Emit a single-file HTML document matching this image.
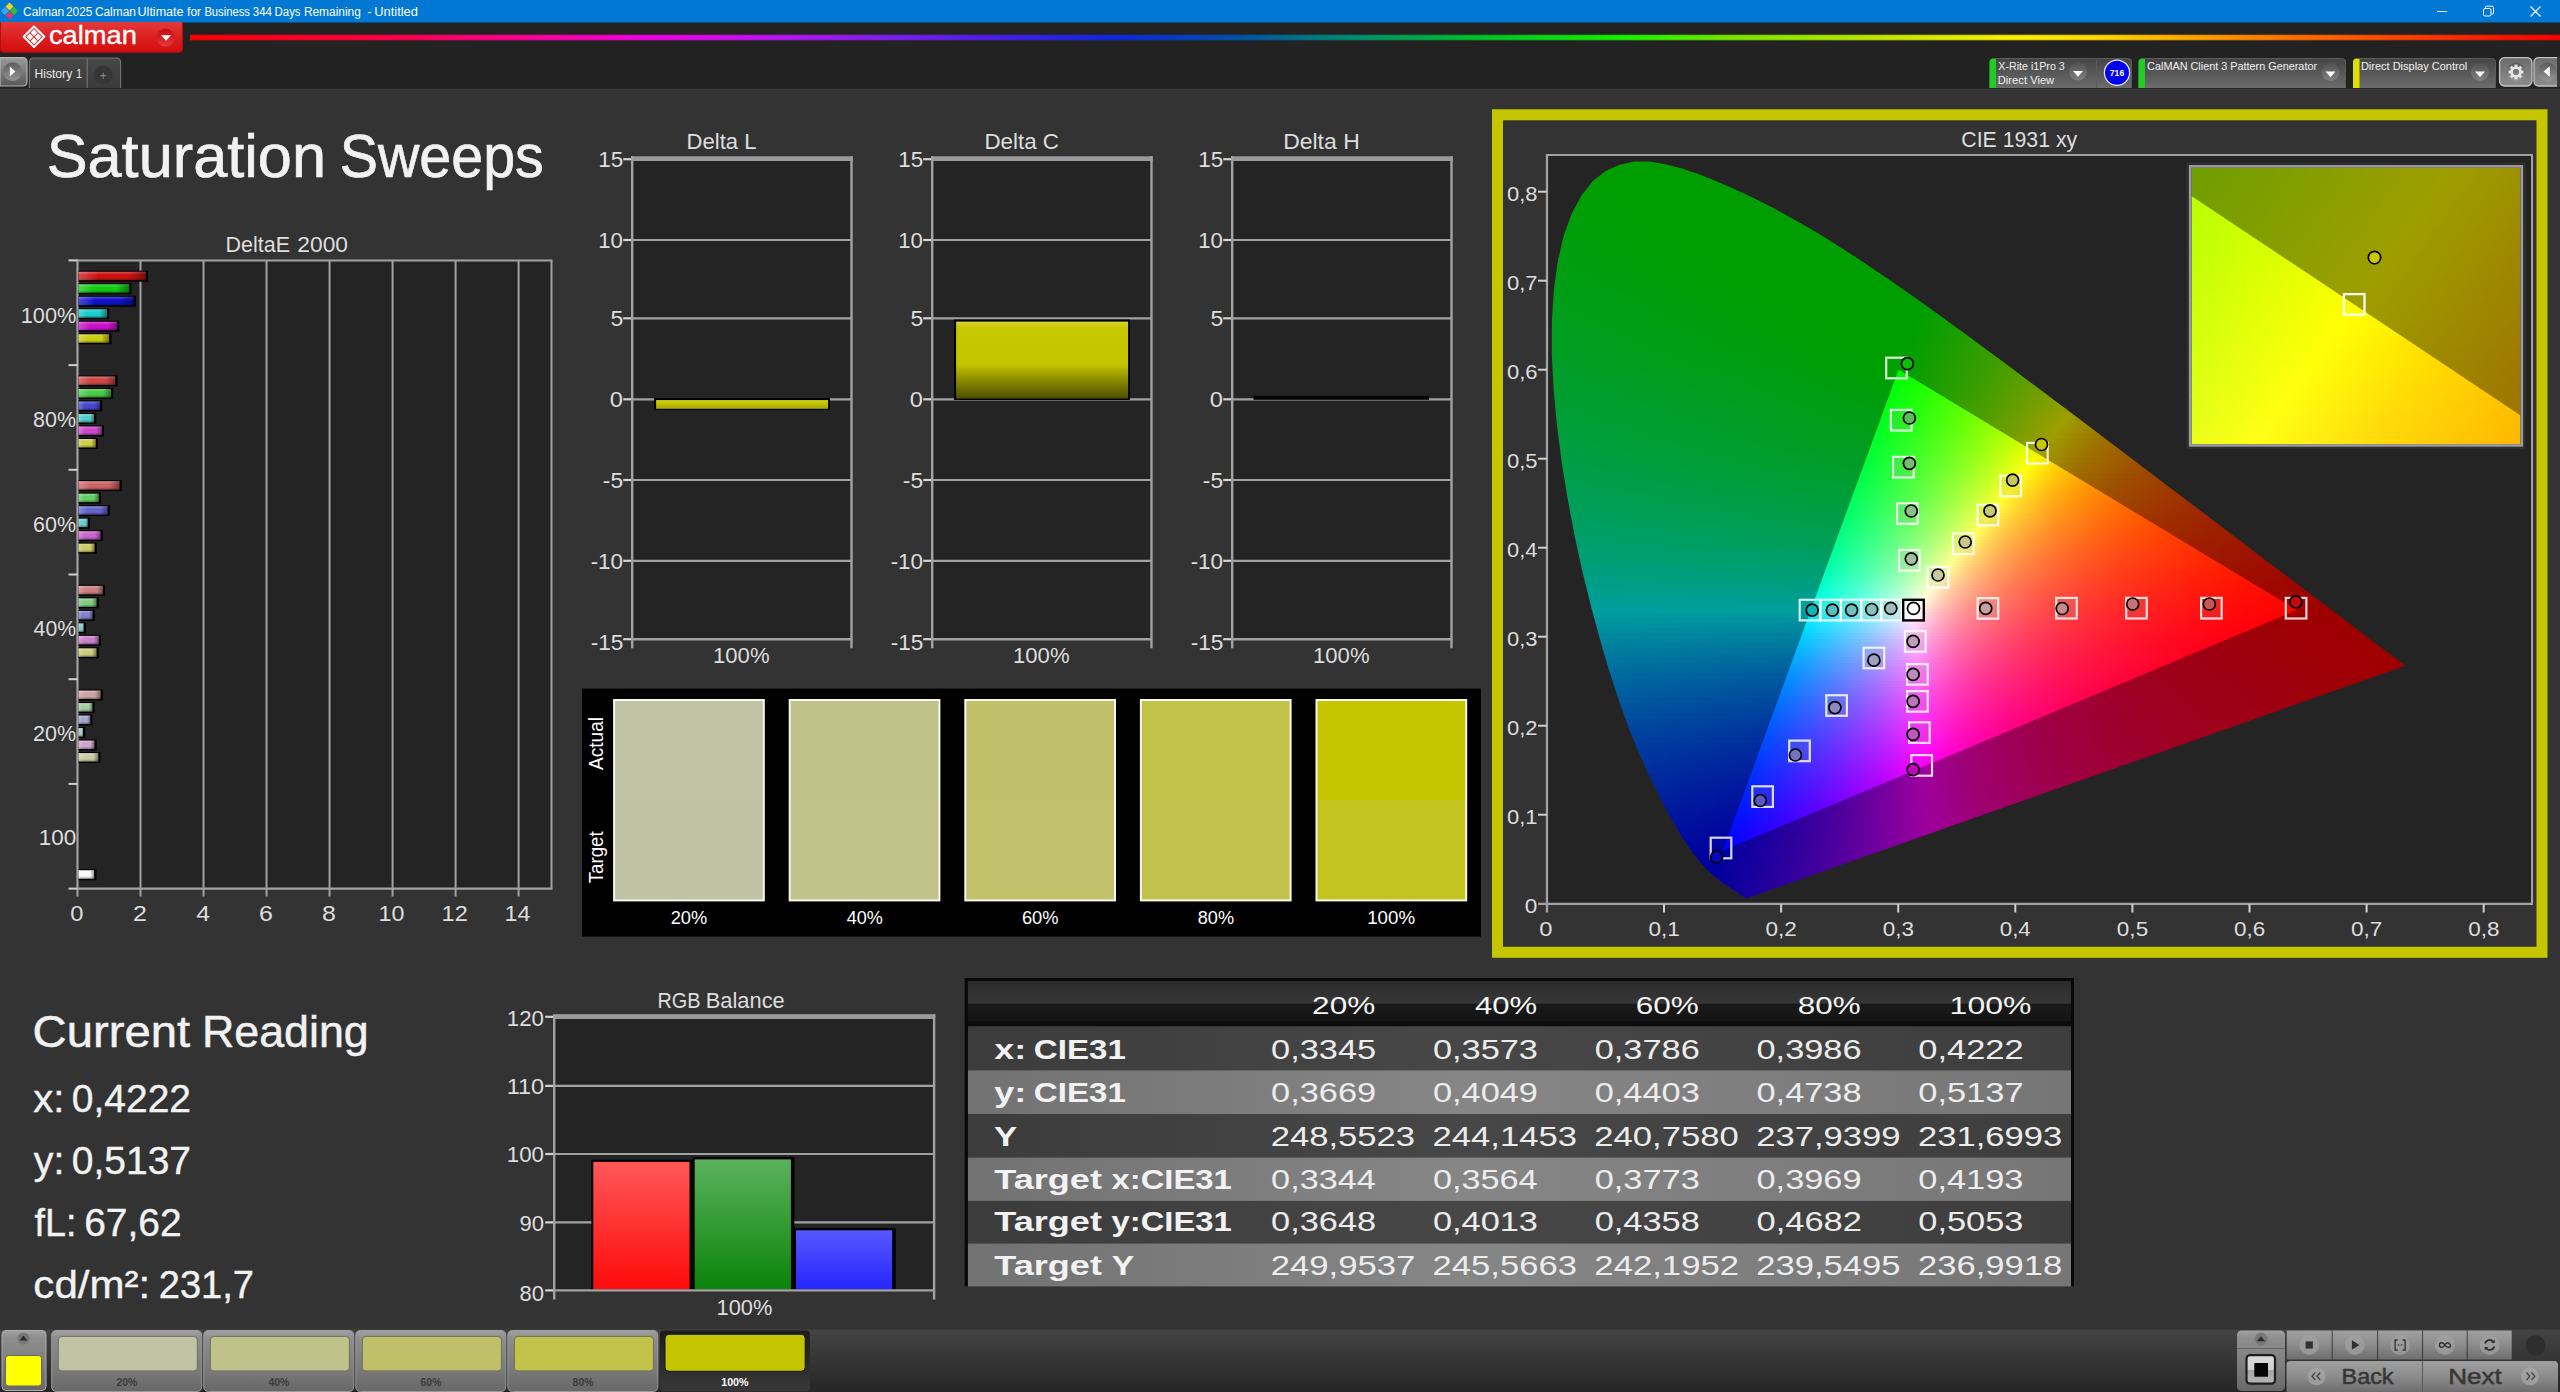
<!DOCTYPE html>
<html><head><meta charset="utf-8"><title>Calman</title>
<style>html,body{margin:0;padding:0;background:#333;overflow:hidden}svg{display:block}text{font-family:"Liberation Sans",sans-serif}</style>
</head><body>
<svg width="2560" height="1392" viewBox="0 0 2560 1392">
<rect x="0" y="0" width="2560" height="1392" fill="#333333" />
<rect x="0" y="22" width="2560" height="66.8" fill="#222222" />
<rect x="0" y="88.8" width="2560" height="1.6" fill="#3a3a3a" />
<rect x="0" y="0" width="2560" height="22.5" fill="#0078d4" />
<defs>
<linearGradient id="rb" x1="0" x2="1" y1="0" y2="0"><stop offset="0" stop-color="#ff0000"/><stop offset="0.075" stop-color="#ff003c"/><stop offset="0.134" stop-color="#ff008c"/><stop offset="0.194" stop-color="#f000e6"/><stop offset="0.243" stop-color="#be14f0"/><stop offset="0.292" stop-color="#821ef0"/><stop offset="0.342" stop-color="#461ee6"/><stop offset="0.391" stop-color="#0a28dc"/><stop offset="0.441" stop-color="#0050aa"/><stop offset="0.49" stop-color="#008c6e"/><stop offset="0.543" stop-color="#00be28"/><stop offset="0.603" stop-color="#14f000"/><stop offset="0.652" stop-color="#78e600"/><stop offset="0.711" stop-color="#bee600"/><stop offset="0.77" stop-color="#faf000"/><stop offset="0.81" stop-color="#ffd200"/><stop offset="0.87" stop-color="#ff8200"/><stop offset="0.929" stop-color="#fa4600"/><stop offset="0.978" stop-color="#fa1400"/><stop offset="1" stop-color="#ff0000"/></linearGradient>
<linearGradient id="redb" x1="0" x2="0" y1="0" y2="1"><stop offset="0" stop-color="#e23a3a"/><stop offset=".5" stop-color="#dc2020"/><stop offset="1" stop-color="#d40d0d"/></linearGradient>
<linearGradient id="tbb" x1="0" x2="0" y1="0" y2="1"><stop offset="0" stop-color="#444"/><stop offset="1" stop-color="#6c6c6c"/></linearGradient><linearGradient id="tbh" x1="0" x2="0" y1="0" y2="1"><stop offset="0" stop-color="#484848"/><stop offset="1" stop-color="#3a3a3a"/></linearGradient><linearGradient id="gbt" x1="0" x2="0" y1="0" y2="1"><stop offset="0" stop-color="#6c6c6c"/><stop offset="1" stop-color="#8c8c8c"/></linearGradient><linearGradient id="gci" x1="0" x2="0" y1="0" y2="1"><stop offset="0" stop-color="#555"/><stop offset="1" stop-color="#9a9a9a"/></linearGradient>
<linearGradient id="lgb" x1="0" x2="0" y1="0" y2="1"><stop offset="0" stop-color="#9a9a9a"/><stop offset=".5" stop-color="#7a7a7a"/><stop offset="1" stop-color="#585858"/></linearGradient>
<radialGradient id="dk" cx=".5" cy=".35" r=".7"><stop offset="0" stop-color="#2e2e2e"/><stop offset="1" stop-color="#444"/></radialGradient>
</defs>
<g transform="translate(9.5,11)"><path d="M0 -8.5L4 -4.5L0 -0.5L-4 -4.5Z" fill="#f2d21a"/><path d="M-4.5 -4L-0.5 0L-4.5 4L-8.5 0Z" fill="#35a8ee"/><path d="M4.5 -4L8.5 0L4.5 4L0.5 0Z" fill="#2fc22f"/><path d="M0 0.5L4 4.5L0 8.5L-4 4.5Z" fill="#e8336e"/></g>
<text x="23.01" y="16" font-size="12.3" fill="#ffffff" textLength="41.18" lengthAdjust="spacingAndGlyphs" >Calman</text>
<text x="65.91" y="16" font-size="12.3" fill="#ffffff" textLength="26.58" lengthAdjust="spacingAndGlyphs" >2025</text>
<text x="94.91" y="16" font-size="12.3" fill="#ffffff" textLength="40.98" lengthAdjust="spacingAndGlyphs" >Calman</text>
<text x="137.58" y="16" font-size="12.3" fill="#ffffff" textLength="45.91" lengthAdjust="spacingAndGlyphs" >Ultimate</text>
<text x="187.06" y="16" font-size="12.3" fill="#ffffff" textLength="13.99" lengthAdjust="spacingAndGlyphs" >for</text>
<text x="204.38" y="16" font-size="12.3" fill="#ffffff" textLength="45.53" lengthAdjust="spacingAndGlyphs" >Business</text>
<text x="252.83" y="16" font-size="12.3" fill="#ffffff" textLength="19.14" lengthAdjust="spacingAndGlyphs" >344</text>
<text x="274.57" y="16" font-size="12.3" fill="#ffffff" textLength="26.01" lengthAdjust="spacingAndGlyphs" >Days</text>
<text x="303.93" y="16" font-size="12.3" fill="#ffffff" textLength="56.86" lengthAdjust="spacingAndGlyphs" >Remaining</text>
<text x="367.40" y="16" font-size="12.3" fill="#ffffff" textLength="4.08" lengthAdjust="spacingAndGlyphs" >-</text>
<text x="374.35" y="16" font-size="12.3" fill="#ffffff" textLength="43.57" lengthAdjust="spacingAndGlyphs" >Untitled</text>
<line x1="2437" y1="11.5" x2="2447" y2="11.5" stroke="#ffffff" stroke-width="1" />
<rect x="2483.5" y="8.5" width="7.5" height="7.5" rx="1.5" fill="none" stroke="#fff" stroke-width="1"/><path d="M2485.5 8V7.2Q2485.5 6.2 2486.5 6.2H2492Q2493.5 6.2 2493.5 7.7V13Q2493.5 14 2492.5 14H2491.5" fill="none" stroke="#fff" stroke-width="1"/>
<path d="M2530.5 6.5L2540.5 16.5M2540.5 6.5L2530.5 16.5" stroke="#fff" stroke-width="1.1" fill="none"/>
<rect x="190" y="34.4" width="2370" height="6.2" fill="url(#rb)" opacity=".45"/>
<rect x="190" y="35.2" width="2370" height="4.6" fill="url(#rb)" />
<path d="M0 22H183V48Q183 52.5 178.5 52.5H4.5Q0 52.5 0 48Z" fill="url(#redb)"/>
<path d="M0.5 22V48Q0.5 52 4.5 52H178.5Q182.5 52 182.5 48V22" fill="none" stroke="#b01010" stroke-width="1"/>
<g transform="translate(34,36.8)" fill="#fff"><path d="M0 -10.3L10.3 0L0 10.3L-10.3 0Z" fill="none" stroke="#fff" stroke-width="2.1" stroke-linejoin="round"/><path d="M0.00 -7.20L3.10 -4.10L0.00 -1.00L-3.10 -4.10Z" stroke="#fff" stroke-width=".6" stroke-linejoin="round"/><path d="M4.10 -3.10L7.20 0.00L4.10 3.10L1.00 0.00Z" stroke="#fff" stroke-width=".6" stroke-linejoin="round"/><path d="M0.00 1.00L3.10 4.10L0.00 7.20L-3.10 4.10Z" stroke="#fff" stroke-width=".6" stroke-linejoin="round"/><path d="M-4.10 -3.10L-1.00 0.00L-4.10 3.10L-7.20 0.00Z" stroke="#fff" stroke-width=".6" stroke-linejoin="round"/></g>
<text x="48.93" y="43.5" font-size="25.4" fill="#ffffff" textLength="88.10" lengthAdjust="spacingAndGlyphs" stroke="#ffffff" stroke-width="0.35" >calman</text>
<defs><linearGradient id="rdc" x1="0" x2="0" y1="0" y2="1"><stop offset="0" stop-color="#c20a12"/><stop offset="1" stop-color="#e23a3a"/></linearGradient></defs>
<circle cx="165.6" cy="37.6" r="9" fill="url(#rdc)"/><path d="M161.2 35.2H171L166.1 40.8Z" fill="#fff"/>
<path d="M0 57.6H22.5Q27 57.6 27 62V81.5Q27 86 22.5 86H0Z" fill="url(#lgb)" stroke="#b4b4b4" stroke-width="1.2"/>
<circle cx="12.5" cy="71.6" r="9.4" fill="url(#gci)" opacity=".85"/><path d="M9.8 66.4L15.3 71.4L9.8 76.4Z" fill="#fff"/>
<path d="M29.4 88V62.5Q29.4 58 34 58H116Q120.6 58 120.6 62.5V88Z" fill="url(#tbh)"/><path d="M29.4 88V62.5Q29.4 58 34 58H116Q120.6 58 120.6 62.5V88" fill="none" stroke="#767676" stroke-width="1.1"/>
<line x1="87.2" y1="58.5" x2="87.2" y2="88" stroke="#767676" stroke-width="1.1" />
<text x="34.53" y="77.8" font-size="12.6" fill="#ececec" textLength="37.67" lengthAdjust="spacingAndGlyphs" >History</text>
<text x="76.12" y="77.8" font-size="12.6" fill="#ececec" textLength="6.09" lengthAdjust="spacingAndGlyphs" >1</text>
<circle cx="103.1" cy="75" r="9.4" fill="#363636"/><path d="M100.2 75.8H106.2M103.2 72.8V78.8" stroke="#8a8a8a" stroke-width="1" fill="none"/>
<path d="M1989.5 88V62.5Q1989.5 58 1994 58H2127.5Q2132 58 2132 62.5V88Z" fill="url(#tbb)"/>
<path d="M1989.5 88V62Q1989.5 58.5 1993.5 58.5H1996V88Z" fill="#22cc22"/>
<path d="M1993.5 58.5H2127.5Q2131.5 58.5 2131.5 62.5V88" fill="none" stroke="#5c5c5c" stroke-width="1"/>
<line x1="2096.5" y1="60" x2="2096.5" y2="88" stroke="#5c5c5c" stroke-width="1" />
<text x="1998.36" y="70" font-size="10.9" fill="#f0f0f0" textLength="66.40" lengthAdjust="spacingAndGlyphs" >X-Rite i1Pro 3</text>
<text x="1997.78" y="84.2" font-size="10.9" fill="#f0f0f0" textLength="56.44" lengthAdjust="spacingAndGlyphs" >Direct View</text>
<circle cx="2078" cy="71.5" r="9" fill="url(#gci)" opacity=".55"/><path d="M2073 71.1H2083L2078 76.7Z" fill="#fff"/>
<circle cx="2117" cy="72.7" r="12.6" fill="#0000f0" stroke="#e8e8ff" stroke-width="1.2"/>
<text x="2117.00" y="76" font-size="8.6" fill="#ffffff" text-anchor="middle" font-weight="bold" >716</text>
<path d="M2138.5 88V62.5Q2138.5 58 2143 58H2341.5Q2346 58 2346 62.5V88Z" fill="url(#tbb)"/>
<path d="M2138.5 88V62Q2138.5 58.5 2142.5 58.5H2145V88Z" fill="#22cc22"/>
<path d="M2142.5 58.5H2341.5Q2345.5 58.5 2345.5 62.5V88" fill="none" stroke="#5c5c5c" stroke-width="1"/>
<text x="2147.11" y="70" font-size="10.9" fill="#f0f0f0" textLength="169.94" lengthAdjust="spacingAndGlyphs" >CalMAN Client 3 Pattern Generator</text>
<circle cx="2330.5" cy="72" r="9" fill="url(#gci)" opacity=".55"/><path d="M2325.5 71.6H2335.5L2330.5 77.2Z" fill="#fff"/>
<path d="M2353 88V62.5Q2353 58 2357.5 58H2491.5Q2496 58 2496 62.5V88Z" fill="url(#tbb)"/>
<path d="M2353 88V62Q2353 58.5 2357 58.5H2359.5V88Z" fill="#e0e000"/>
<path d="M2357 58.5H2491.5Q2495.5 58.5 2495.5 62.5V88" fill="none" stroke="#5c5c5c" stroke-width="1"/>
<text x="2360.90" y="70" font-size="10.9" fill="#f0f0f0" textLength="106.32" lengthAdjust="spacingAndGlyphs" >Direct Display Control</text>
<circle cx="2480" cy="72" r="9" fill="url(#gci)" opacity=".55"/><path d="M2475 71.6H2485L2480 77.2Z" fill="#fff"/>
<rect x="2499.6" y="57.6" width="32.4" height="28.4" rx="5" fill="url(#gbt)" stroke="#c4c4c4" stroke-width="1.3"/>
<circle cx="2516" cy="72" r="9.6" fill="url(#gci)" opacity=".8"/>
<g transform="translate(2516,72)" fill="#e4e4e4"><circle r="4.4" fill="none" stroke="#e4e4e4" stroke-width="2.6"/><rect x="-1.5" y="-7.4" width="3" height="3.4" transform="rotate(0)"/><rect x="-1.5" y="-7.4" width="3" height="3.4" transform="rotate(45)"/><rect x="-1.5" y="-7.4" width="3" height="3.4" transform="rotate(90)"/><rect x="-1.5" y="-7.4" width="3" height="3.4" transform="rotate(135)"/><rect x="-1.5" y="-7.4" width="3" height="3.4" transform="rotate(180)"/><rect x="-1.5" y="-7.4" width="3" height="3.4" transform="rotate(225)"/><rect x="-1.5" y="-7.4" width="3" height="3.4" transform="rotate(270)"/><rect x="-1.5" y="-7.4" width="3" height="3.4" transform="rotate(315)"/></g>
<path d="M2560 57.6H2539Q2534 57.6 2534 62.6V81Q2534 86 2539 86H2560Z" fill="url(#gbt)" stroke="#c4c4c4" stroke-width="1.3"/>
<circle cx="2547.5" cy="72" r="9.6" fill="url(#gci)" opacity=".8"/><path d="M2549.8 66.2L2543.6 71.6L2549.8 77Z" fill="#fff"/>
<rect x="2557" y="57" width="3" height="30" fill="#3a3a3a"/>
<rect x="1497.5" y="114.8" width="1044.5" height="837.5" fill="none" stroke="#c6c600" stroke-width="11"/>
<rect x="1547" y="155" width="986" height="749" fill="#242424" />
<defs><clipPath id="cl"><polygon points="1746.2,898.4 1745.7,898.1 1745.1,897.8 1744.4,897.3 1743.6,896.8 1742.8,896.2 1741.9,895.6 1740.9,894.9 1739.8,894.2 1738.7,893.4 1737.4,892.6 1736.0,891.6 1734.4,890.6 1732.6,889.4 1730.7,888.1 1728.7,886.8 1726.5,885.3 1724.1,883.7 1721.6,881.9 1718.9,879.8 1715.9,877.5 1712.9,874.9 1709.6,872.0 1706.0,868.4 1701.9,863.9 1697.5,858.7 1692.6,852.4 1687.4,845.1 1681.8,836.7 1675.7,826.6 1669.0,814.8 1661.9,801.4 1654.2,785.8 1645.8,767.9 1636.8,747.9 1627.8,725.2 1618.7,699.7 1609.5,671.7 1600.5,641.3 1591.5,608.1 1582.7,572.7 1574.8,536.5 1567.8,499.4 1561.6,461.5 1556.9,424.6 1553.6,388.7 1551.8,353.8 1551.9,320.9 1553.9,290.1 1557.8,261.4 1563.6,236.0 1571.6,214.1 1581.5,195.6 1592.9,181.0 1605.6,170.9 1619.7,164.8 1634.3,161.6 1649.5,161.5 1665.2,164.3 1681.0,168.3 1696.9,173.4 1712.8,179.7 1728.5,186.4 1743.6,193.3 1758.5,200.5 1773.2,208.0 1787.7,215.9 1802.0,224.0 1816.2,232.3 1830.4,241.0 1844.5,249.9 1858.6,259.1 1872.6,268.4 1886.6,277.9 1900.5,287.5 1914.4,297.3 1928.4,307.3 1942.3,317.3 1956.3,327.4 1970.3,337.6 1984.2,347.9 1998.2,358.2 2012.1,368.6 2025.9,379.0 2039.8,389.3 2053.6,399.7 2067.4,410.1 2081.0,420.3 2094.6,430.6 2108.0,440.8 2121.3,450.8 2134.5,460.8 2147.5,470.7 2160.3,480.4 2172.9,490.0 2185.3,499.3 2197.5,508.5 2209.4,517.5 2220.9,526.2 2232.1,534.7 2243.0,543.0 2253.4,550.9 2263.2,558.4 2272.6,565.5 2281.6,572.3 2290.3,578.8 2298.6,585.1 2306.4,591.0 2313.7,596.6 2320.6,601.7 2327.0,606.5 2333.0,611.1 2338.6,615.3 2343.8,619.3 2348.6,622.9 2353.0,626.3 2357.1,629.4 2360.9,632.3 2364.5,635.0 2367.8,637.4 2370.8,639.8 2373.7,641.9 2376.3,643.9 2378.9,645.9 2381.2,647.7 2383.5,649.4 2385.6,651.0 2387.5,652.4 2389.3,653.8 2391.0,655.1 2392.6,656.2 2394.0,657.3 2395.3,658.3 2396.5,659.1 2397.5,660.0 2398.5,660.7 2399.4,661.4 2400.2,662.0 2400.9,662.5 2401.5,663.0 2402.2,663.5 2402.9,664.1 2403.7,664.7 2404.5,665.3 2405.2,665.8"/></clipPath><clipPath id="ct"><polygon points="2296.8,610.1 1898.6,369.7 1723.0,850.5"/></clipPath>
<linearGradient id="a0" gradientUnits="userSpaceOnUse" x1="1624.8" x2="1661.1" y1="0" y2="0"><stop offset="0" stop-color="#009e00"/><stop offset="1" stop-color="#009e00"/></linearGradient><linearGradient id="a1" gradientUnits="userSpaceOnUse" x1="1609.2" x2="1682.7" y1="0" y2="0"><stop offset="0" stop-color="#009e00"/><stop offset="1" stop-color="#009e00"/></linearGradient><linearGradient id="a2" gradientUnits="userSpaceOnUse" x1="1599.9" x2="1698.7" y1="0" y2="0"><stop offset="0" stop-color="#009e00"/><stop offset="1" stop-color="#009e00"/></linearGradient><linearGradient id="a3" gradientUnits="userSpaceOnUse" x1="1593.6" x2="1711.5" y1="0" y2="0"><stop offset="0" stop-color="#009e00"/><stop offset="1" stop-color="#009e00"/></linearGradient><linearGradient id="a4" gradientUnits="userSpaceOnUse" x1="1588.3" x2="1723.5" y1="0" y2="0"><stop offset="0" stop-color="#009e00"/><stop offset="1" stop-color="#009e00"/></linearGradient><linearGradient id="a5" gradientUnits="userSpaceOnUse" x1="1584.4" x2="1735.0" y1="0" y2="0"><stop offset="0" stop-color="#009e01"/><stop offset="1" stop-color="#009e00"/></linearGradient><linearGradient id="a6" gradientUnits="userSpaceOnUse" x1="1580.5" x2="1746.1" y1="0" y2="0"><stop offset="0" stop-color="#009e02"/><stop offset="1" stop-color="#009e00"/></linearGradient><linearGradient id="a7" gradientUnits="userSpaceOnUse" x1="1577.2" x2="1756.4" y1="0" y2="0"><stop offset="0" stop-color="#009e03"/><stop offset="1" stop-color="#009e00"/></linearGradient><linearGradient id="a8" gradientUnits="userSpaceOnUse" x1="1574.6" x2="1766.4" y1="0" y2="0"><stop offset="0" stop-color="#009e04"/><stop offset="0.234" stop-color="#009e00"/><stop offset="1" stop-color="#009e00"/></linearGradient><linearGradient id="a9" gradientUnits="userSpaceOnUse" x1="1571.9" x2="1776.1" y1="0" y2="0"><stop offset="0" stop-color="#009e05"/><stop offset="0.275" stop-color="#009e00"/><stop offset="1" stop-color="#009e00"/></linearGradient><linearGradient id="a10" gradientUnits="userSpaceOnUse" x1="1569.2" x2="1785.4" y1="0" y2="0"><stop offset="0" stop-color="#009e06"/><stop offset="0.301" stop-color="#009e00"/><stop offset="1" stop-color="#009e00"/></linearGradient><linearGradient id="a11" gradientUnits="userSpaceOnUse" x1="1567.2" x2="1794.5" y1="0" y2="0"><stop offset="0" stop-color="#009e07"/><stop offset="0.342" stop-color="#009e00"/><stop offset="1" stop-color="#009e00"/></linearGradient><linearGradient id="a12" gradientUnits="userSpaceOnUse" x1="1565.3" x2="1803.3" y1="0" y2="0"><stop offset="0" stop-color="#009e08"/><stop offset="0.362" stop-color="#009e00"/><stop offset="1" stop-color="#009e00"/></linearGradient><linearGradient id="a13" gradientUnits="userSpaceOnUse" x1="1563.5" x2="1811.8" y1="0" y2="0"><stop offset="0" stop-color="#009e09"/><stop offset="0.386" stop-color="#009e00"/><stop offset="1" stop-color="#009e00"/></linearGradient><linearGradient id="a14" gradientUnits="userSpaceOnUse" x1="1561.7" x2="1820.3" y1="0" y2="0"><stop offset="0" stop-color="#009e0a"/><stop offset="0.414" stop-color="#009e00"/><stop offset="1" stop-color="#009e00"/></linearGradient><linearGradient id="a15" gradientUnits="userSpaceOnUse" x1="1560.1" x2="1828.5" y1="0" y2="0"><stop offset="0" stop-color="#009e0b"/><stop offset="0.433" stop-color="#009e00"/><stop offset="1" stop-color="#009e00"/></linearGradient><linearGradient id="a16" gradientUnits="userSpaceOnUse" x1="1559.0" x2="1836.5" y1="0" y2="0"><stop offset="0" stop-color="#009e0c"/><stop offset="0.452" stop-color="#009e00"/><stop offset="1" stop-color="#009e00"/></linearGradient><linearGradient id="a17" gradientUnits="userSpaceOnUse" x1="1557.8" x2="1844.4" y1="0" y2="0"><stop offset="0" stop-color="#009e0d"/><stop offset="0.469" stop-color="#009e00"/><stop offset="1" stop-color="#009e00"/></linearGradient><linearGradient id="a18" gradientUnits="userSpaceOnUse" x1="1556.7" x2="1852.2" y1="0" y2="0"><stop offset="0" stop-color="#009e0e"/><stop offset="0.485" stop-color="#009e00"/><stop offset="1" stop-color="#009e00"/></linearGradient><linearGradient id="a19" gradientUnits="userSpaceOnUse" x1="1555.5" x2="1859.9" y1="0" y2="0"><stop offset="0" stop-color="#009e0f"/><stop offset="0.51" stop-color="#009e00"/><stop offset="1" stop-color="#009e00"/></linearGradient><linearGradient id="a20" gradientUnits="userSpaceOnUse" x1="1554.5" x2="1867.5" y1="0" y2="0"><stop offset="0" stop-color="#009e10"/><stop offset="0.524" stop-color="#009e00"/><stop offset="1" stop-color="#009e00"/></linearGradient><linearGradient id="a21" gradientUnits="userSpaceOnUse" x1="1553.9" x2="1875.0" y1="0" y2="0"><stop offset="0" stop-color="#009e11"/><stop offset="0.537" stop-color="#009e00"/><stop offset="1" stop-color="#009e00"/></linearGradient><linearGradient id="a22" gradientUnits="userSpaceOnUse" x1="1553.2" x2="1882.4" y1="0" y2="0"><stop offset="0" stop-color="#009e12"/><stop offset="0.555" stop-color="#009e00"/><stop offset="1" stop-color="#009e00"/></linearGradient><linearGradient id="a23" gradientUnits="userSpaceOnUse" x1="1552.5" x2="1889.7" y1="0" y2="0"><stop offset="0" stop-color="#009e13"/><stop offset="0.566" stop-color="#009e00"/><stop offset="1" stop-color="#009e00"/></linearGradient><linearGradient id="a24" gradientUnits="userSpaceOnUse" x1="1551.8" x2="1896.9" y1="0" y2="0"><stop offset="0" stop-color="#009e14"/><stop offset="0.578" stop-color="#009e00"/><stop offset="1" stop-color="#009e00"/></linearGradient><linearGradient id="a25" gradientUnits="userSpaceOnUse" x1="1551.2" x2="1904.2" y1="0" y2="0"><stop offset="0" stop-color="#009e15"/><stop offset="0.593" stop-color="#009e00"/><stop offset="1" stop-color="#009e00"/></linearGradient><linearGradient id="a26" gradientUnits="userSpaceOnUse" x1="1550.7" x2="1911.3" y1="0" y2="0"><stop offset="0" stop-color="#009e16"/><stop offset="0.603" stop-color="#009e00"/><stop offset="1" stop-color="#009e00"/></linearGradient><linearGradient id="a27" gradientUnits="userSpaceOnUse" x1="1550.4" x2="1918.4" y1="0" y2="0"><stop offset="0" stop-color="#009e18"/><stop offset="0.61" stop-color="#009e00"/><stop offset="1" stop-color="#009e00"/></linearGradient><linearGradient id="a28" gradientUnits="userSpaceOnUse" x1="1550.0" x2="1925.4" y1="0" y2="0"><stop offset="0" stop-color="#009e19"/><stop offset="0.627" stop-color="#009e00"/><stop offset="1" stop-color="#019e00"/></linearGradient><linearGradient id="a29" gradientUnits="userSpaceOnUse" x1="1549.7" x2="1932.4" y1="0" y2="0"><stop offset="0" stop-color="#009e1a"/><stop offset="0.633" stop-color="#009e00"/><stop offset="0.969" stop-color="#009e00"/><stop offset="1" stop-color="#069e00"/></linearGradient><linearGradient id="a30" gradientUnits="userSpaceOnUse" x1="1549.4" x2="1939.4" y1="0" y2="0"><stop offset="0" stop-color="#009e1b"/><stop offset="0.646" stop-color="#009e00"/><stop offset="0.946" stop-color="#009e00"/><stop offset="1" stop-color="#0a9e00"/></linearGradient><linearGradient id="a31" gradientUnits="userSpaceOnUse" x1="1549.1" x2="1946.3" y1="0" y2="0"><stop offset="0" stop-color="#009e1c"/><stop offset="0.654" stop-color="#009e00"/><stop offset="0.925" stop-color="#009e00"/><stop offset="1" stop-color="#0f9e00"/></linearGradient><linearGradient id="a32" gradientUnits="userSpaceOnUse" x1="1548.9" x2="1953.2" y1="0" y2="0"><stop offset="0" stop-color="#009e1d"/><stop offset="0.659" stop-color="#009e00"/><stop offset="0.904" stop-color="#009e00"/><stop offset="1" stop-color="#159e00"/></linearGradient><linearGradient id="a33" gradientUnits="userSpaceOnUse" x1="1548.9" x2="1960.1" y1="0" y2="0"><stop offset="0" stop-color="#009e1e"/><stop offset="0.674" stop-color="#009e00"/><stop offset="0.884" stop-color="#009e00"/><stop offset="1" stop-color="#1a9e00"/></linearGradient><linearGradient id="a34" gradientUnits="userSpaceOnUse" x1="1548.9" x2="1966.9" y1="0" y2="0"><stop offset="0" stop-color="#009e20"/><stop offset="0.679" stop-color="#009e00"/><stop offset="0.871" stop-color="#009e00"/><stop offset="1" stop-color="#209e00"/></linearGradient><linearGradient id="a35" gradientUnits="userSpaceOnUse" x1="1548.8" x2="1973.8" y1="0" y2="0"><stop offset="0" stop-color="#009e21"/><stop offset="0.69" stop-color="#009e00"/><stop offset="0.852" stop-color="#009e00"/><stop offset="1" stop-color="#259e00"/></linearGradient><linearGradient id="a36" gradientUnits="userSpaceOnUse" x1="1548.8" x2="1980.6" y1="0" y2="0"><stop offset="0" stop-color="#009e22"/><stop offset="0.694" stop-color="#009e00"/><stop offset="0.833" stop-color="#009e00"/><stop offset="1" stop-color="#2b9e00"/></linearGradient><linearGradient id="a37" gradientUnits="userSpaceOnUse" x1="1548.8" x2="1987.4" y1="0" y2="0"><stop offset="0" stop-color="#009e23"/><stop offset="0.707" stop-color="#009e00"/><stop offset="0.816" stop-color="#009e00"/><stop offset="1" stop-color="#329e00"/></linearGradient><linearGradient id="a38" gradientUnits="userSpaceOnUse" x1="1548.8" x2="1994.1" y1="0" y2="0"><stop offset="0" stop-color="#009e24"/><stop offset="0.711" stop-color="#009e00"/><stop offset="0.799" stop-color="#009e00"/><stop offset="1" stop-color="#389e00"/></linearGradient><linearGradient id="a39" gradientUnits="userSpaceOnUse" x1="1548.8" x2="2000.8" y1="0" y2="0"><stop offset="0" stop-color="#009e26"/><stop offset="0.781" stop-color="#009e00"/><stop offset="1" stop-color="#3f9e00"/></linearGradient><linearGradient id="a40" gradientUnits="userSpaceOnUse" x1="1549.0" x2="2007.5" y1="0" y2="0"><stop offset="0" stop-color="#009e27"/><stop offset="0.771" stop-color="#009e00"/><stop offset="1" stop-color="#469e00"/></linearGradient><linearGradient id="a41" gradientUnits="userSpaceOnUse" x1="1549.3" x2="2014.2" y1="0" y2="0"><stop offset="0" stop-color="#009e28"/><stop offset="0.755" stop-color="#009e00"/><stop offset="1" stop-color="#4d9e00"/></linearGradient><linearGradient id="a42" gradientUnits="userSpaceOnUse" x1="1549.6" x2="2020.9" y1="0" y2="0"><stop offset="0" stop-color="#009e2a"/><stop offset="0.399" stop-color="#009e16"/><stop offset="0.741" stop-color="#009e00"/><stop offset="1" stop-color="#559e00"/></linearGradient><linearGradient id="a43" gradientUnits="userSpaceOnUse" x1="1549.8" x2="2027.6" y1="0" y2="0"><stop offset="0" stop-color="#009e2b"/><stop offset="0.388" stop-color="#009e18"/><stop offset="0.725" stop-color="#009e02"/><stop offset="0.869" stop-color="#2d9e00"/><stop offset="1" stop-color="#5c9e00"/></linearGradient><linearGradient id="a44" gradientUnits="userSpaceOnUse" x1="1550.1" x2="2034.3" y1="0" y2="0"><stop offset="0" stop-color="#009e2c"/><stop offset="0.383" stop-color="#009e1a"/><stop offset="0.71" stop-color="#009e04"/><stop offset="0.858" stop-color="#2f9e00"/><stop offset="1" stop-color="#659e00"/></linearGradient><linearGradient id="a45" gradientUnits="userSpaceOnUse" x1="1550.4" x2="2041.0" y1="0" y2="0"><stop offset="0" stop-color="#009e2e"/><stop offset="0.372" stop-color="#009e1b"/><stop offset="0.695" stop-color="#009e06"/><stop offset="0.762" stop-color="#149e00"/><stop offset="0.848" stop-color="#319e00"/><stop offset="1" stop-color="#6d9e00"/></linearGradient><linearGradient id="a46" gradientUnits="userSpaceOnUse" x1="1550.6" x2="2047.7" y1="0" y2="0"><stop offset="0" stop-color="#009e2f"/><stop offset="0.367" stop-color="#009e1d"/><stop offset="0.687" stop-color="#019e07"/><stop offset="0.771" stop-color="#1c9e00"/><stop offset="0.849" stop-color="#389e00"/><stop offset="1" stop-color="#769e00"/></linearGradient><linearGradient id="a47" gradientUnits="userSpaceOnUse" x1="1551.0" x2="2054.3" y1="0" y2="0"><stop offset="0" stop-color="#009e31"/><stop offset="0.363" stop-color="#009e1e"/><stop offset="0.673" stop-color="#009e09"/><stop offset="0.774" stop-color="#239e00"/><stop offset="0.845" stop-color="#3d9e00"/><stop offset="1" stop-color="#809e00"/></linearGradient><linearGradient id="a48" gradientUnits="userSpaceOnUse" x1="1551.5" x2="2061.0" y1="0" y2="0"><stop offset="0" stop-color="#009e32"/><stop offset="0.353" stop-color="#009e20"/><stop offset="0.659" stop-color="#009e0b"/><stop offset="0.782" stop-color="#2b9e00"/><stop offset="0.835" stop-color="#409e00"/><stop offset="1" stop-color="#8a9e00"/></linearGradient><linearGradient id="a49" gradientUnits="userSpaceOnUse" x1="1551.9" x2="2067.7" y1="0" y2="0"><stop offset="0" stop-color="#009e34"/><stop offset="0.349" stop-color="#009e22"/><stop offset="0.645" stop-color="#009e0d"/><stop offset="0.831" stop-color="#459e00"/><stop offset="1" stop-color="#949e00"/></linearGradient><linearGradient id="a50" gradientUnits="userSpaceOnUse" x1="1552.4" x2="2074.3" y1="0" y2="0"><stop offset="0" stop-color="#009e35"/><stop offset="0.339" stop-color="#009e24"/><stop offset="0.632" stop-color="#009e0f"/><stop offset="0.816" stop-color="#469e00"/><stop offset="1" stop-color="#9e9d00"/></linearGradient><linearGradient id="a51" gradientUnits="userSpaceOnUse" x1="1552.9" x2="2080.9" y1="0" y2="0"><stop offset="0" stop-color="#009e37"/><stop offset="0.333" stop-color="#009e25"/><stop offset="0.621" stop-color="#009e11"/><stop offset="0.808" stop-color="#499e00"/><stop offset="0.977" stop-color="#9e9e00"/><stop offset="1" stop-color="#9e9200"/></linearGradient><linearGradient id="a52" gradientUnits="userSpaceOnUse" x1="1553.3" x2="2087.5" y1="0" y2="0"><stop offset="0" stop-color="#009e38"/><stop offset="0.609" stop-color="#009e13"/><stop offset="0.788" stop-color="#479e02"/><stop offset="0.955" stop-color="#9d9e00"/><stop offset="1" stop-color="#9e8800"/></linearGradient><linearGradient id="a53" gradientUnits="userSpaceOnUse" x1="1553.8" x2="2094.2" y1="0" y2="0"><stop offset="0" stop-color="#009e3a"/><stop offset="0.326" stop-color="#009e29"/><stop offset="0.602" stop-color="#019e14"/><stop offset="0.779" stop-color="#4a9e03"/><stop offset="0.939" stop-color="#9e9e00"/><stop offset="1" stop-color="#9e7f00"/></linearGradient><linearGradient id="a54" gradientUnits="userSpaceOnUse" x1="1554.3" x2="2100.8" y1="0" y2="0"><stop offset="0" stop-color="#009e3c"/><stop offset="0.59" stop-color="#009e17"/><stop offset="0.765" stop-color="#4b9e06"/><stop offset="0.814" stop-color="#639e00"/><stop offset="0.918" stop-color="#9d9e00"/><stop offset="1" stop-color="#9e7700"/></linearGradient><linearGradient id="a55" gradientUnits="userSpaceOnUse" x1="1555.0" x2="2107.4" y1="0" y2="0"><stop offset="0" stop-color="#009e3d"/><stop offset="0.578" stop-color="#009e19"/><stop offset="0.746" stop-color="#489e09"/><stop offset="0.822" stop-color="#6f9e00"/><stop offset="0.903" stop-color="#9e9e00"/><stop offset="0.946" stop-color="#9e8600"/><stop offset="1" stop-color="#9e6f00"/></linearGradient><linearGradient id="a56" gradientUnits="userSpaceOnUse" x1="1555.6" x2="2114.0" y1="0" y2="0"><stop offset="0" stop-color="#009e3f"/><stop offset="0.567" stop-color="#009e1b"/><stop offset="0.733" stop-color="#499e0b"/><stop offset="0.824" stop-color="#7a9e00"/><stop offset="0.882" stop-color="#9d9e00"/><stop offset="0.941" stop-color="#9e7f00"/><stop offset="1" stop-color="#9e6800"/></linearGradient><linearGradient id="a57" gradientUnits="userSpaceOnUse" x1="1556.3" x2="2120.6" y1="0" y2="0"><stop offset="0" stop-color="#009e41"/><stop offset="0.556" stop-color="#009e1d"/><stop offset="0.714" stop-color="#479e0e"/><stop offset="0.831" stop-color="#889e00"/><stop offset="0.868" stop-color="#9e9d00"/><stop offset="0.926" stop-color="#9e7e00"/><stop offset="1" stop-color="#9e6100"/></linearGradient><linearGradient id="a58" gradientUnits="userSpaceOnUse" x1="1556.9" x2="2127.2" y1="0" y2="0"><stop offset="0" stop-color="#009e42"/><stop offset="0.545" stop-color="#009e20"/><stop offset="0.702" stop-color="#479e10"/><stop offset="0.848" stop-color="#9d9e00"/><stop offset="0.916" stop-color="#9e7a00"/><stop offset="1" stop-color="#9e5b00"/></linearGradient><linearGradient id="a59" gradientUnits="userSpaceOnUse" x1="1557.5" x2="2133.8" y1="0" y2="0"><stop offset="0" stop-color="#009e44"/><stop offset="0.539" stop-color="#019e22"/><stop offset="0.689" stop-color="#489e13"/><stop offset="0.834" stop-color="#9e9d01"/><stop offset="0.907" stop-color="#9e7600"/><stop offset="1" stop-color="#9e5500"/></linearGradient><linearGradient id="a60" gradientUnits="userSpaceOnUse" x1="1558.2" x2="2140.4" y1="0" y2="0"><stop offset="0" stop-color="#009e46"/><stop offset="0.528" stop-color="#009e24"/><stop offset="0.682" stop-color="#4b9e15"/><stop offset="0.815" stop-color="#9e9e04"/><stop offset="0.897" stop-color="#9e7200"/><stop offset="1" stop-color="#9e5000"/></linearGradient><linearGradient id="a61" gradientUnits="userSpaceOnUse" x1="1558.9" x2="2147.0" y1="0" y2="0"><stop offset="0" stop-color="#009e48"/><stop offset="0.518" stop-color="#009e27"/><stop offset="0.66" stop-color="#469e19"/><stop offset="0.802" stop-color="#9e9d07"/><stop offset="0.848" stop-color="#9e8100"/><stop offset="0.888" stop-color="#9e6e00"/><stop offset="1" stop-color="#9e4b00"/></linearGradient><linearGradient id="a62" gradientUnits="userSpaceOnUse" x1="1559.7" x2="2153.5" y1="0" y2="0"><stop offset="0" stop-color="#009e4a"/><stop offset="0.51" stop-color="#019e29"/><stop offset="0.657" stop-color="#4b9e1b"/><stop offset="0.783" stop-color="#9d9e0b"/><stop offset="0.828" stop-color="#9e8203"/><stop offset="0.879" stop-color="#9e6b00"/><stop offset="1" stop-color="#9e4600"/></linearGradient><linearGradient id="a63" gradientUnits="userSpaceOnUse" x1="1560.5" x2="2160.1" y1="0" y2="0"><stop offset="0" stop-color="#009e4c"/><stop offset="0.5" stop-color="#009e2c"/><stop offset="0.64" stop-color="#499e1e"/><stop offset="0.77" stop-color="#9e9d0d"/><stop offset="0.815" stop-color="#9e8106"/><stop offset="0.865" stop-color="#9e6900"/><stop offset="0.925" stop-color="#9e5400"/><stop offset="1" stop-color="#9e4100"/></linearGradient><linearGradient id="a64" gradientUnits="userSpaceOnUse" x1="1561.3" x2="2166.7" y1="0" y2="0"><stop offset="0" stop-color="#009e4e"/><stop offset="0.49" stop-color="#009e2f"/><stop offset="0.629" stop-color="#4a9e21"/><stop offset="0.752" stop-color="#9e9e11"/><stop offset="0.802" stop-color="#9e7f08"/><stop offset="0.856" stop-color="#9e6600"/><stop offset="0.921" stop-color="#9e5000"/><stop offset="1" stop-color="#9e3d00"/></linearGradient><linearGradient id="a65" gradientUnits="userSpaceOnUse" x1="1562.1" x2="2173.3" y1="0" y2="0"><stop offset="0" stop-color="#009e50"/><stop offset="0.48" stop-color="#009e32"/><stop offset="0.613" stop-color="#479e25"/><stop offset="0.74" stop-color="#9e9d14"/><stop offset="0.789" stop-color="#9e7d0a"/><stop offset="0.848" stop-color="#9e6202"/><stop offset="0.917" stop-color="#9e4c00"/><stop offset="1" stop-color="#9e3900"/></linearGradient><linearGradient id="a66" gradientUnits="userSpaceOnUse" x1="1562.9" x2="2179.9" y1="0" y2="0"><stop offset="0" stop-color="#009e52"/><stop offset="0.471" stop-color="#009e35"/><stop offset="0.602" stop-color="#489e28"/><stop offset="0.723" stop-color="#9e9e18"/><stop offset="0.777" stop-color="#9e7b0d"/><stop offset="0.835" stop-color="#9e6004"/><stop offset="0.908" stop-color="#9e4900"/><stop offset="1" stop-color="#9e3500"/></linearGradient><linearGradient id="a67" gradientUnits="userSpaceOnUse" x1="1563.8" x2="2186.5" y1="0" y2="0"><stop offset="0" stop-color="#009e55"/><stop offset="0.462" stop-color="#009e38"/><stop offset="0.587" stop-color="#469e2b"/><stop offset="0.707" stop-color="#9c9e1d"/><stop offset="0.764" stop-color="#9e790f"/><stop offset="0.827" stop-color="#9e5d05"/><stop offset="0.904" stop-color="#9e4500"/><stop offset="1" stop-color="#9e3100"/></linearGradient><linearGradient id="a68" gradientUnits="userSpaceOnUse" x1="1564.6" x2="2193.2" y1="0" y2="0"><stop offset="0" stop-color="#009e57"/><stop offset="0.457" stop-color="#019e3a"/><stop offset="0.581" stop-color="#499e2e"/><stop offset="0.695" stop-color="#9e9e20"/><stop offset="0.752" stop-color="#9e7712"/><stop offset="0.819" stop-color="#9e5a07"/><stop offset="0.876" stop-color="#9e4800"/><stop offset="1" stop-color="#9e2e00"/></linearGradient><linearGradient id="a69" gradientUnits="userSpaceOnUse" x1="1565.5" x2="2199.8" y1="0" y2="0"><stop offset="0" stop-color="#009e59"/><stop offset="0.448" stop-color="#019e3e"/><stop offset="0.571" stop-color="#4a9e32"/><stop offset="0.679" stop-color="#9d9e24"/><stop offset="0.741" stop-color="#9e7514"/><stop offset="0.807" stop-color="#9e5809"/><stop offset="0.882" stop-color="#9e4100"/><stop offset="1" stop-color="#9e2a00"/></linearGradient><linearGradient id="a70" gradientUnits="userSpaceOnUse" x1="1566.4" x2="2206.4" y1="0" y2="0"><stop offset="0" stop-color="#009e5b"/><stop offset="0.439" stop-color="#009e41"/><stop offset="0.556" stop-color="#489e36"/><stop offset="0.664" stop-color="#9b9e29"/><stop offset="0.668" stop-color="#9e9d28"/><stop offset="0.729" stop-color="#9e7317"/><stop offset="0.799" stop-color="#9e550a"/><stop offset="0.883" stop-color="#9e3d00"/><stop offset="1" stop-color="#9e2700"/></linearGradient><linearGradient id="a71" gradientUnits="userSpaceOnUse" x1="1567.4" x2="2213.0" y1="0" y2="0"><stop offset="0" stop-color="#009e5e"/><stop offset="0.431" stop-color="#009e44"/><stop offset="0.546" stop-color="#499e39"/><stop offset="0.653" stop-color="#9d9e2c"/><stop offset="0.713" stop-color="#9e741a"/><stop offset="0.787" stop-color="#9e530c"/><stop offset="0.889" stop-color="#9e3700"/><stop offset="1" stop-color="#9e2400"/></linearGradient><linearGradient id="a72" gradientUnits="userSpaceOnUse" x1="1568.3" x2="2219.6" y1="0" y2="0"><stop offset="0" stop-color="#009e60"/><stop offset="0.422" stop-color="#009e48"/><stop offset="0.537" stop-color="#499e3d"/><stop offset="0.638" stop-color="#9b9e31"/><stop offset="0.706" stop-color="#9e6f1b"/><stop offset="0.78" stop-color="#9e500d"/><stop offset="0.89" stop-color="#9e3300"/><stop offset="1" stop-color="#9e2100"/></linearGradient><linearGradient id="a73" gradientUnits="userSpaceOnUse" x1="1569.3" x2="2226.2" y1="0" y2="0"><stop offset="0" stop-color="#009e63"/><stop offset="0.416" stop-color="#009e4b"/><stop offset="0.525" stop-color="#499e41"/><stop offset="0.626" stop-color="#9c9e35"/><stop offset="0.689" stop-color="#9e7120"/><stop offset="0.767" stop-color="#9e4f0f"/><stop offset="0.895" stop-color="#9e2e00"/><stop offset="1" stop-color="#9e1e00"/></linearGradient><linearGradient id="a74" gradientUnits="userSpaceOnUse" x1="1570.2" x2="2232.8" y1="0" y2="0"><stop offset="0" stop-color="#009e66"/><stop offset="0.407" stop-color="#009e4f"/><stop offset="0.516" stop-color="#499e45"/><stop offset="0.611" stop-color="#9a9e3a"/><stop offset="0.615" stop-color="#9e9e39"/><stop offset="0.647" stop-color="#9e832c"/><stop offset="0.683" stop-color="#9e6c21"/><stop offset="0.76" stop-color="#9e4b10"/><stop offset="0.896" stop-color="#9e2b00"/><stop offset="1" stop-color="#9e1c00"/></linearGradient><linearGradient id="a75" gradientUnits="userSpaceOnUse" x1="1571.2" x2="2239.4" y1="0" y2="0"><stop offset="0" stop-color="#009e68"/><stop offset="0.399" stop-color="#009e52"/><stop offset="0.507" stop-color="#4a9e49"/><stop offset="0.601" stop-color="#9d9e3f"/><stop offset="0.668" stop-color="#9e6d25"/><stop offset="0.749" stop-color="#9e4a12"/><stop offset="0.816" stop-color="#9e3709"/><stop offset="0.901" stop-color="#9e2600"/><stop offset="1" stop-color="#9e1900"/></linearGradient><linearGradient id="a76" gradientUnits="userSpaceOnUse" x1="1572.2" x2="2246.0" y1="0" y2="0"><stop offset="0" stop-color="#009e6b"/><stop offset="0.391" stop-color="#009e56"/><stop offset="0.493" stop-color="#489e4e"/><stop offset="0.587" stop-color="#9b9e44"/><stop offset="0.591" stop-color="#9e9d43"/><stop offset="0.622" stop-color="#9e8234"/><stop offset="0.658" stop-color="#9e6b27"/><stop offset="0.742" stop-color="#9e4714"/><stop offset="0.813" stop-color="#9e3409"/><stop offset="0.902" stop-color="#9e2300"/><stop offset="1" stop-color="#9e1700"/></linearGradient><linearGradient id="a77" gradientUnits="userSpaceOnUse" x1="1573.2" x2="2252.5" y1="0" y2="0"><stop offset="0" stop-color="#009e6e"/><stop offset="0.383" stop-color="#009e5a"/><stop offset="0.485" stop-color="#499e52"/><stop offset="0.577" stop-color="#9e9e48"/><stop offset="0.608" stop-color="#9e8339"/><stop offset="0.643" stop-color="#9e6b2b"/><stop offset="0.731" stop-color="#9e4516"/><stop offset="0.811" stop-color="#9e300a"/><stop offset="0.907" stop-color="#9e1f00"/><stop offset="1" stop-color="#9e1400"/></linearGradient><linearGradient id="a78" gradientUnits="userSpaceOnUse" x1="1574.3" x2="2259.1" y1="0" y2="0"><stop offset="0" stop-color="#009e71"/><stop offset="0.376" stop-color="#009e5f"/><stop offset="0.472" stop-color="#469e57"/><stop offset="0.563" stop-color="#9c9e4e"/><stop offset="0.603" stop-color="#9e7d3a"/><stop offset="0.633" stop-color="#9e692e"/><stop offset="0.721" stop-color="#9e4417"/><stop offset="0.799" stop-color="#9e2f0b"/><stop offset="0.895" stop-color="#9e1e01"/><stop offset="1" stop-color="#9e1200"/></linearGradient><linearGradient id="a79" gradientUnits="userSpaceOnUse" x1="1575.4" x2="2265.7" y1="0" y2="0"><stop offset="0" stop-color="#009e74"/><stop offset="0.368" stop-color="#009e63"/><stop offset="0.463" stop-color="#479e5c"/><stop offset="0.554" stop-color="#9e9e53"/><stop offset="0.584" stop-color="#9e8141"/><stop offset="0.619" stop-color="#9e6932"/><stop offset="0.662" stop-color="#9e5424"/><stop offset="0.71" stop-color="#9e4219"/><stop offset="0.788" stop-color="#9e2e0d"/><stop offset="0.883" stop-color="#9e1d03"/><stop offset="1" stop-color="#9e1000"/></linearGradient><linearGradient id="a80" gradientUnits="userSpaceOnUse" x1="1576.5" x2="2272.3" y1="0" y2="0"><stop offset="0" stop-color="#009e77"/><stop offset="0.362" stop-color="#009e67"/><stop offset="0.453" stop-color="#469e61"/><stop offset="0.539" stop-color="#9a9e59"/><stop offset="0.543" stop-color="#9e9d58"/><stop offset="0.573" stop-color="#9e8045"/><stop offset="0.612" stop-color="#9e6634"/><stop offset="0.703" stop-color="#9e3f1b"/><stop offset="0.78" stop-color="#9e2c0e"/><stop offset="0.875" stop-color="#9e1c03"/><stop offset="1" stop-color="#9e0e00"/></linearGradient><linearGradient id="a81" gradientUnits="userSpaceOnUse" x1="1577.6" x2="2278.9" y1="0" y2="0"><stop offset="0" stop-color="#009e7a"/><stop offset="0.355" stop-color="#009e6c"/><stop offset="0.444" stop-color="#479e66"/><stop offset="0.53" stop-color="#9d9e5e"/><stop offset="0.564" stop-color="#9e7e48"/><stop offset="0.598" stop-color="#9e6638"/><stop offset="0.641" stop-color="#9e5029"/><stop offset="0.692" stop-color="#9e3e1d"/><stop offset="0.821" stop-color="#9e2109"/><stop offset="0.919" stop-color="#9e1400"/><stop offset="1" stop-color="#9e0c00"/></linearGradient><linearGradient id="a82" gradientUnits="userSpaceOnUse" x1="1578.7" x2="2285.6" y1="0" y2="0"><stop offset="0" stop-color="#009e7e"/><stop offset="0.347" stop-color="#009e70"/><stop offset="0.436" stop-color="#489e6b"/><stop offset="0.517" stop-color="#9b9e65"/><stop offset="0.555" stop-color="#9e7b4c"/><stop offset="0.589" stop-color="#9e643b"/><stop offset="0.631" stop-color="#9e4e2c"/><stop offset="0.682" stop-color="#9e3c1f"/><stop offset="0.814" stop-color="#9e1f0a"/><stop offset="0.924" stop-color="#9e1100"/><stop offset="1" stop-color="#9e0a00"/></linearGradient><linearGradient id="a83" gradientUnits="userSpaceOnUse" x1="1579.8" x2="2292.2" y1="0" y2="0"><stop offset="0" stop-color="#009e81"/><stop offset="0.34" stop-color="#009e75"/><stop offset="0.424" stop-color="#459e71"/><stop offset="0.508" stop-color="#9e9e6a"/><stop offset="0.538" stop-color="#9e8054"/><stop offset="0.576" stop-color="#9e6440"/><stop offset="0.622" stop-color="#9e4c2e"/><stop offset="0.672" stop-color="#9e3a21"/><stop offset="0.807" stop-color="#9e1d0b"/><stop offset="0.924" stop-color="#9e0f00"/><stop offset="1" stop-color="#9e0800"/></linearGradient><linearGradient id="a84" gradientUnits="userSpaceOnUse" x1="1581.0" x2="2298.8" y1="0" y2="0"><stop offset="0" stop-color="#009e85"/><stop offset="0.333" stop-color="#009e7a"/><stop offset="0.412" stop-color="#429e76"/><stop offset="0.496" stop-color="#9d9e71"/><stop offset="0.5" stop-color="#9e9b6e"/><stop offset="0.533" stop-color="#9e7955"/><stop offset="0.571" stop-color="#9e5f40"/><stop offset="0.617" stop-color="#9e492f"/><stop offset="0.667" stop-color="#9e3722"/><stop offset="0.742" stop-color="#9e2514"/><stop offset="0.833" stop-color="#9e1708"/><stop offset="0.929" stop-color="#9e0c00"/><stop offset="1" stop-color="#9e0600"/></linearGradient><linearGradient id="a85" gradientUnits="userSpaceOnUse" x1="1582.3" x2="2305.4" y1="0" y2="0"><stop offset="0" stop-color="#009e88"/><stop offset="0.326" stop-color="#009e80"/><stop offset="0.405" stop-color="#439e7c"/><stop offset="0.488" stop-color="#9e9c76"/><stop offset="0.521" stop-color="#9e7a5b"/><stop offset="0.558" stop-color="#9e5f45"/><stop offset="0.603" stop-color="#9e4833"/><stop offset="0.657" stop-color="#9e3623"/><stop offset="0.731" stop-color="#9e2415"/><stop offset="0.826" stop-color="#9e1509"/><stop offset="0.93" stop-color="#9e0a00"/><stop offset="1" stop-color="#9e0400"/></linearGradient><linearGradient id="a86" gradientUnits="userSpaceOnUse" x1="1583.5" x2="2312.0" y1="0" y2="0"><stop offset="0" stop-color="#009e8c"/><stop offset="0.321" stop-color="#009e85"/><stop offset="0.399" stop-color="#469e82"/><stop offset="0.477" stop-color="#9e9c7c"/><stop offset="0.51" stop-color="#9e795f"/><stop offset="0.547" stop-color="#9e5e49"/><stop offset="0.593" stop-color="#9e4735"/><stop offset="0.646" stop-color="#9e3426"/><stop offset="0.72" stop-color="#9e2317"/><stop offset="0.815" stop-color="#9e140a"/><stop offset="0.934" stop-color="#9e0800"/><stop offset="1" stop-color="#9e0300"/></linearGradient><linearGradient id="a87" gradientUnits="userSpaceOnUse" x1="1584.8" x2="2318.7" y1="0" y2="0"><stop offset="0" stop-color="#009e90"/><stop offset="0.314" stop-color="#009e8b"/><stop offset="0.392" stop-color="#489e88"/><stop offset="0.465" stop-color="#9e9d85"/><stop offset="0.498" stop-color="#9e7a66"/><stop offset="0.535" stop-color="#9e5e4e"/><stop offset="0.58" stop-color="#9e4739"/><stop offset="0.637" stop-color="#9e3328"/><stop offset="0.714" stop-color="#9e2118"/><stop offset="0.808" stop-color="#9e120b"/><stop offset="0.935" stop-color="#9e0600"/><stop offset="1" stop-color="#9e0100"/></linearGradient><linearGradient id="a88" gradientUnits="userSpaceOnUse" x1="1586.0" x2="2325.3" y1="0" y2="0"><stop offset="0" stop-color="#009e94"/><stop offset="0.308" stop-color="#009e91"/><stop offset="0.377" stop-color="#409e8f"/><stop offset="0.417" stop-color="#6e9e8e"/><stop offset="0.453" stop-color="#9d9e8d"/><stop offset="0.457" stop-color="#9e9a89"/><stop offset="0.49" stop-color="#9e7769"/><stop offset="0.526" stop-color="#9e5c51"/><stop offset="0.575" stop-color="#9e433a"/><stop offset="0.632" stop-color="#9e3028"/><stop offset="0.709" stop-color="#9e1e19"/><stop offset="0.802" stop-color="#9e110c"/><stop offset="0.939" stop-color="#9e0400"/><stop offset="1" stop-color="#9e0000"/></linearGradient><linearGradient id="a89" gradientUnits="userSpaceOnUse" x1="1587.2" x2="2331.9" y1="0" y2="0"><stop offset="0" stop-color="#009e99"/><stop offset="0.301" stop-color="#009e97"/><stop offset="0.369" stop-color="#429e96"/><stop offset="0.446" stop-color="#9e9c93"/><stop offset="0.478" stop-color="#9e7770"/><stop offset="0.518" stop-color="#9e5953"/><stop offset="0.566" stop-color="#9e413c"/><stop offset="0.622" stop-color="#9e2e2a"/><stop offset="0.699" stop-color="#9e1d1a"/><stop offset="0.795" stop-color="#9e0f0d"/><stop offset="0.94" stop-color="#9e0200"/><stop offset="1" stop-color="#9e0000"/></linearGradient><linearGradient id="a90" gradientUnits="userSpaceOnUse" x1="1588.5" x2="2338.5" y1="0" y2="0"><stop offset="0" stop-color="#009e9d"/><stop offset="0.295" stop-color="#009e9d"/><stop offset="0.367" stop-color="#479e9d"/><stop offset="0.434" stop-color="#9e9e9d"/><stop offset="0.466" stop-color="#9e7877"/><stop offset="0.506" stop-color="#9e5959"/><stop offset="0.554" stop-color="#9e4140"/><stop offset="0.61" stop-color="#9e2e2d"/><stop offset="0.689" stop-color="#9e1c1c"/><stop offset="0.785" stop-color="#9e0e0e"/><stop offset="0.94" stop-color="#9e0000"/><stop offset="1" stop-color="#9e0000"/></linearGradient><linearGradient id="a91" gradientUnits="userSpaceOnUse" x1="1589.8" x2="2345.1" y1="0" y2="0"><stop offset="0" stop-color="#009b9e"/><stop offset="0.29" stop-color="#00999e"/><stop offset="0.361" stop-color="#48989e"/><stop offset="0.429" stop-color="#9e979e"/><stop offset="0.46" stop-color="#9e7379"/><stop offset="0.5" stop-color="#9e555a"/><stop offset="0.548" stop-color="#9e3e42"/><stop offset="0.607" stop-color="#9e2a2d"/><stop offset="0.687" stop-color="#9e191c"/><stop offset="0.79" stop-color="#9e0b0d"/><stop offset="0.917" stop-color="#9e0002"/><stop offset="1" stop-color="#9e0000"/></linearGradient><linearGradient id="a92" gradientUnits="userSpaceOnUse" x1="1591.2" x2="2351.7" y1="0" y2="0"><stop offset="0" stop-color="#00969e"/><stop offset="0.283" stop-color="#00929e"/><stop offset="0.358" stop-color="#4a919e"/><stop offset="0.425" stop-color="#9e8e9d"/><stop offset="0.457" stop-color="#9e6c79"/><stop offset="0.496" stop-color="#9e505b"/><stop offset="0.547" stop-color="#9e3841"/><stop offset="0.606" stop-color="#9e262d"/><stop offset="0.693" stop-color="#9e151b"/><stop offset="0.803" stop-color="#9e080c"/><stop offset="0.894" stop-color="#9e0004"/><stop offset="1" stop-color="#9e0000"/></linearGradient><linearGradient id="a93" gradientUnits="userSpaceOnUse" x1="1592.5" x2="2358.2" y1="0" y2="0"><stop offset="0" stop-color="#00929e"/><stop offset="0.277" stop-color="#008c9e"/><stop offset="0.348" stop-color="#448a9e"/><stop offset="0.422" stop-color="#9e859c"/><stop offset="0.453" stop-color="#9e6679"/><stop offset="0.492" stop-color="#9e4c5b"/><stop offset="0.543" stop-color="#9e3541"/><stop offset="0.602" stop-color="#9e242e"/><stop offset="0.691" stop-color="#9e131b"/><stop offset="0.809" stop-color="#9e050c"/><stop offset="0.871" stop-color="#9e0006"/><stop offset="1" stop-color="#9e0000"/></linearGradient><linearGradient id="a94" gradientUnits="userSpaceOnUse" x1="1593.9" x2="2364.9" y1="0" y2="0"><stop offset="0" stop-color="#008e9e"/><stop offset="0.272" stop-color="#01879e"/><stop offset="0.346" stop-color="#48849e"/><stop offset="0.416" stop-color="#9e809e"/><stop offset="0.451" stop-color="#9e5e77"/><stop offset="0.49" stop-color="#9e465a"/><stop offset="0.541" stop-color="#9e3141"/><stop offset="0.599" stop-color="#9e212e"/><stop offset="0.696" stop-color="#9e0f1a"/><stop offset="0.821" stop-color="#9e020a"/><stop offset="1" stop-color="#9e0000"/></linearGradient><linearGradient id="a95" gradientUnits="userSpaceOnUse" x1="1595.2" x2="2371.5" y1="0" y2="0"><stop offset="0" stop-color="#008a9e"/><stop offset="0.266" stop-color="#01819e"/><stop offset="0.34" stop-color="#477d9e"/><stop offset="0.413" stop-color="#9e789d"/><stop offset="0.448" stop-color="#9e5977"/><stop offset="0.486" stop-color="#9e425a"/><stop offset="0.537" stop-color="#9e2e42"/><stop offset="0.598" stop-color="#9e1d2e"/><stop offset="0.695" stop-color="#9e0d1a"/><stop offset="0.822" stop-color="#9e000a"/><stop offset="1" stop-color="#9e0000"/></linearGradient><linearGradient id="a96" gradientUnits="userSpaceOnUse" x1="1596.6" x2="2378.1" y1="0" y2="0"><stop offset="0" stop-color="#00859e"/><stop offset="0.261" stop-color="#017c9e"/><stop offset="0.333" stop-color="#45789e"/><stop offset="0.41" stop-color="#9e709b"/><stop offset="0.444" stop-color="#9e5376"/><stop offset="0.483" stop-color="#9e3d5b"/><stop offset="0.533" stop-color="#9e2a42"/><stop offset="0.594" stop-color="#9e1b2e"/><stop offset="0.686" stop-color="#9e0c1b"/><stop offset="0.801" stop-color="#9e000d"/><stop offset="1" stop-color="#9e0000"/></linearGradient><linearGradient id="a97" gradientUnits="userSpaceOnUse" x1="1598.0" x2="2384.7" y1="0" y2="0"><stop offset="0" stop-color="#00819e"/><stop offset="0.255" stop-color="#01779e"/><stop offset="0.327" stop-color="#44729e"/><stop offset="0.403" stop-color="#9d6c9e"/><stop offset="0.407" stop-color="#9e699a"/><stop offset="0.441" stop-color="#9e4e76"/><stop offset="0.483" stop-color="#9e3859"/><stop offset="0.532" stop-color="#9e2642"/><stop offset="0.593" stop-color="#9e182e"/><stop offset="0.677" stop-color="#9e0b1d"/><stop offset="0.779" stop-color="#9e000f"/><stop offset="1" stop-color="#9e0000"/></linearGradient><linearGradient id="a98" gradientUnits="userSpaceOnUse" x1="1599.5" x2="2391.2" y1="0" y2="0"><stop offset="0" stop-color="#007d9e"/><stop offset="0.25" stop-color="#01729e"/><stop offset="0.326" stop-color="#486c9e"/><stop offset="0.402" stop-color="#9e649c"/><stop offset="0.436" stop-color="#9e4a78"/><stop offset="0.477" stop-color="#9e355a"/><stop offset="0.527" stop-color="#9e2443"/><stop offset="0.591" stop-color="#9e152e"/><stop offset="0.758" stop-color="#9e0011"/><stop offset="1" stop-color="#9e0000"/></linearGradient><linearGradient id="a99" gradientUnits="userSpaceOnUse" x1="1600.9" x2="2397.9" y1="0" y2="0"><stop offset="0" stop-color="#007a9e"/><stop offset="0.241" stop-color="#006d9e"/><stop offset="0.312" stop-color="#3f689e"/><stop offset="0.353" stop-color="#6b649e"/><stop offset="0.395" stop-color="#9d5f9e"/><stop offset="0.398" stop-color="#9e5d9a"/><stop offset="0.432" stop-color="#9e4577"/><stop offset="0.474" stop-color="#9e315a"/><stop offset="0.526" stop-color="#9e2042"/><stop offset="0.586" stop-color="#9e132f"/><stop offset="0.737" stop-color="#9e0014"/><stop offset="0.883" stop-color="#9e0006"/><stop offset="1" stop-color="#9e0000"/></linearGradient><linearGradient id="a100" gradientUnits="userSpaceOnUse" x1="1602.4" x2="2404.5" y1="0" y2="0"><stop offset="0" stop-color="#00769e"/><stop offset="0.235" stop-color="#00689e"/><stop offset="0.313" stop-color="#45629e"/><stop offset="0.392" stop-color="#9e599e"/><stop offset="0.425" stop-color="#9e427a"/><stop offset="0.466" stop-color="#9e2e5d"/><stop offset="0.519" stop-color="#9e1e44"/><stop offset="0.582" stop-color="#9e1130"/><stop offset="0.716" stop-color="#9e0016"/><stop offset="0.866" stop-color="#9e0007"/><stop offset="1" stop-color="#9e0000"/></linearGradient><linearGradient id="a101" gradientUnits="userSpaceOnUse" x1="1603.9" x2="2407.8" y1="0" y2="0"><stop offset="0" stop-color="#00729e"/><stop offset="0.231" stop-color="#00649e"/><stop offset="0.31" stop-color="#455d9e"/><stop offset="0.392" stop-color="#9e529b"/><stop offset="0.425" stop-color="#9e3c79"/><stop offset="0.47" stop-color="#9e295a"/><stop offset="0.522" stop-color="#9e1a42"/><stop offset="0.582" stop-color="#9e0e30"/><stop offset="0.698" stop-color="#9e0019"/><stop offset="0.847" stop-color="#9e0009"/><stop offset="1" stop-color="#9e0000"/></linearGradient><linearGradient id="a102" gradientUnits="userSpaceOnUse" x1="1605.4" x2="2402.1" y1="0" y2="0"><stop offset="0" stop-color="#006e9e"/><stop offset="0.229" stop-color="#00609e"/><stop offset="0.312" stop-color="#47589e"/><stop offset="0.391" stop-color="#9e4e9e"/><stop offset="0.429" stop-color="#9e3879"/><stop offset="0.47" stop-color="#9e275c"/><stop offset="0.523" stop-color="#9e1844"/><stop offset="0.583" stop-color="#9e0d31"/><stop offset="0.684" stop-color="#9e001d"/><stop offset="0.752" stop-color="#9e0014"/><stop offset="1" stop-color="#9e0000"/></linearGradient><linearGradient id="a103" gradientUnits="userSpaceOnUse" x1="1606.9" x2="2387.9" y1="0" y2="0"><stop offset="0" stop-color="#006b9e"/><stop offset="0.23" stop-color="#005b9e"/><stop offset="0.318" stop-color="#49539e"/><stop offset="0.398" stop-color="#9e499d"/><stop offset="0.433" stop-color="#9e357b"/><stop offset="0.475" stop-color="#9e245f"/><stop offset="0.529" stop-color="#9e1646"/><stop offset="0.59" stop-color="#9e0b33"/><stop offset="0.682" stop-color="#9e0020"/><stop offset="0.755" stop-color="#9e0016"/><stop offset="1" stop-color="#9e0001"/></linearGradient><linearGradient id="a104" gradientUnits="userSpaceOnUse" x1="1608.5" x2="2373.7" y1="0" y2="0"><stop offset="0" stop-color="#00679e"/><stop offset="0.23" stop-color="#00579e"/><stop offset="0.316" stop-color="#454f9e"/><stop offset="0.406" stop-color="#9e439c"/><stop offset="0.441" stop-color="#9e307b"/><stop offset="0.484" stop-color="#9e215f"/><stop offset="0.535" stop-color="#9e1448"/><stop offset="0.598" stop-color="#9e0a34"/><stop offset="0.68" stop-color="#9e0023"/><stop offset="0.762" stop-color="#9e0017"/><stop offset="1" stop-color="#9e0003"/></linearGradient><linearGradient id="a105" gradientUnits="userSpaceOnUse" x1="1610.2" x2="2359.6" y1="0" y2="0"><stop offset="0" stop-color="#00649e"/><stop offset="0.232" stop-color="#01539e"/><stop offset="0.324" stop-color="#484a9e"/><stop offset="0.412" stop-color="#9e3e9d"/><stop offset="0.448" stop-color="#9e2d7c"/><stop offset="0.492" stop-color="#9e1e60"/><stop offset="0.544" stop-color="#9e1249"/><stop offset="0.604" stop-color="#9e0836"/><stop offset="0.676" stop-color="#9e0027"/><stop offset="0.768" stop-color="#9e0019"/><stop offset="1" stop-color="#9e0005"/></linearGradient><linearGradient id="a106" gradientUnits="userSpaceOnUse" x1="1611.8" x2="2345.4" y1="0" y2="0"><stop offset="0" stop-color="#00609e"/><stop offset="0.233" stop-color="#014f9e"/><stop offset="0.327" stop-color="#47469e"/><stop offset="0.42" stop-color="#9e399c"/><stop offset="0.457" stop-color="#9e297b"/><stop offset="0.498" stop-color="#9e1c62"/><stop offset="0.551" stop-color="#9e104b"/><stop offset="0.612" stop-color="#9e0738"/><stop offset="0.673" stop-color="#9e002a"/><stop offset="0.771" stop-color="#9e001b"/><stop offset="1" stop-color="#9e0006"/></linearGradient><linearGradient id="a107" gradientUnits="userSpaceOnUse" x1="1613.5" x2="2331.2" y1="0" y2="0"><stop offset="0" stop-color="#005d9e"/><stop offset="0.233" stop-color="#014c9e"/><stop offset="0.333" stop-color="#4a419e"/><stop offset="0.425" stop-color="#9e369e"/><stop offset="0.463" stop-color="#9e267e"/><stop offset="0.504" stop-color="#9e1a64"/><stop offset="0.554" stop-color="#9e0f4e"/><stop offset="0.617" stop-color="#9e063b"/><stop offset="0.667" stop-color="#9e002f"/><stop offset="0.775" stop-color="#9e001d"/><stop offset="1" stop-color="#9e0008"/></linearGradient><linearGradient id="a108" gradientUnits="userSpaceOnUse" x1="1615.1" x2="2317.1" y1="0" y2="0"><stop offset="0" stop-color="#00599e"/><stop offset="0.231" stop-color="#00489e"/><stop offset="0.329" stop-color="#433e9e"/><stop offset="0.436" stop-color="#9e309b"/><stop offset="0.474" stop-color="#9e217c"/><stop offset="0.517" stop-color="#9e1663"/><stop offset="0.568" stop-color="#9e0c4d"/><stop offset="0.628" stop-color="#9e043b"/><stop offset="0.782" stop-color="#9e001f"/><stop offset="1" stop-color="#9e000a"/></linearGradient><linearGradient id="a109" gradientUnits="userSpaceOnUse" x1="1616.8" x2="2302.9" y1="0" y2="0"><stop offset="0" stop-color="#00569e"/><stop offset="0.231" stop-color="#00459e"/><stop offset="0.341" stop-color="#493a9e"/><stop offset="0.441" stop-color="#9e2d9e"/><stop offset="0.476" stop-color="#9e2081"/><stop offset="0.52" stop-color="#9e1567"/><stop offset="0.572" stop-color="#9e0b51"/><stop offset="0.633" stop-color="#9e033e"/><stop offset="0.786" stop-color="#9e0021"/><stop offset="1" stop-color="#9e000c"/></linearGradient><linearGradient id="a110" gradientUnits="userSpaceOnUse" x1="1618.6" x2="2288.7" y1="0" y2="0"><stop offset="0" stop-color="#00539e"/><stop offset="0.232" stop-color="#00429e"/><stop offset="0.344" stop-color="#48369e"/><stop offset="0.451" stop-color="#9e289d"/><stop offset="0.487" stop-color="#9e1c81"/><stop offset="0.531" stop-color="#9e1267"/><stop offset="0.585" stop-color="#9e0851"/><stop offset="0.643" stop-color="#9e0140"/><stop offset="0.795" stop-color="#9e0023"/><stop offset="1" stop-color="#9e000e"/></linearGradient><linearGradient id="a111" gradientUnits="userSpaceOnUse" x1="1620.4" x2="2274.6" y1="0" y2="0"><stop offset="0" stop-color="#00509e"/><stop offset="0.233" stop-color="#003e9e"/><stop offset="0.347" stop-color="#47339e"/><stop offset="0.461" stop-color="#9e239b"/><stop offset="0.498" stop-color="#9e1880"/><stop offset="0.543" stop-color="#9e0f67"/><stop offset="0.653" stop-color="#9e0041"/><stop offset="0.799" stop-color="#9e0025"/><stop offset="1" stop-color="#9e0011"/></linearGradient><linearGradient id="a112" gradientUnits="userSpaceOnUse" x1="1622.2" x2="2260.4" y1="0" y2="0"><stop offset="0" stop-color="#004c9e"/><stop offset="0.235" stop-color="#013b9e"/><stop offset="0.352" stop-color="#472f9e"/><stop offset="0.469" stop-color="#9e1f9c"/><stop offset="0.507" stop-color="#9e1581"/><stop offset="0.549" stop-color="#9e0d6a"/><stop offset="0.657" stop-color="#9e0044"/><stop offset="0.803" stop-color="#9e0028"/><stop offset="1" stop-color="#9e0013"/></linearGradient><linearGradient id="a113" gradientUnits="userSpaceOnUse" x1="1624.0" x2="2246.2" y1="0" y2="0"><stop offset="0" stop-color="#00499e"/><stop offset="0.236" stop-color="#02389e"/><stop offset="0.361" stop-color="#4a2b9e"/><stop offset="0.476" stop-color="#9e1c9e"/><stop offset="0.514" stop-color="#9e1383"/><stop offset="0.558" stop-color="#9e0b6c"/><stop offset="0.663" stop-color="#9e0047"/><stop offset="0.808" stop-color="#9e002b"/><stop offset="1" stop-color="#9e0015"/></linearGradient><linearGradient id="a114" gradientUnits="userSpaceOnUse" x1="1625.9" x2="2232.1" y1="0" y2="0"><stop offset="0" stop-color="#00469e"/><stop offset="0.232" stop-color="#00359e"/><stop offset="0.365" stop-color="#49289e"/><stop offset="0.488" stop-color="#9e189d"/><stop offset="0.522" stop-color="#9e1086"/><stop offset="0.567" stop-color="#9e086e"/><stop offset="0.631" stop-color="#9e0056"/><stop offset="0.675" stop-color="#9e0049"/><stop offset="0.813" stop-color="#9e002d"/><stop offset="1" stop-color="#9e0018"/></linearGradient><linearGradient id="a115" gradientUnits="userSpaceOnUse" x1="1627.9" x2="2217.9" y1="0" y2="0"><stop offset="0" stop-color="#00439e"/><stop offset="0.234" stop-color="#01329e"/><stop offset="0.371" stop-color="#49259e"/><stop offset="0.497" stop-color="#9e159e"/><stop offset="0.533" stop-color="#9e0d86"/><stop offset="0.579" stop-color="#9e066f"/><stop offset="0.624" stop-color="#9e005d"/><stop offset="0.685" stop-color="#9e004b"/><stop offset="0.822" stop-color="#9e0030"/><stop offset="1" stop-color="#9e001b"/></linearGradient><linearGradient id="a116" gradientUnits="userSpaceOnUse" x1="1629.9" x2="2203.8" y1="0" y2="0"><stop offset="0" stop-color="#00409e"/><stop offset="0.234" stop-color="#012f9e"/><stop offset="0.375" stop-color="#48229e"/><stop offset="0.51" stop-color="#9e119c"/><stop offset="0.589" stop-color="#9e0471"/><stop offset="0.693" stop-color="#9e004e"/><stop offset="0.828" stop-color="#9e0032"/><stop offset="1" stop-color="#9e001e"/></linearGradient><linearGradient id="a117" gradientUnits="userSpaceOnUse" x1="1631.9" x2="2189.6" y1="0" y2="0"><stop offset="0" stop-color="#003d9e"/><stop offset="0.231" stop-color="#002d9e"/><stop offset="0.382" stop-color="#491e9e"/><stop offset="0.522" stop-color="#9e0d9d"/><stop offset="0.602" stop-color="#9e0172"/><stop offset="0.704" stop-color="#9e0050"/><stop offset="0.833" stop-color="#9e0036"/><stop offset="1" stop-color="#9e0021"/></linearGradient><linearGradient id="a118" gradientUnits="userSpaceOnUse" x1="1633.9" x2="2175.4" y1="0" y2="0"><stop offset="0" stop-color="#003a9e"/><stop offset="0.232" stop-color="#002a9e"/><stop offset="0.381" stop-color="#451c9e"/><stop offset="0.536" stop-color="#9e0a9c"/><stop offset="0.613" stop-color="#9e0074"/><stop offset="0.713" stop-color="#9e0053"/><stop offset="0.84" stop-color="#9e0039"/><stop offset="1" stop-color="#9e0024"/></linearGradient><linearGradient id="a119" gradientUnits="userSpaceOnUse" x1="1636.1" x2="2161.3" y1="0" y2="0"><stop offset="0" stop-color="#00389e"/><stop offset="0.233" stop-color="#01279e"/><stop offset="0.398" stop-color="#4a189e"/><stop offset="0.545" stop-color="#9e079e"/><stop offset="0.625" stop-color="#9e0075"/><stop offset="0.722" stop-color="#9e0056"/><stop offset="0.847" stop-color="#9e003c"/><stop offset="1" stop-color="#9e0027"/></linearGradient><linearGradient id="a120" gradientUnits="userSpaceOnUse" x1="1638.4" x2="2147.1" y1="0" y2="0"><stop offset="0" stop-color="#00359e"/><stop offset="0.235" stop-color="#02249e"/><stop offset="0.406" stop-color="#4b159e"/><stop offset="0.559" stop-color="#9e049e"/><stop offset="0.635" stop-color="#9e0078"/><stop offset="0.735" stop-color="#9e0058"/><stop offset="0.853" stop-color="#9e003f"/><stop offset="1" stop-color="#9e002b"/></linearGradient><linearGradient id="a121" gradientUnits="userSpaceOnUse" x1="1640.6" x2="2132.9" y1="0" y2="0"><stop offset="0" stop-color="#00329e"/><stop offset="0.23" stop-color="#00229e"/><stop offset="0.406" stop-color="#48139e"/><stop offset="0.576" stop-color="#9e009d"/><stop offset="0.655" stop-color="#9e0078"/><stop offset="0.745" stop-color="#9e005b"/><stop offset="0.861" stop-color="#9e0043"/><stop offset="1" stop-color="#9e002f"/></linearGradient><linearGradient id="a122" gradientUnits="userSpaceOnUse" x1="1642.8" x2="2118.8" y1="0" y2="0"><stop offset="0" stop-color="#002f9e"/><stop offset="0.233" stop-color="#01209e"/><stop offset="0.415" stop-color="#48109e"/><stop offset="0.591" stop-color="#9e009d"/><stop offset="0.667" stop-color="#9e007b"/><stop offset="0.755" stop-color="#9e005f"/><stop offset="0.868" stop-color="#9e0047"/><stop offset="1" stop-color="#9e0033"/></linearGradient><linearGradient id="a123" gradientUnits="userSpaceOnUse" x1="1645.2" x2="2104.6" y1="0" y2="0"><stop offset="0" stop-color="#002c9e"/><stop offset="0.234" stop-color="#021d9e"/><stop offset="0.429" stop-color="#4a0d9e"/><stop offset="0.558" stop-color="#86009e"/><stop offset="0.604" stop-color="#9d009e"/><stop offset="0.682" stop-color="#9e007d"/><stop offset="0.773" stop-color="#9e0061"/><stop offset="0.877" stop-color="#9e004a"/><stop offset="1" stop-color="#9e0038"/></linearGradient><linearGradient id="a124" gradientUnits="userSpaceOnUse" x1="1647.6" x2="2090.4" y1="0" y2="0"><stop offset="0" stop-color="#002a9e"/><stop offset="0.23" stop-color="#011b9e"/><stop offset="0.439" stop-color="#4b0a9e"/><stop offset="0.547" stop-color="#79009e"/><stop offset="0.622" stop-color="#9d009e"/><stop offset="0.703" stop-color="#9e007d"/><stop offset="0.784" stop-color="#9e0065"/><stop offset="0.885" stop-color="#9e004e"/><stop offset="1" stop-color="#9e003d"/></linearGradient><linearGradient id="a125" gradientUnits="userSpaceOnUse" x1="1649.9" x2="2076.3" y1="0" y2="0"><stop offset="0" stop-color="#00279e"/><stop offset="0.231" stop-color="#01199e"/><stop offset="0.448" stop-color="#4a089e"/><stop offset="0.538" stop-color="#6f009e"/><stop offset="0.643" stop-color="#9e009e"/><stop offset="0.713" stop-color="#9e0081"/><stop offset="0.797" stop-color="#9e0068"/><stop offset="1" stop-color="#9e0042"/></linearGradient><linearGradient id="a126" gradientUnits="userSpaceOnUse" x1="1652.3" x2="2062.1" y1="0" y2="0"><stop offset="0" stop-color="#00249e"/><stop offset="0.226" stop-color="#00179e"/><stop offset="0.46" stop-color="#4b059e"/><stop offset="0.526" stop-color="#64009e"/><stop offset="0.664" stop-color="#9e009e"/><stop offset="0.73" stop-color="#9e0084"/><stop offset="0.81" stop-color="#9e006c"/><stop offset="1" stop-color="#9e0047"/></linearGradient><linearGradient id="a127" gradientUnits="userSpaceOnUse" x1="1654.8" x2="2047.9" y1="0" y2="0"><stop offset="0" stop-color="#00229e"/><stop offset="0.227" stop-color="#01149e"/><stop offset="0.47" stop-color="#4a039e"/><stop offset="0.682" stop-color="#9c009e"/><stop offset="0.826" stop-color="#9e0070"/><stop offset="1" stop-color="#9e004d"/></linearGradient><linearGradient id="a128" gradientUnits="userSpaceOnUse" x1="1657.2" x2="2033.8" y1="0" y2="0"><stop offset="0" stop-color="#001f9e"/><stop offset="0.222" stop-color="#00139e"/><stop offset="0.476" stop-color="#49019e"/><stop offset="0.706" stop-color="#9c009e"/><stop offset="0.841" stop-color="#9e0074"/><stop offset="1" stop-color="#9e0054"/></linearGradient><linearGradient id="a129" gradientUnits="userSpaceOnUse" x1="1659.8" x2="2019.6" y1="0" y2="0"><stop offset="0" stop-color="#001c9e"/><stop offset="0.225" stop-color="#01109e"/><stop offset="0.492" stop-color="#49009e"/><stop offset="0.733" stop-color="#9c009e"/><stop offset="0.858" stop-color="#9e0078"/><stop offset="1" stop-color="#9e005b"/></linearGradient><linearGradient id="a130" gradientUnits="userSpaceOnUse" x1="1662.4" x2="2005.4" y1="0" y2="0"><stop offset="0" stop-color="#001a9e"/><stop offset="0.226" stop-color="#020e9e"/><stop offset="0.513" stop-color="#4b009e"/><stop offset="0.765" stop-color="#9d009e"/><stop offset="0.878" stop-color="#9e007d"/><stop offset="1" stop-color="#9e0063"/></linearGradient><linearGradient id="a131" gradientUnits="userSpaceOnUse" x1="1665.0" x2="1991.3" y1="0" y2="0"><stop offset="0" stop-color="#00179e"/><stop offset="0.22" stop-color="#010c9e"/><stop offset="0.431" stop-color="#32009e"/><stop offset="0.523" stop-color="#4a009e"/><stop offset="0.798" stop-color="#9d009e"/><stop offset="0.899" stop-color="#9e0081"/><stop offset="1" stop-color="#9e006b"/></linearGradient><linearGradient id="a132" gradientUnits="userSpaceOnUse" x1="1667.8" x2="1977.1" y1="0" y2="0"><stop offset="0" stop-color="#00159e"/><stop offset="0.221" stop-color="#010a9e"/><stop offset="0.413" stop-color="#2b009e"/><stop offset="0.548" stop-color="#4c009e"/><stop offset="0.837" stop-color="#9e009e"/><stop offset="1" stop-color="#9e0074"/></linearGradient><linearGradient id="a133" gradientUnits="userSpaceOnUse" x1="1670.6" x2="1963.0" y1="0" y2="0"><stop offset="0" stop-color="#00129e"/><stop offset="0.214" stop-color="#01099e"/><stop offset="0.388" stop-color="#23009e"/><stop offset="0.561" stop-color="#4a009e"/><stop offset="0.878" stop-color="#9e009e"/><stop offset="1" stop-color="#9e007f"/></linearGradient><linearGradient id="a134" gradientUnits="userSpaceOnUse" x1="1673.5" x2="1948.8" y1="0" y2="0"><stop offset="0" stop-color="#00109e"/><stop offset="0.207" stop-color="#00079e"/><stop offset="0.359" stop-color="#1c009e"/><stop offset="0.576" stop-color="#48009e"/><stop offset="0.913" stop-color="#9c009e"/><stop offset="1" stop-color="#9e008a"/></linearGradient><linearGradient id="a135" gradientUnits="userSpaceOnUse" x1="1676.5" x2="1934.6" y1="0" y2="0"><stop offset="0" stop-color="#000d9e"/><stop offset="0.207" stop-color="#01059e"/><stop offset="0.322" stop-color="#14009e"/><stop offset="0.609" stop-color="#4a009e"/><stop offset="0.966" stop-color="#9c009e"/><stop offset="1" stop-color="#9e0097"/></linearGradient><linearGradient id="a136" gradientUnits="userSpaceOnUse" x1="1679.6" x2="1920.5" y1="0" y2="0"><stop offset="0" stop-color="#000b9e"/><stop offset="0.185" stop-color="#00049e"/><stop offset="0.222" stop-color="#04029e"/><stop offset="0.63" stop-color="#49009e"/><stop offset="1" stop-color="#97009e"/></linearGradient><linearGradient id="a137" gradientUnits="userSpaceOnUse" x1="1683.0" x2="1906.3" y1="0" y2="0"><stop offset="0" stop-color="#00089e"/><stop offset="0.2" stop-color="#02019e"/><stop offset="0.627" stop-color="#43009e"/><stop offset="1" stop-color="#89009e"/></linearGradient><linearGradient id="a138" gradientUnits="userSpaceOnUse" x1="1686.5" x2="1892.1" y1="0" y2="0"><stop offset="0" stop-color="#00069e"/><stop offset="0.188" stop-color="#01009e"/><stop offset="0.609" stop-color="#3b009e"/><stop offset="1" stop-color="#7c009e"/></linearGradient><linearGradient id="a139" gradientUnits="userSpaceOnUse" x1="1690.1" x2="1878.0" y1="0" y2="0"><stop offset="0" stop-color="#00039e"/><stop offset="0.175" stop-color="#01009e"/><stop offset="0.603" stop-color="#36009e"/><stop offset="1" stop-color="#70009e"/></linearGradient><linearGradient id="a140" gradientUnits="userSpaceOnUse" x1="1693.9" x2="1863.8" y1="0" y2="0"><stop offset="0" stop-color="#00019e"/><stop offset="0.158" stop-color="#01009e"/><stop offset="0.596" stop-color="#31009e"/><stop offset="1" stop-color="#65009e"/></linearGradient><linearGradient id="a141" gradientUnits="userSpaceOnUse" x1="1698.1" x2="1849.6" y1="0" y2="0"><stop offset="0" stop-color="#00009e"/><stop offset="0.137" stop-color="#01009e"/><stop offset="0.588" stop-color="#2c009e"/><stop offset="1" stop-color="#5a009e"/></linearGradient><linearGradient id="a142" gradientUnits="userSpaceOnUse" x1="1702.6" x2="1835.5" y1="0" y2="0"><stop offset="0" stop-color="#00009e"/><stop offset="0.089" stop-color="#00009e"/><stop offset="0.178" stop-color="#06009e"/><stop offset="1" stop-color="#4f009e"/></linearGradient><linearGradient id="a143" gradientUnits="userSpaceOnUse" x1="1707.7" x2="1821.3" y1="0" y2="0"><stop offset="0" stop-color="#00009e"/><stop offset="0.289" stop-color="#10009e"/><stop offset="1" stop-color="#45009e"/></linearGradient><linearGradient id="a144" gradientUnits="userSpaceOnUse" x1="1713.6" x2="1807.1" y1="0" y2="0"><stop offset="0" stop-color="#01009e"/><stop offset="1" stop-color="#3c009e"/></linearGradient><linearGradient id="a145" gradientUnits="userSpaceOnUse" x1="1720.2" x2="1793.0" y1="0" y2="0"><stop offset="0" stop-color="#06009e"/><stop offset="1" stop-color="#33009e"/></linearGradient><linearGradient id="a146" gradientUnits="userSpaceOnUse" x1="1727.5" x2="1778.8" y1="0" y2="0"><stop offset="0" stop-color="#0b009e"/><stop offset="1" stop-color="#2a009e"/></linearGradient><linearGradient id="a147" gradientUnits="userSpaceOnUse" x1="1735.1" x2="1764.6" y1="0" y2="0"><stop offset="0" stop-color="#10009e"/><stop offset="1" stop-color="#22009e"/></linearGradient><linearGradient id="a148" gradientUnits="userSpaceOnUse" x1="1742.5" x2="1750.5" y1="0" y2="0"><stop offset="0" stop-color="#16009e"/><stop offset="1" stop-color="#1a009e"/></linearGradient>
<linearGradient id="b1" gradientUnits="userSpaceOnUse" x1="1894.8" x2="1905.4" y1="0" y2="0"><stop offset="0" stop-color="#00ff01"/><stop offset="1" stop-color="#07ff00"/></linearGradient><linearGradient id="b2" gradientUnits="userSpaceOnUse" x1="1893.7" x2="1910.4" y1="0" y2="0"><stop offset="0" stop-color="#00ff03"/><stop offset="1" stop-color="#0dff00"/></linearGradient><linearGradient id="b3" gradientUnits="userSpaceOnUse" x1="1892.6" x2="1915.3" y1="0" y2="0"><stop offset="0" stop-color="#00ff05"/><stop offset="0.25" stop-color="#02ff03"/><stop offset="1" stop-color="#13ff00"/></linearGradient><linearGradient id="b4" gradientUnits="userSpaceOnUse" x1="1891.5" x2="1920.3" y1="0" y2="0"><stop offset="0" stop-color="#00ff06"/><stop offset="0.2" stop-color="#02ff05"/><stop offset="1" stop-color="#1aff00"/></linearGradient><linearGradient id="b5" gradientUnits="userSpaceOnUse" x1="1890.4" x2="1925.3" y1="0" y2="0"><stop offset="0" stop-color="#00ff08"/><stop offset="0.167" stop-color="#02ff06"/><stop offset="1" stop-color="#20ff00"/></linearGradient><linearGradient id="b6" gradientUnits="userSpaceOnUse" x1="1889.3" x2="1930.3" y1="0" y2="0"><stop offset="0" stop-color="#00ff09"/><stop offset="0.143" stop-color="#02ff08"/><stop offset="1" stop-color="#27ff00"/></linearGradient><linearGradient id="b7" gradientUnits="userSpaceOnUse" x1="1888.2" x2="1935.2" y1="0" y2="0"><stop offset="0" stop-color="#00ff0b"/><stop offset="0.125" stop-color="#02ff0a"/><stop offset="1" stop-color="#2eff00"/></linearGradient><linearGradient id="b8" gradientUnits="userSpaceOnUse" x1="1887.1" x2="1940.2" y1="0" y2="0"><stop offset="0" stop-color="#00ff0d"/><stop offset="0.111" stop-color="#02ff0b"/><stop offset="1" stop-color="#35ff00"/></linearGradient><linearGradient id="b9" gradientUnits="userSpaceOnUse" x1="1886.0" x2="1945.2" y1="0" y2="0"><stop offset="0" stop-color="#00ff0f"/><stop offset="0.1" stop-color="#02ff0d"/><stop offset="1" stop-color="#3dff00"/></linearGradient><linearGradient id="b10" gradientUnits="userSpaceOnUse" x1="1884.9" x2="1950.1" y1="0" y2="0"><stop offset="0" stop-color="#00ff10"/><stop offset="0.136" stop-color="#06ff0e"/><stop offset="1" stop-color="#4f0"/></linearGradient><linearGradient id="b11" gradientUnits="userSpaceOnUse" x1="1883.8" x2="1955.1" y1="0" y2="0"><stop offset="0" stop-color="#00ff12"/><stop offset="0.208" stop-color="#0cff0e"/><stop offset="1" stop-color="#4cff00"/></linearGradient><linearGradient id="b12" gradientUnits="userSpaceOnUse" x1="1882.7" x2="1960.1" y1="0" y2="0"><stop offset="0" stop-color="#00ff14"/><stop offset="0.077" stop-color="#03ff12"/><stop offset="0.269" stop-color="#12ff0f"/><stop offset="1" stop-color="#54ff00"/></linearGradient><linearGradient id="b13" gradientUnits="userSpaceOnUse" x1="1881.6" x2="1965.0" y1="0" y2="0"><stop offset="0" stop-color="#00ff16"/><stop offset="0.071" stop-color="#03ff14"/><stop offset="0.321" stop-color="#19ff0f"/><stop offset="1" stop-color="#5cff00"/></linearGradient><linearGradient id="b14" gradientUnits="userSpaceOnUse" x1="1880.5" x2="1970.0" y1="0" y2="0"><stop offset="0" stop-color="#00ff18"/><stop offset="0.067" stop-color="#03ff16"/><stop offset="0.333" stop-color="#1dff10"/><stop offset="1" stop-color="#65ff00"/></linearGradient><linearGradient id="b15" gradientUnits="userSpaceOnUse" x1="1879.5" x2="1975.0" y1="0" y2="0"><stop offset="0" stop-color="#00ff1a"/><stop offset="0.062" stop-color="#03ff18"/><stop offset="0.375" stop-color="#24ff10"/><stop offset="1" stop-color="#6dff00"/></linearGradient><linearGradient id="b16" gradientUnits="userSpaceOnUse" x1="1878.4" x2="1979.9" y1="0" y2="0"><stop offset="0" stop-color="#00ff1b"/><stop offset="0.059" stop-color="#03ff1a"/><stop offset="0.382" stop-color="#27ff11"/><stop offset="1" stop-color="#76ff00"/></linearGradient><linearGradient id="b17" gradientUnits="userSpaceOnUse" x1="1877.3" x2="1984.9" y1="0" y2="0"><stop offset="0" stop-color="#00ff1d"/><stop offset="0.056" stop-color="#03ff1c"/><stop offset="0.417" stop-color="#2fff11"/><stop offset="1" stop-color="#80ff00"/></linearGradient><linearGradient id="b18" gradientUnits="userSpaceOnUse" x1="1876.2" x2="1989.9" y1="0" y2="0"><stop offset="0" stop-color="#00ff1f"/><stop offset="0.053" stop-color="#03ff1e"/><stop offset="0.421" stop-color="#33ff13"/><stop offset="1" stop-color="#89ff00"/></linearGradient><linearGradient id="b19" gradientUnits="userSpaceOnUse" x1="1875.1" x2="1994.9" y1="0" y2="0"><stop offset="0" stop-color="#00ff21"/><stop offset="0.05" stop-color="#03ff20"/><stop offset="0.425" stop-color="#37ff14"/><stop offset="1" stop-color="#93ff00"/></linearGradient><linearGradient id="b20" gradientUnits="userSpaceOnUse" x1="1874.0" x2="1999.8" y1="0" y2="0"><stop offset="0" stop-color="#00ff23"/><stop offset="0.048" stop-color="#03ff22"/><stop offset="0.452" stop-color="#3fff14"/><stop offset="1" stop-color="#9dff00"/></linearGradient><linearGradient id="b21" gradientUnits="userSpaceOnUse" x1="1872.9" x2="2004.8" y1="0" y2="0"><stop offset="0" stop-color="#00ff25"/><stop offset="0.045" stop-color="#03ff24"/><stop offset="0.455" stop-color="#43ff15"/><stop offset="1" stop-color="#a8ff00"/></linearGradient><linearGradient id="b22" gradientUnits="userSpaceOnUse" x1="1871.8" x2="2009.8" y1="0" y2="0"><stop offset="0" stop-color="#00ff28"/><stop offset="0.065" stop-color="#06ff25"/><stop offset="0.457" stop-color="#48ff16"/><stop offset="0.739" stop-color="#7dff0a"/><stop offset="1" stop-color="#b3ff00"/></linearGradient><linearGradient id="b23" gradientUnits="userSpaceOnUse" x1="1870.7" x2="2014.7" y1="0" y2="0"><stop offset="0" stop-color="#00ff2a"/><stop offset="0.02" stop-color="#00ff29"/><stop offset="0.102" stop-color="#0dff26"/><stop offset="0.469" stop-color="#4eff17"/><stop offset="0.735" stop-color="#83ff0b"/><stop offset="1" stop-color="#beff00"/></linearGradient><linearGradient id="b24" gradientUnits="userSpaceOnUse" x1="1869.6" x2="2019.7" y1="0" y2="0"><stop offset="0" stop-color="#00ff2c"/><stop offset="0.039" stop-color="#03ff2a"/><stop offset="0.118" stop-color="#10ff27"/><stop offset="0.471" stop-color="#53ff18"/><stop offset="0.745" stop-color="#8dff0b"/><stop offset="1" stop-color="#caff00"/></linearGradient><linearGradient id="b25" gradientUnits="userSpaceOnUse" x1="1868.5" x2="2024.7" y1="0" y2="0"><stop offset="0" stop-color="#00ff2e"/><stop offset="0.038" stop-color="#03ff2c"/><stop offset="0.132" stop-color="#14ff29"/><stop offset="0.491" stop-color="#5cff19"/><stop offset="0.755" stop-color="#98ff0c"/><stop offset="1" stop-color="#d6ff00"/></linearGradient><linearGradient id="b26" gradientUnits="userSpaceOnUse" x1="1867.4" x2="2029.6" y1="0" y2="0"><stop offset="0" stop-color="#00ff30"/><stop offset="0.036" stop-color="#03ff2f"/><stop offset="0.145" stop-color="#18ff2a"/><stop offset="0.491" stop-color="#61ff1a"/><stop offset="0.745" stop-color="#9eff0d"/><stop offset="1" stop-color="#e3ff00"/></linearGradient><linearGradient id="b27" gradientUnits="userSpaceOnUse" x1="1866.3" x2="2034.6" y1="0" y2="0"><stop offset="0" stop-color="#00ff32"/><stop offset="0.035" stop-color="#03ff31"/><stop offset="0.158" stop-color="#1cff2c"/><stop offset="0.491" stop-color="#66ff1c"/><stop offset="0.754" stop-color="#a9ff0d"/><stop offset="1" stop-color="#f0ff00"/></linearGradient><linearGradient id="b28" gradientUnits="userSpaceOnUse" x1="1865.2" x2="2039.6" y1="0" y2="0"><stop offset="0" stop-color="#00ff35"/><stop offset="0.034" stop-color="#03ff33"/><stop offset="0.169" stop-color="#1fff2d"/><stop offset="0.492" stop-color="#6bff1d"/><stop offset="0.746" stop-color="#afff0e"/><stop offset="1" stop-color="#fdff00"/></linearGradient><linearGradient id="b29" gradientUnits="userSpaceOnUse" x1="1864.1" x2="2044.5" y1="0" y2="0"><stop offset="0" stop-color="#00ff37"/><stop offset="0.033" stop-color="#03ff36"/><stop offset="0.115" stop-color="#15ff32"/><stop offset="0.41" stop-color="#5bff23"/><stop offset="0.689" stop-color="#a7ff13"/><stop offset="0.951" stop-color="#fbff01"/><stop offset="0.967" stop-color="#fffe00"/><stop offset="1" stop-color="#fff300"/></linearGradient><linearGradient id="b30" gradientUnits="userSpaceOnUse" x1="1863.0" x2="2049.5" y1="0" y2="0"><stop offset="0" stop-color="#00ff39"/><stop offset="0.032" stop-color="#03ff38"/><stop offset="0.159" stop-color="#20ff32"/><stop offset="0.46" stop-color="#6dff22"/><stop offset="0.698" stop-color="#b3ff13"/><stop offset="0.921" stop-color="#fdff04"/><stop offset="1" stop-color="#ffe600"/></linearGradient><linearGradient id="b31" gradientUnits="userSpaceOnUse" x1="1861.9" x2="2054.5" y1="0" y2="0"><stop offset="0" stop-color="#00ff3c"/><stop offset="0.031" stop-color="#03ff3a"/><stop offset="0.138" stop-color="#1cff35"/><stop offset="0.431" stop-color="#6aff25"/><stop offset="0.662" stop-color="#b0ff17"/><stop offset="0.877" stop-color="#faff07"/><stop offset="0.892" stop-color="#fffe06"/><stop offset="1" stop-color="#ffdb00"/></linearGradient><linearGradient id="b32" gradientUnits="userSpaceOnUse" x1="1860.8" x2="2059.5" y1="0" y2="0"><stop offset="0" stop-color="#00ff3e"/><stop offset="0.03" stop-color="#03ff3d"/><stop offset="0.134" stop-color="#1dff37"/><stop offset="0.418" stop-color="#6bff28"/><stop offset="0.642" stop-color="#b2ff19"/><stop offset="0.851" stop-color="#fdff0a"/><stop offset="1" stop-color="#ffd000"/></linearGradient><linearGradient id="b33" gradientUnits="userSpaceOnUse" x1="1859.7" x2="2064.4" y1="0" y2="0"><stop offset="0" stop-color="#00ff41"/><stop offset="0.029" stop-color="#03ff3f"/><stop offset="0.13" stop-color="#1dff3a"/><stop offset="0.406" stop-color="#6cff2a"/><stop offset="0.609" stop-color="#aeff1d"/><stop offset="0.826" stop-color="#fffe0c"/><stop offset="0.913" stop-color="#ffdf05"/><stop offset="1" stop-color="#ffc500"/></linearGradient><linearGradient id="b34" gradientUnits="userSpaceOnUse" x1="1858.6" x2="2069.4" y1="0" y2="0"><stop offset="0" stop-color="#00ff43"/><stop offset="0.028" stop-color="#03ff42"/><stop offset="0.141" stop-color="#21ff3c"/><stop offset="0.394" stop-color="#6dff2d"/><stop offset="0.592" stop-color="#b0ff1f"/><stop offset="0.789" stop-color="#fdff10"/><stop offset="0.901" stop-color="#ffd806"/><stop offset="1" stop-color="#fb0"/></linearGradient><linearGradient id="b35" gradientUnits="userSpaceOnUse" x1="1857.5" x2="2074.4" y1="0" y2="0"><stop offset="0" stop-color="#00ff46"/><stop offset="0.027" stop-color="#03ff44"/><stop offset="0.137" stop-color="#21ff3e"/><stop offset="0.384" stop-color="#6eff2f"/><stop offset="0.575" stop-color="#b2ff22"/><stop offset="0.767" stop-color="#ffff13"/><stop offset="0.877" stop-color="#ffd508"/><stop offset="1" stop-color="#ffb200"/></linearGradient><linearGradient id="b36" gradientUnits="userSpaceOnUse" x1="1856.4" x2="2079.3" y1="0" y2="0"><stop offset="0" stop-color="#00ff48"/><stop offset="0.027" stop-color="#03ff47"/><stop offset="0.12" stop-color="#1eff42"/><stop offset="0.36" stop-color="#6aff33"/><stop offset="0.547" stop-color="#aeff26"/><stop offset="0.733" stop-color="#fcff17"/><stop offset="0.747" stop-color="#fffc15"/><stop offset="0.867" stop-color="#ffcf09"/><stop offset="1" stop-color="#ffa900"/></linearGradient><linearGradient id="b37" gradientUnits="userSpaceOnUse" x1="1855.3" x2="2084.3" y1="0" y2="0"><stop offset="0" stop-color="#00ff4b"/><stop offset="0.026" stop-color="#03ff49"/><stop offset="0.117" stop-color="#1eff44"/><stop offset="0.351" stop-color="#6bff36"/><stop offset="0.532" stop-color="#b0ff28"/><stop offset="0.714" stop-color="#ffff1a"/><stop offset="0.844" stop-color="#ffcc0b"/><stop offset="1" stop-color="#ffa100"/></linearGradient><linearGradient id="b38" gradientUnits="userSpaceOnUse" x1="1854.2" x2="2089.3" y1="0" y2="0"><stop offset="0" stop-color="#00ff4d"/><stop offset="0.025" stop-color="#03ff4c"/><stop offset="0.101" stop-color="#1aff48"/><stop offset="0.329" stop-color="#68ff39"/><stop offset="0.494" stop-color="#a7ff2d"/><stop offset="0.696" stop-color="#fffc1c"/><stop offset="0.759" stop-color="#ffe114"/><stop offset="0.835" stop-color="#ffc60c"/><stop offset="1" stop-color="#f90"/></linearGradient><linearGradient id="b39" gradientUnits="userSpaceOnUse" x1="1853.1" x2="2094.2" y1="0" y2="0"><stop offset="0" stop-color="#00ff50"/><stop offset="0.025" stop-color="#03ff4f"/><stop offset="0.111" stop-color="#1fff4a"/><stop offset="0.333" stop-color="#6dff3b"/><stop offset="0.506" stop-color="#b4ff2e"/><stop offset="0.667" stop-color="#feff20"/><stop offset="0.741" stop-color="#ffde16"/><stop offset="0.815" stop-color="#ffc40e"/><stop offset="0.901" stop-color="#ffaa06"/><stop offset="1" stop-color="#ff9200"/></linearGradient><linearGradient id="b40" gradientUnits="userSpaceOnUse" x1="1852.0" x2="2099.2" y1="0" y2="0"><stop offset="0" stop-color="#00ff53"/><stop offset="0.024" stop-color="#03ff51"/><stop offset="0.096" stop-color="#1bff4d"/><stop offset="0.313" stop-color="#6aff3f"/><stop offset="0.47" stop-color="#abff33"/><stop offset="0.651" stop-color="#fffd23"/><stop offset="0.723" stop-color="#ffdc19"/><stop offset="0.807" stop-color="#ffbd0f"/><stop offset="0.904" stop-color="#ffa106"/><stop offset="1" stop-color="#ff8b00"/></linearGradient><linearGradient id="b41" gradientUnits="userSpaceOnUse" x1="1851.0" x2="2104.2" y1="0" y2="0"><stop offset="0" stop-color="#00ff56"/><stop offset="0.024" stop-color="#03ff54"/><stop offset="0.094" stop-color="#1bff50"/><stop offset="0.306" stop-color="#6bff42"/><stop offset="0.471" stop-color="#b2ff35"/><stop offset="0.624" stop-color="#feff28"/><stop offset="0.706" stop-color="#ffd91b"/><stop offset="0.788" stop-color="#fb1"/><stop offset="0.882" stop-color="#ff9f08"/><stop offset="1" stop-color="#ff8400"/></linearGradient><linearGradient id="b42" gradientUnits="userSpaceOnUse" x1="1849.9" x2="2109.1" y1="0" y2="0"><stop offset="0" stop-color="#00ff58"/><stop offset="0.023" stop-color="#03ff57"/><stop offset="0.092" stop-color="#1bff53"/><stop offset="0.287" stop-color="#67ff46"/><stop offset="0.437" stop-color="#a9ff3a"/><stop offset="0.609" stop-color="#fffd2a"/><stop offset="0.69" stop-color="#ffd71d"/><stop offset="0.782" stop-color="#ffb512"/><stop offset="0.885" stop-color="#ff9707"/><stop offset="1" stop-color="#ff7e00"/></linearGradient><linearGradient id="b43" gradientUnits="userSpaceOnUse" x1="1848.8" x2="2114.1" y1="0" y2="0"><stop offset="0" stop-color="#00ff5b"/><stop offset="0.022" stop-color="#03ff5a"/><stop offset="0.101" stop-color="#20ff55"/><stop offset="0.292" stop-color="#6dff48"/><stop offset="0.438" stop-color="#b0ff3c"/><stop offset="0.584" stop-color="#fdff2f"/><stop offset="0.674" stop-color="#ffd420"/><stop offset="0.764" stop-color="#ffb314"/><stop offset="0.876" stop-color="#ff9308"/><stop offset="1" stop-color="#ff7800"/></linearGradient><linearGradient id="b44" gradientUnits="userSpaceOnUse" x1="1847.7" x2="2119.1" y1="0" y2="0"><stop offset="0" stop-color="#00ff5e"/><stop offset="0.022" stop-color="#03ff5d"/><stop offset="0.088" stop-color="#1cff59"/><stop offset="0.275" stop-color="#69ff4c"/><stop offset="0.418" stop-color="#adff40"/><stop offset="0.571" stop-color="#fffe32"/><stop offset="0.659" stop-color="#ffd222"/><stop offset="0.758" stop-color="#ffad14"/><stop offset="0.868" stop-color="#ff8e09"/><stop offset="1" stop-color="#ff7200"/></linearGradient><linearGradient id="b45" gradientUnits="userSpaceOnUse" x1="1846.6" x2="2124.1" y1="0" y2="0"><stop offset="0" stop-color="#00ff61"/><stop offset="0.022" stop-color="#03ff60"/><stop offset="0.086" stop-color="#1cff5c"/><stop offset="0.269" stop-color="#6aff4f"/><stop offset="0.409" stop-color="#aeff43"/><stop offset="0.548" stop-color="#fdff37"/><stop offset="0.645" stop-color="#ffcf24"/><stop offset="0.742" stop-color="#ffab16"/><stop offset="0.86" stop-color="#ff890a"/><stop offset="1" stop-color="#ff6c00"/></linearGradient><linearGradient id="b46" gradientUnits="userSpaceOnUse" x1="1845.5" x2="2129.0" y1="0" y2="0"><stop offset="0" stop-color="#00ff64"/><stop offset="0.021" stop-color="#03ff63"/><stop offset="0.084" stop-color="#1cff5f"/><stop offset="0.263" stop-color="#6bff52"/><stop offset="0.4" stop-color="#b0ff47"/><stop offset="0.537" stop-color="#fffe3a"/><stop offset="0.632" stop-color="#ffcd27"/><stop offset="0.737" stop-color="#ffa517"/><stop offset="0.863" stop-color="#ff8209"/><stop offset="1" stop-color="#ff6700"/></linearGradient><linearGradient id="b47" gradientUnits="userSpaceOnUse" x1="1844.4" x2="2134.0" y1="0" y2="0"><stop offset="0" stop-color="#00ff67"/><stop offset="0.021" stop-color="#03ff66"/><stop offset="0.072" stop-color="#18ff63"/><stop offset="0.247" stop-color="#67ff56"/><stop offset="0.371" stop-color="#a7ff4c"/><stop offset="0.515" stop-color="#fcff3e"/><stop offset="0.526" stop-color="#fffc3d"/><stop offset="0.619" stop-color="#ffcb29"/><stop offset="0.722" stop-color="#ffa319"/><stop offset="0.845" stop-color="#ff810b"/><stop offset="1" stop-color="#ff6200"/></linearGradient><linearGradient id="b48" gradientUnits="userSpaceOnUse" x1="1843.3" x2="2139.0" y1="0" y2="0"><stop offset="0" stop-color="#00ff6a"/><stop offset="0.02" stop-color="#03ff69"/><stop offset="0.081" stop-color="#1dff65"/><stop offset="0.253" stop-color="#6dff59"/><stop offset="0.384" stop-color="#b4ff4e"/><stop offset="0.505" stop-color="#ffff42"/><stop offset="0.596" stop-color="#ffcd2d"/><stop offset="0.707" stop-color="#ffa11b"/><stop offset="0.838" stop-color="#ff7c0c"/><stop offset="1" stop-color="#ff5d00"/></linearGradient><linearGradient id="b49" gradientUnits="userSpaceOnUse" x1="1842.2" x2="2143.9" y1="0" y2="0"><stop offset="0" stop-color="#00ff6e"/><stop offset="0.02" stop-color="#03ff6c"/><stop offset="0.069" stop-color="#19ff69"/><stop offset="0.228" stop-color="#64ff5e"/><stop offset="0.347" stop-color="#a5ff54"/><stop offset="0.485" stop-color="#fbff47"/><stop offset="0.495" stop-color="#fffc45"/><stop offset="0.545" stop-color="#ffde38"/><stop offset="0.594" stop-color="#ffc62d"/><stop offset="0.703" stop-color="#ff9c1c"/><stop offset="0.842" stop-color="#ff760c"/><stop offset="1" stop-color="#ff5800"/></linearGradient><linearGradient id="b50" gradientUnits="userSpaceOnUse" x1="1841.1" x2="2148.9" y1="0" y2="0"><stop offset="0" stop-color="#00ff71"/><stop offset="0.019" stop-color="#03ff70"/><stop offset="0.068" stop-color="#19ff6c"/><stop offset="0.233" stop-color="#6aff60"/><stop offset="0.359" stop-color="#b2ff56"/><stop offset="0.476" stop-color="#feff4a"/><stop offset="0.573" stop-color="#ffc832"/><stop offset="0.689" stop-color="#ff9a1e"/><stop offset="0.825" stop-color="#ff740d"/><stop offset="1" stop-color="#ff5400"/></linearGradient><linearGradient id="b51" gradientUnits="userSpaceOnUse" x1="1840.0" x2="2153.9" y1="0" y2="0"><stop offset="0" stop-color="#00ff74"/><stop offset="0.019" stop-color="#03ff73"/><stop offset="0.067" stop-color="#19ff70"/><stop offset="0.219" stop-color="#66ff65"/><stop offset="0.333" stop-color="#a8ff5b"/><stop offset="0.467" stop-color="#fffd4d"/><stop offset="0.514" stop-color="#ffde40"/><stop offset="0.562" stop-color="#ffc534"/><stop offset="0.686" stop-color="#ff941e"/><stop offset="0.829" stop-color="#ff6e0d"/><stop offset="1" stop-color="#ff4f00"/></linearGradient><linearGradient id="b52" gradientUnits="userSpaceOnUse" x1="1838.9" x2="2158.8" y1="0" y2="0"><stop offset="0" stop-color="#00ff78"/><stop offset="0.019" stop-color="#03ff76"/><stop offset="0.075" stop-color="#1eff73"/><stop offset="0.224" stop-color="#6dff67"/><stop offset="0.336" stop-color="#b0ff5e"/><stop offset="0.449" stop-color="#fdff53"/><stop offset="0.551" stop-color="#ffc337"/><stop offset="0.673" stop-color="#ff9220"/><stop offset="0.822" stop-color="#ff6b0e"/><stop offset="1" stop-color="#ff4b00"/></linearGradient><linearGradient id="b53" gradientUnits="userSpaceOnUse" x1="1837.8" x2="2163.8" y1="0" y2="0"><stop offset="0" stop-color="#00ff7b"/><stop offset="0.018" stop-color="#04ff7a"/><stop offset="0.064" stop-color="#1aff77"/><stop offset="0.211" stop-color="#68ff6c"/><stop offset="0.321" stop-color="#acff62"/><stop offset="0.44" stop-color="#fffe56"/><stop offset="0.486" stop-color="#ffde47"/><stop offset="0.541" stop-color="#ffc039"/><stop offset="0.661" stop-color="#ff9022"/><stop offset="0.817" stop-color="#ff670e"/><stop offset="1" stop-color="#ff4700"/></linearGradient><linearGradient id="b54" gradientUnits="userSpaceOnUse" x1="1836.7" x2="2168.8" y1="0" y2="0"><stop offset="0" stop-color="#00ff7e"/><stop offset="0.018" stop-color="#04ff7d"/><stop offset="0.054" stop-color="#15ff7b"/><stop offset="0.198" stop-color="#64ff70"/><stop offset="0.315" stop-color="#aeff66"/><stop offset="0.423" stop-color="#fdff5c"/><stop offset="0.432" stop-color="#fffb59"/><stop offset="0.477" stop-color="#ffdc4a"/><stop offset="0.532" stop-color="#ffbe3b"/><stop offset="0.595" stop-color="#ffa22d"/><stop offset="0.658" stop-color="#ff8b22"/><stop offset="0.811" stop-color="#ff630f"/><stop offset="1" stop-color="#ff4300"/></linearGradient><linearGradient id="b55" gradientUnits="userSpaceOnUse" x1="1835.6" x2="2173.7" y1="0" y2="0"><stop offset="0" stop-color="#00ff82"/><stop offset="0.018" stop-color="#04ff81"/><stop offset="0.062" stop-color="#1aff7e"/><stop offset="0.204" stop-color="#6bff73"/><stop offset="0.31" stop-color="#b0ff6a"/><stop offset="0.416" stop-color="#fffe60"/><stop offset="0.469" stop-color="#ffd94d"/><stop offset="0.522" stop-color="#ffbb3e"/><stop offset="0.584" stop-color="#ffa030"/><stop offset="0.646" stop-color="#ff8924"/><stop offset="0.805" stop-color="#ff600f"/><stop offset="1" stop-color="#ff4000"/></linearGradient><linearGradient id="b56" gradientUnits="userSpaceOnUse" x1="1834.5" x2="2178.7" y1="0" y2="0"><stop offset="0" stop-color="#00ff86"/><stop offset="0.017" stop-color="#04ff85"/><stop offset="0.052" stop-color="#16ff82"/><stop offset="0.191" stop-color="#66ff78"/><stop offset="0.287" stop-color="#a6ff70"/><stop offset="0.4" stop-color="#fcff65"/><stop offset="0.409" stop-color="#fffb63"/><stop offset="0.461" stop-color="#ffd64f"/><stop offset="0.513" stop-color="#ffb940"/><stop offset="0.574" stop-color="#ff9d32"/><stop offset="0.635" stop-color="#ff8726"/><stop offset="0.713" stop-color="#ff711a"/><stop offset="0.8" stop-color="#ff5d10"/><stop offset="1" stop-color="#ff3c00"/></linearGradient><linearGradient id="b57" gradientUnits="userSpaceOnUse" x1="1833.4" x2="2183.7" y1="0" y2="0"><stop offset="0" stop-color="#00ff89"/><stop offset="0.017" stop-color="#04ff88"/><stop offset="0.051" stop-color="#16ff86"/><stop offset="0.188" stop-color="#67ff7c"/><stop offset="0.291" stop-color="#aeff73"/><stop offset="0.393" stop-color="#ffff69"/><stop offset="0.444" stop-color="#ffd955"/><stop offset="0.496" stop-color="#ffbb45"/><stop offset="0.556" stop-color="#ff9f36"/><stop offset="0.624" stop-color="#ff8528"/><stop offset="0.786" stop-color="#ff5b11"/><stop offset="1" stop-color="#ff3800"/></linearGradient><linearGradient id="b58" gradientUnits="userSpaceOnUse" x1="1832.3" x2="2188.7" y1="0" y2="0"><stop offset="0" stop-color="#00ff8d"/><stop offset="0.008" stop-color="#00ff8d"/><stop offset="0.042" stop-color="#12ff8a"/><stop offset="0.176" stop-color="#63ff81"/><stop offset="0.269" stop-color="#a3ff79"/><stop offset="0.378" stop-color="#fbff6f"/><stop offset="0.387" stop-color="#fffc6c"/><stop offset="0.437" stop-color="#ffd658"/><stop offset="0.487" stop-color="#ffb847"/><stop offset="0.555" stop-color="#ff9936"/><stop offset="0.622" stop-color="#ff8128"/><stop offset="0.697" stop-color="#ff6b1d"/><stop offset="0.79" stop-color="#ff5611"/><stop offset="1" stop-color="#ff3500"/></linearGradient><linearGradient id="b59" gradientUnits="userSpaceOnUse" x1="1831.2" x2="2193.6" y1="0" y2="0"><stop offset="0" stop-color="#00ff91"/><stop offset="0.017" stop-color="#04ff90"/><stop offset="0.05" stop-color="#17ff8e"/><stop offset="0.182" stop-color="#6aff84"/><stop offset="0.281" stop-color="#b2ff7c"/><stop offset="0.372" stop-color="#feff73"/><stop offset="0.421" stop-color="#ffd95d"/><stop offset="0.479" stop-color="#ffb64a"/><stop offset="0.545" stop-color="#ff9738"/><stop offset="0.612" stop-color="#ff7f2a"/><stop offset="0.694" stop-color="#ff671d"/><stop offset="0.785" stop-color="#ff5312"/><stop offset="1" stop-color="#ff3200"/></linearGradient><linearGradient id="b60" gradientUnits="userSpaceOnUse" x1="1830.1" x2="2198.6" y1="0" y2="0"><stop offset="0" stop-color="#00ff95"/><stop offset="0.016" stop-color="#04ff94"/><stop offset="0.049" stop-color="#17ff92"/><stop offset="0.171" stop-color="#65ff89"/><stop offset="0.26" stop-color="#a7ff82"/><stop offset="0.366" stop-color="#fffd77"/><stop offset="0.415" stop-color="#ffd660"/><stop offset="0.472" stop-color="#ffb34c"/><stop offset="0.537" stop-color="#ff953a"/><stop offset="0.602" stop-color="#ff7d2c"/><stop offset="0.683" stop-color="#ff651f"/><stop offset="0.772" stop-color="#ff5113"/><stop offset="1" stop-color="#ff2f00"/></linearGradient><linearGradient id="b61" gradientUnits="userSpaceOnUse" x1="1829.0" x2="2203.6" y1="0" y2="0"><stop offset="0" stop-color="#0f9"/><stop offset="0.016" stop-color="#04ff98"/><stop offset="0.048" stop-color="#17ff96"/><stop offset="0.168" stop-color="#66ff8d"/><stop offset="0.264" stop-color="#b0ff86"/><stop offset="0.352" stop-color="#fdff7d"/><stop offset="0.408" stop-color="#ffd363"/><stop offset="0.456" stop-color="#ffb551"/><stop offset="0.52" stop-color="#ff963e"/><stop offset="0.592" stop-color="#ff7b2e"/><stop offset="0.672" stop-color="#ff6420"/><stop offset="0.768" stop-color="#ff4e14"/><stop offset="1" stop-color="#ff2c00"/></linearGradient><linearGradient id="b62" gradientUnits="userSpaceOnUse" x1="1827.9" x2="2208.5" y1="0" y2="0"><stop offset="0" stop-color="#00ff9d"/><stop offset="0.016" stop-color="#04ff9c"/><stop offset="0.047" stop-color="#17ff9a"/><stop offset="0.165" stop-color="#68ff92"/><stop offset="0.252" stop-color="#abff8b"/><stop offset="0.346" stop-color="#fffe81"/><stop offset="0.394" stop-color="#ffd669"/><stop offset="0.449" stop-color="#ffb353"/><stop offset="0.512" stop-color="#ff9440"/><stop offset="0.591" stop-color="#ff762e"/><stop offset="0.677" stop-color="#ff5e20"/><stop offset="0.772" stop-color="#ff4a13"/><stop offset="1" stop-color="#ff2900"/></linearGradient><linearGradient id="b63" gradientUnits="userSpaceOnUse" x1="1826.8" x2="2213.5" y1="0" y2="0"><stop offset="0" stop-color="#00ffa1"/><stop offset="0.008" stop-color="#00ffa1"/><stop offset="0.039" stop-color="#13ff9f"/><stop offset="0.155" stop-color="#63ff97"/><stop offset="0.248" stop-color="#aeff90"/><stop offset="0.333" stop-color="#fcff88"/><stop offset="0.341" stop-color="#fffa85"/><stop offset="0.388" stop-color="#ffd36c"/><stop offset="0.442" stop-color="#ffb056"/><stop offset="0.504" stop-color="#ff9143"/><stop offset="0.581" stop-color="#ff7430"/><stop offset="0.667" stop-color="#ff5c21"/><stop offset="0.76" stop-color="#ff4815"/><stop offset="1" stop-color="#ff2600"/></linearGradient><linearGradient id="b64" gradientUnits="userSpaceOnUse" x1="1825.7" x2="2218.5" y1="0" y2="0"><stop offset="0" stop-color="#00ffa5"/><stop offset="0.015" stop-color="#04ffa4"/><stop offset="0.046" stop-color="#18ffa3"/><stop offset="0.16" stop-color="#6aff9b"/><stop offset="0.244" stop-color="#b0ff94"/><stop offset="0.328" stop-color="#ffff8d"/><stop offset="0.374" stop-color="#ffd673"/><stop offset="0.435" stop-color="#ffad58"/><stop offset="0.496" stop-color="#ff8f45"/><stop offset="0.573" stop-color="#ff7232"/><stop offset="0.656" stop-color="#ff5b23"/><stop offset="0.756" stop-color="#ff4515"/><stop offset="1" stop-color="#ff2300"/></linearGradient><linearGradient id="b65" gradientUnits="userSpaceOnUse" x1="1824.6" x2="2223.4" y1="0" y2="0"><stop offset="0" stop-color="#0fa"/><stop offset="0.008" stop-color="#00ffa9"/><stop offset="0.038" stop-color="#13ffa7"/><stop offset="0.15" stop-color="#65ffa0"/><stop offset="0.226" stop-color="#a4ff9b"/><stop offset="0.316" stop-color="#fbff93"/><stop offset="0.323" stop-color="#fffb90"/><stop offset="0.368" stop-color="#ffd375"/><stop offset="0.429" stop-color="#ffab5b"/><stop offset="0.489" stop-color="#ff8d47"/><stop offset="0.564" stop-color="#ff7034"/><stop offset="0.654" stop-color="#ff5723"/><stop offset="0.752" stop-color="#ff4316"/><stop offset="1" stop-color="#ff2100"/></linearGradient><linearGradient id="b66" gradientUnits="userSpaceOnUse" x1="1823.5" x2="2228.4" y1="0" y2="0"><stop offset="0" stop-color="#00ffae"/><stop offset="0.007" stop-color="#00ffae"/><stop offset="0.037" stop-color="#13ffac"/><stop offset="0.148" stop-color="#66ffa5"/><stop offset="0.23" stop-color="#adff9f"/><stop offset="0.311" stop-color="#feff98"/><stop offset="0.363" stop-color="#ffd078"/><stop offset="0.415" stop-color="#ffad60"/><stop offset="0.481" stop-color="#ff8b49"/><stop offset="0.556" stop-color="#ff6f36"/><stop offset="0.644" stop-color="#ff5525"/><stop offset="0.748" stop-color="#ff4016"/><stop offset="1" stop-color="#ff1e00"/></linearGradient><linearGradient id="b67" gradientUnits="userSpaceOnUse" x1="1822.4" x2="2233.4" y1="0" y2="0"><stop offset="0" stop-color="#00ffb3"/><stop offset="0.007" stop-color="#00ffb2"/><stop offset="0.029" stop-color="#0effb1"/><stop offset="0.139" stop-color="#62ffaa"/><stop offset="0.212" stop-color="#a2ffa5"/><stop offset="0.299" stop-color="#faff9e"/><stop offset="0.307" stop-color="#fffc9c"/><stop offset="0.35" stop-color="#ffd37f"/><stop offset="0.409" stop-color="#ffaa63"/><stop offset="0.474" stop-color="#ff884b"/><stop offset="0.555" stop-color="#ff6a36"/><stop offset="0.642" stop-color="#ff5225"/><stop offset="0.745" stop-color="#ff3d16"/><stop offset="1" stop-color="#ff1c00"/></linearGradient><linearGradient id="b68" gradientUnits="userSpaceOnUse" x1="1821.4" x2="2238.3" y1="0" y2="0"><stop offset="0" stop-color="#00ffb7"/><stop offset="0.007" stop-color="#00ffb7"/><stop offset="0.036" stop-color="#14ffb5"/><stop offset="0.144" stop-color="#69ffaf"/><stop offset="0.223" stop-color="#b2ffaa"/><stop offset="0.295" stop-color="#fdffa4"/><stop offset="0.345" stop-color="#ffd082"/><stop offset="0.403" stop-color="#ffa865"/><stop offset="0.468" stop-color="#ff864d"/><stop offset="0.547" stop-color="#ff6838"/><stop offset="0.633" stop-color="#ff5027"/><stop offset="0.741" stop-color="#ff3a17"/><stop offset="0.863" stop-color="#ff280a"/><stop offset="1" stop-color="#ff1900"/></linearGradient><linearGradient id="b69" gradientUnits="userSpaceOnUse" x1="1820.3" x2="2243.3" y1="0" y2="0"><stop offset="0" stop-color="#00ffbc"/><stop offset="0.007" stop-color="#00ffbc"/><stop offset="0.035" stop-color="#14ffba"/><stop offset="0.141" stop-color="#69ffb4"/><stop offset="0.218" stop-color="#b3ffaf"/><stop offset="0.289" stop-color="#ffa"/><stop offset="0.338" stop-color="#ffcf86"/><stop offset="0.394" stop-color="#ffa769"/><stop offset="0.458" stop-color="#ff8550"/><stop offset="0.535" stop-color="#ff683b"/><stop offset="0.627" stop-color="#ff4e28"/><stop offset="0.732" stop-color="#ff3918"/><stop offset="0.859" stop-color="#ff260a"/><stop offset="1" stop-color="#ff1700"/></linearGradient><linearGradient id="b70" gradientUnits="userSpaceOnUse" x1="1819.2" x2="2248.3" y1="0" y2="0"><stop offset="0" stop-color="#00ffc1"/><stop offset="0.007" stop-color="#00ffc0"/><stop offset="0.035" stop-color="#14ffbf"/><stop offset="0.132" stop-color="#64ffba"/><stop offset="0.201" stop-color="#a7ffb6"/><stop offset="0.278" stop-color="#faffb0"/><stop offset="0.285" stop-color="#fffcae"/><stop offset="0.333" stop-color="#ffcc89"/><stop offset="0.389" stop-color="#ffa46b"/><stop offset="0.458" stop-color="#ff8050"/><stop offset="0.535" stop-color="#ff643b"/><stop offset="0.625" stop-color="#ff4b28"/><stop offset="0.729" stop-color="#ff3618"/><stop offset="0.854" stop-color="#ff240b"/><stop offset="1" stop-color="#ff1400"/></linearGradient><linearGradient id="b71" gradientUnits="userSpaceOnUse" x1="1818.1" x2="2253.3" y1="0" y2="0"><stop offset="0" stop-color="#00ffc6"/><stop offset="0.007" stop-color="#00ffc5"/><stop offset="0.034" stop-color="#14ffc4"/><stop offset="0.13" stop-color="#66ffbf"/><stop offset="0.205" stop-color="#b0ffbb"/><stop offset="0.274" stop-color="#feffb6"/><stop offset="0.322" stop-color="#ffcf91"/><stop offset="0.377" stop-color="#ffa671"/><stop offset="0.445" stop-color="#ff8155"/><stop offset="0.521" stop-color="#ff643e"/><stop offset="0.61" stop-color="#ff4b2b"/><stop offset="0.719" stop-color="#ff351a"/><stop offset="0.849" stop-color="#ff220b"/><stop offset="1" stop-color="#ff1200"/></linearGradient><linearGradient id="b72" gradientUnits="userSpaceOnUse" x1="1817.0" x2="2258.2" y1="0" y2="0"><stop offset="0" stop-color="#00ffcb"/><stop offset="0.007" stop-color="#00ffca"/><stop offset="0.034" stop-color="#14ffc9"/><stop offset="0.128" stop-color="#67ffc5"/><stop offset="0.196" stop-color="#abffc1"/><stop offset="0.27" stop-color="#fffdbb"/><stop offset="0.318" stop-color="#ffcc94"/><stop offset="0.372" stop-color="#ffa374"/><stop offset="0.439" stop-color="#ff7f57"/><stop offset="0.52" stop-color="#ff603e"/><stop offset="0.615" stop-color="#ff462a"/><stop offset="0.723" stop-color="#ff3119"/><stop offset="0.851" stop-color="#ff1f0b"/><stop offset="1" stop-color="#ff1000"/></linearGradient><linearGradient id="b73" gradientUnits="userSpaceOnUse" x1="1815.9" x2="2263.2" y1="0" y2="0"><stop offset="0" stop-color="#00ffd0"/><stop offset="0.007" stop-color="#00ffd0"/><stop offset="0.02" stop-color="#0affcf"/><stop offset="0.113" stop-color="#5bffcb"/><stop offset="0.187" stop-color="#a6ffc7"/><stop offset="0.26" stop-color="#fdffc3"/><stop offset="0.267" stop-color="#fff9be"/><stop offset="0.313" stop-color="#ffc897"/><stop offset="0.367" stop-color="#ffa076"/><stop offset="0.433" stop-color="#ff7c59"/><stop offset="0.513" stop-color="#ff5e40"/><stop offset="0.607" stop-color="#ff442b"/><stop offset="0.713" stop-color="#ff301b"/><stop offset="0.847" stop-color="#ff1d0b"/><stop offset="1" stop-color="#ff0e00"/></linearGradient><linearGradient id="b74" gradientUnits="userSpaceOnUse" x1="1814.8" x2="2268.2" y1="0" y2="0"><stop offset="0" stop-color="#00ffd5"/><stop offset="0.007" stop-color="#00ffd5"/><stop offset="0.026" stop-color="#0fffd4"/><stop offset="0.118" stop-color="#63ffd1"/><stop offset="0.184" stop-color="#a8ffce"/><stop offset="0.257" stop-color="#fffec9"/><stop offset="0.303" stop-color="#ffcb9f"/><stop offset="0.362" stop-color="#ff9e79"/><stop offset="0.428" stop-color="#ff7a5b"/><stop offset="0.507" stop-color="#ff5c42"/><stop offset="0.599" stop-color="#ff432d"/><stop offset="0.711" stop-color="#ff2d1b"/><stop offset="0.842" stop-color="#ff1b0c"/><stop offset="1" stop-color="#ff0c00"/></linearGradient><linearGradient id="b75" gradientUnits="userSpaceOnUse" x1="1813.7" x2="2273.1" y1="0" y2="0"><stop offset="0" stop-color="#00ffda"/><stop offset="0.006" stop-color="#00ffda"/><stop offset="0.019" stop-color="#0affda"/><stop offset="0.11" stop-color="#5effd7"/><stop offset="0.182" stop-color="#abffd4"/><stop offset="0.247" stop-color="#fcffd1"/><stop offset="0.253" stop-color="#fffacc"/><stop offset="0.299" stop-color="#ffc8a2"/><stop offset="0.357" stop-color="#ff9b7b"/><stop offset="0.422" stop-color="#ff785d"/><stop offset="0.5" stop-color="#ff5a44"/><stop offset="0.597" stop-color="#ff402d"/><stop offset="0.708" stop-color="#ff2b1b"/><stop offset="0.844" stop-color="#ff190c"/><stop offset="1" stop-color="#ff0a00"/></linearGradient><linearGradient id="b76" gradientUnits="userSpaceOnUse" x1="1812.6" x2="2278.1" y1="0" y2="0"><stop offset="0" stop-color="#00ffe0"/><stop offset="0.006" stop-color="#00ffe0"/><stop offset="0.026" stop-color="#10ffdf"/><stop offset="0.115" stop-color="#6fd"/><stop offset="0.179" stop-color="#adffda"/><stop offset="0.244" stop-color="#ffffd8"/><stop offset="0.288" stop-color="#ffcbaa"/><stop offset="0.346" stop-color="#ff9d82"/><stop offset="0.41" stop-color="#ff7962"/><stop offset="0.494" stop-color="#ff5846"/><stop offset="0.59" stop-color="#ff3e2f"/><stop offset="0.705" stop-color="#ff291c"/><stop offset="0.853" stop-color="#ff150b"/><stop offset="1" stop-color="#ff0800"/></linearGradient><linearGradient id="b77" gradientUnits="userSpaceOnUse" x1="1811.5" x2="2283.1" y1="0" y2="0"><stop offset="0" stop-color="#00ffe6"/><stop offset="0.006" stop-color="#00ffe5"/><stop offset="0.019" stop-color="#0affe5"/><stop offset="0.108" stop-color="#60ffe3"/><stop offset="0.171" stop-color="#a8ffe1"/><stop offset="0.234" stop-color="#faffdf"/><stop offset="0.241" stop-color="#fffbdb"/><stop offset="0.285" stop-color="#ffc8ad"/><stop offset="0.342" stop-color="#ff9a84"/><stop offset="0.405" stop-color="#ff7664"/><stop offset="0.487" stop-color="#ff5647"/><stop offset="0.582" stop-color="#ff3d30"/><stop offset="0.696" stop-color="#ff271d"/><stop offset="0.848" stop-color="#ff140b"/><stop offset="1" stop-color="#ff0600"/></linearGradient><linearGradient id="b78" gradientUnits="userSpaceOnUse" x1="1810.4" x2="2288.0" y1="0" y2="0"><stop offset="0" stop-color="#00ffeb"/><stop offset="0.006" stop-color="#00ffeb"/><stop offset="0.025" stop-color="#10ffeb"/><stop offset="0.113" stop-color="#68ffe9"/><stop offset="0.175" stop-color="#b2ffe8"/><stop offset="0.231" stop-color="#feffe6"/><stop offset="0.275" stop-color="#ffcbb6"/><stop offset="0.331" stop-color="#ff9b8b"/><stop offset="0.4" stop-color="#ff7466"/><stop offset="0.481" stop-color="#ff5449"/><stop offset="0.575" stop-color="#ff3b32"/><stop offset="0.694" stop-color="#ff251d"/><stop offset="0.844" stop-color="#ff120c"/><stop offset="1" stop-color="#ff0400"/></linearGradient><linearGradient id="b79" gradientUnits="userSpaceOnUse" x1="1809.3" x2="2293.0" y1="0" y2="0"><stop offset="0" stop-color="#00fff1"/><stop offset="0.006" stop-color="#00fff1"/><stop offset="0.019" stop-color="#0afff1"/><stop offset="0.105" stop-color="#63fff0"/><stop offset="0.16" stop-color="#a5ffef"/><stop offset="0.222" stop-color="#f9ffee"/><stop offset="0.228" stop-color="#fffceb"/><stop offset="0.272" stop-color="#ffc7b9"/><stop offset="0.327" stop-color="#ff998d"/><stop offset="0.395" stop-color="#ff7269"/><stop offset="0.475" stop-color="#ff534b"/><stop offset="0.574" stop-color="#ff3832"/><stop offset="0.691" stop-color="#ff231e"/><stop offset="0.84" stop-color="#ff100c"/><stop offset="1" stop-color="#ff0200"/></linearGradient><linearGradient id="b80" gradientUnits="userSpaceOnUse" x1="1808.2" x2="2298.0" y1="0" y2="0"><stop offset="0" stop-color="#00fff7"/><stop offset="0.006" stop-color="#00fff7"/><stop offset="0.018" stop-color="#0afff7"/><stop offset="0.098" stop-color="#5dfff7"/><stop offset="0.159" stop-color="#a8fff6"/><stop offset="0.22" stop-color="#fdfff6"/><stop offset="0.226" stop-color="#fff8ef"/><stop offset="0.25" stop-color="#ffd8d0"/><stop offset="0.274" stop-color="#ffbeb7"/><stop offset="0.329" stop-color="#ff928c"/><stop offset="0.396" stop-color="#ff6d68"/><stop offset="0.476" stop-color="#ff4f4b"/><stop offset="0.573" stop-color="#ff3532"/><stop offset="0.689" stop-color="#ff211e"/><stop offset="0.841" stop-color="#ff0e0c"/><stop offset="1" stop-color="#ff0100"/></linearGradient><linearGradient id="b81" gradientUnits="userSpaceOnUse" x1="1807.1" x2="2298.9" y1="0" y2="0"><stop offset="0" stop-color="#00fffd"/><stop offset="0.006" stop-color="#00fffd"/><stop offset="0.018" stop-color="#0bfffd"/><stop offset="0.098" stop-color="#5ffffe"/><stop offset="0.152" stop-color="#a3fffe"/><stop offset="0.213" stop-color="#f9fffe"/><stop offset="0.22" stop-color="#fffbfa"/><stop offset="0.244" stop-color="#ffdad9"/><stop offset="0.268" stop-color="#ffc0bf"/><stop offset="0.323" stop-color="#ff9292"/><stop offset="0.39" stop-color="#ff6d6c"/><stop offset="0.47" stop-color="#ff4e4e"/><stop offset="0.567" stop-color="#ff3534"/><stop offset="0.689" stop-color="#ff1f1f"/><stop offset="0.835" stop-color="#ff0d0d"/><stop offset="1" stop-color="#f00"/></linearGradient><linearGradient id="b82" gradientUnits="userSpaceOnUse" x1="1806.0" x2="2295.3" y1="0" y2="0"><stop offset="0" stop-color="#00faff"/><stop offset="0.006" stop-color="#00faff"/><stop offset="0.018" stop-color="#0bfaff"/><stop offset="0.104" stop-color="#65f9ff"/><stop offset="0.165" stop-color="#b0f9ff"/><stop offset="0.22" stop-color="#fef8ff"/><stop offset="0.244" stop-color="#ffd8de"/><stop offset="0.268" stop-color="#ffbec3"/><stop offset="0.323" stop-color="#ff9195"/><stop offset="0.39" stop-color="#ff6b6f"/><stop offset="0.47" stop-color="#ff4d51"/><stop offset="0.567" stop-color="#ff3437"/><stop offset="0.689" stop-color="#ff1e21"/><stop offset="0.841" stop-color="#ff0c0e"/><stop offset="1" stop-color="#ff0001"/></linearGradient><linearGradient id="b83" gradientUnits="userSpaceOnUse" x1="1804.9" x2="2288.1" y1="0" y2="0"><stop offset="0" stop-color="#00f4ff"/><stop offset="0.012" stop-color="#05f4ff"/><stop offset="0.099" stop-color="#5cf3ff"/><stop offset="0.154" stop-color="#9ef2ff"/><stop offset="0.222" stop-color="#faf1ff"/><stop offset="0.228" stop-color="#ffecfb"/><stop offset="0.272" stop-color="#ffbac7"/><stop offset="0.327" stop-color="#ff8e98"/><stop offset="0.395" stop-color="#ff6972"/><stop offset="0.475" stop-color="#ff4b52"/><stop offset="0.574" stop-color="#ff3238"/><stop offset="0.691" stop-color="#ff1e23"/><stop offset="0.846" stop-color="#ff0c10"/><stop offset="1" stop-color="#ff0003"/></linearGradient><linearGradient id="b84" gradientUnits="userSpaceOnUse" x1="1803.8" x2="2280.9" y1="0" y2="0"><stop offset="0" stop-color="#0ef"/><stop offset="0.006" stop-color="#0ef"/><stop offset="0.025" stop-color="#10eeff"/><stop offset="0.113" stop-color="#69ecff"/><stop offset="0.175" stop-color="#b3eaff"/><stop offset="0.231" stop-color="#ffe9ff"/><stop offset="0.275" stop-color="#ffb7ca"/><stop offset="0.331" stop-color="#ff8b9b"/><stop offset="0.4" stop-color="#ff6774"/><stop offset="0.481" stop-color="#ff4954"/><stop offset="0.575" stop-color="#ff323b"/><stop offset="0.694" stop-color="#ff1d25"/><stop offset="0.844" stop-color="#ff0c12"/><stop offset="1" stop-color="#ff0005"/></linearGradient><linearGradient id="b85" gradientUnits="userSpaceOnUse" x1="1802.7" x2="2273.8" y1="0" y2="0"><stop offset="0" stop-color="#00e8ff"/><stop offset="0.006" stop-color="#00e8ff"/><stop offset="0.019" stop-color="#0ae8ff"/><stop offset="0.108" stop-color="#61e6ff"/><stop offset="0.171" stop-color="#a9e4ff"/><stop offset="0.234" stop-color="#fbe1ff"/><stop offset="0.241" stop-color="#ffddfa"/><stop offset="0.285" stop-color="#ffaec7"/><stop offset="0.342" stop-color="#ff8599"/><stop offset="0.405" stop-color="#ff6576"/><stop offset="0.487" stop-color="#ff4856"/><stop offset="0.582" stop-color="#ff303d"/><stop offset="0.696" stop-color="#ff1d27"/><stop offset="0.848" stop-color="#ff0b14"/><stop offset="1" stop-color="#ff0006"/></linearGradient><linearGradient id="b86" gradientUnits="userSpaceOnUse" x1="1801.6" x2="2266.6" y1="0" y2="0"><stop offset="0" stop-color="#00e3ff"/><stop offset="0.006" stop-color="#00e2ff"/><stop offset="0.026" stop-color="#10e2ff"/><stop offset="0.115" stop-color="#66dfff"/><stop offset="0.179" stop-color="#aeddff"/><stop offset="0.244" stop-color="#ffd9fe"/><stop offset="0.288" stop-color="#ffabca"/><stop offset="0.346" stop-color="#ff829c"/><stop offset="0.41" stop-color="#ff6378"/><stop offset="0.494" stop-color="#ff4658"/><stop offset="0.59" stop-color="#ff2f3e"/><stop offset="0.705" stop-color="#ff1c29"/><stop offset="0.853" stop-color="#ff0b16"/><stop offset="1" stop-color="#ff0008"/></linearGradient><linearGradient id="b87" gradientUnits="userSpaceOnUse" x1="1800.5" x2="2259.5" y1="0" y2="0"><stop offset="0" stop-color="#0df"/><stop offset="0.007" stop-color="#0df"/><stop offset="0.026" stop-color="#10dcff"/><stop offset="0.118" stop-color="#66d9ff"/><stop offset="0.183" stop-color="#add6ff"/><stop offset="0.248" stop-color="#ffd3ff"/><stop offset="0.294" stop-color="#ffa6cc"/><stop offset="0.353" stop-color="#ff7e9d"/><stop offset="0.418" stop-color="#ff5f79"/><stop offset="0.497" stop-color="#ff455b"/><stop offset="0.595" stop-color="#ff2e40"/><stop offset="0.706" stop-color="#ff1c2b"/><stop offset="0.856" stop-color="#ff0b17"/><stop offset="1" stop-color="#ff000a"/></linearGradient><linearGradient id="b88" gradientUnits="userSpaceOnUse" x1="1799.4" x2="2252.3" y1="0" y2="0"><stop offset="0" stop-color="#00d8ff"/><stop offset="0.007" stop-color="#00d7ff"/><stop offset="0.02" stop-color="#0ad7ff"/><stop offset="0.113" stop-color="#5ed3ff"/><stop offset="0.185" stop-color="#abd0ff"/><stop offset="0.252" stop-color="#fbccff"/><stop offset="0.258" stop-color="#ffc8fa"/><stop offset="0.305" stop-color="#ff9ec9"/><stop offset="0.358" stop-color="#ff7ca0"/><stop offset="0.424" stop-color="#ff5d7c"/><stop offset="0.503" stop-color="#ff435d"/><stop offset="0.596" stop-color="#ff2e43"/><stop offset="0.709" stop-color="#ff1b2e"/><stop offset="0.854" stop-color="#ff0b1a"/><stop offset="1" stop-color="#ff000c"/></linearGradient><linearGradient id="b89" gradientUnits="userSpaceOnUse" x1="1798.3" x2="2245.1" y1="0" y2="0"><stop offset="0" stop-color="#00d2ff"/><stop offset="0.007" stop-color="#00d2ff"/><stop offset="0.027" stop-color="#0fd1ff"/><stop offset="0.121" stop-color="#63cdff"/><stop offset="0.188" stop-color="#a8caff"/><stop offset="0.262" stop-color="#ffc5fe"/><stop offset="0.309" stop-color="#ff9bcc"/><stop offset="0.362" stop-color="#ff79a3"/><stop offset="0.43" stop-color="#ff5b7e"/><stop offset="0.51" stop-color="#ff415f"/><stop offset="0.604" stop-color="#ff2c45"/><stop offset="0.711" stop-color="#ff1b30"/><stop offset="0.846" stop-color="#ff0c1d"/><stop offset="1" stop-color="#ff000e"/></linearGradient><linearGradient id="b90" gradientUnits="userSpaceOnUse" x1="1797.2" x2="2238.0" y1="0" y2="0"><stop offset="0" stop-color="#00cdff"/><stop offset="0.007" stop-color="#00cdff"/><stop offset="0.027" stop-color="#0fccff"/><stop offset="0.122" stop-color="#62c7ff"/><stop offset="0.197" stop-color="#adc3ff"/><stop offset="0.265" stop-color="#fcbfff"/><stop offset="0.272" stop-color="#ffbaf9"/><stop offset="0.32" stop-color="#ff93c9"/><stop offset="0.374" stop-color="#ff73a1"/><stop offset="0.442" stop-color="#ff567d"/><stop offset="0.517" stop-color="#ff3f61"/><stop offset="0.612" stop-color="#ff2b47"/><stop offset="0.721" stop-color="#ff1a31"/><stop offset="0.85" stop-color="#ff0b1f"/><stop offset="1" stop-color="#ff0010"/></linearGradient><linearGradient id="b91" gradientUnits="userSpaceOnUse" x1="1796.1" x2="2230.8" y1="0" y2="0"><stop offset="0" stop-color="#00c8ff"/><stop offset="0.007" stop-color="#00c8ff"/><stop offset="0.034" stop-color="#14c6ff"/><stop offset="0.131" stop-color="#67c1ff"/><stop offset="0.2" stop-color="#abbdff"/><stop offset="0.276" stop-color="#ffb7fd"/><stop offset="0.324" stop-color="#ff90cc"/><stop offset="0.379" stop-color="#ff70a3"/><stop offset="0.448" stop-color="#ff547f"/><stop offset="0.524" stop-color="#ff3e62"/><stop offset="0.614" stop-color="#ff2a4a"/><stop offset="0.724" stop-color="#ff1934"/><stop offset="0.848" stop-color="#ff0b22"/><stop offset="1" stop-color="#ff0012"/></linearGradient><linearGradient id="b92" gradientUnits="userSpaceOnUse" x1="1795.0" x2="2223.7" y1="0" y2="0"><stop offset="0" stop-color="#00c3ff"/><stop offset="0.007" stop-color="#00c3ff"/><stop offset="0.035" stop-color="#14c1ff"/><stop offset="0.133" stop-color="#66bcff"/><stop offset="0.21" stop-color="#b0b7ff"/><stop offset="0.28" stop-color="#fdb2ff"/><stop offset="0.329" stop-color="#ff8dcf"/><stop offset="0.385" stop-color="#ff6ea6"/><stop offset="0.455" stop-color="#ff5281"/><stop offset="0.531" stop-color="#ff3c64"/><stop offset="0.622" stop-color="#ff294b"/><stop offset="0.727" stop-color="#ff1936"/><stop offset="0.853" stop-color="#ff0b24"/><stop offset="1" stop-color="#ff0015"/></linearGradient><linearGradient id="b93" gradientUnits="userSpaceOnUse" x1="1793.9" x2="2216.5" y1="0" y2="0"><stop offset="0" stop-color="#00beff"/><stop offset="0.007" stop-color="#00beff"/><stop offset="0.028" stop-color="#0fbdff"/><stop offset="0.135" stop-color="#64b7ff"/><stop offset="0.206" stop-color="#a7b2ff"/><stop offset="0.284" stop-color="#faacff"/><stop offset="0.291" stop-color="#ffa9fc"/><stop offset="0.34" stop-color="#ff86cc"/><stop offset="0.397" stop-color="#ff68a4"/><stop offset="0.461" stop-color="#ff5084"/><stop offset="0.539" stop-color="#ff3a66"/><stop offset="0.624" stop-color="#ff284f"/><stop offset="0.73" stop-color="#ff1839"/><stop offset="0.851" stop-color="#ff0b27"/><stop offset="1" stop-color="#ff0017"/></linearGradient><linearGradient id="b94" gradientUnits="userSpaceOnUse" x1="1792.9" x2="2209.3" y1="0" y2="0"><stop offset="0" stop-color="#00b9ff"/><stop offset="0.007" stop-color="#00b9ff"/><stop offset="0.036" stop-color="#14b7ff"/><stop offset="0.144" stop-color="#69b1ff"/><stop offset="0.223" stop-color="#b3abff"/><stop offset="0.295" stop-color="#fea6ff"/><stop offset="0.345" stop-color="#ff83cf"/><stop offset="0.396" stop-color="#ff69ab"/><stop offset="0.46" stop-color="#ff5089"/><stop offset="0.54" stop-color="#ff3a6a"/><stop offset="0.626" stop-color="#ff2852"/><stop offset="0.734" stop-color="#ff183c"/><stop offset="0.856" stop-color="#ff0a29"/><stop offset="1" stop-color="#ff0019"/></linearGradient><linearGradient id="b95" gradientUnits="userSpaceOnUse" x1="1791.8" x2="2202.2" y1="0" y2="0"><stop offset="0" stop-color="#00b5ff"/><stop offset="0.007" stop-color="#00b4ff"/><stop offset="0.029" stop-color="#0eb3ff"/><stop offset="0.139" stop-color="#62acff"/><stop offset="0.212" stop-color="#a2a7ff"/><stop offset="0.299" stop-color="#fba0ff"/><stop offset="0.307" stop-color="#ff9dfb"/><stop offset="0.35" stop-color="#ff80d2"/><stop offset="0.409" stop-color="#ff63a9"/><stop offset="0.474" stop-color="#ff4b88"/><stop offset="0.555" stop-color="#ff366a"/><stop offset="0.642" stop-color="#ff2552"/><stop offset="0.745" stop-color="#ff163d"/><stop offset="1" stop-color="#ff001c"/></linearGradient><linearGradient id="b96" gradientUnits="userSpaceOnUse" x1="1790.7" x2="2195.0" y1="0" y2="0"><stop offset="0" stop-color="#00b0ff"/><stop offset="0.007" stop-color="#00b0ff"/><stop offset="0.037" stop-color="#13aeff"/><stop offset="0.148" stop-color="#67a7ff"/><stop offset="0.23" stop-color="#aea1ff"/><stop offset="0.311" stop-color="#ff99fe"/><stop offset="0.356" stop-color="#ff7dd5"/><stop offset="0.415" stop-color="#ff61ac"/><stop offset="0.481" stop-color="#ff498a"/><stop offset="0.556" stop-color="#ff366e"/><stop offset="0.644" stop-color="#ff2555"/><stop offset="0.748" stop-color="#ff1640"/><stop offset="1" stop-color="#ff001e"/></linearGradient><linearGradient id="b97" gradientUnits="userSpaceOnUse" x1="1789.6" x2="2187.8" y1="0" y2="0"><stop offset="0" stop-color="#00acff"/><stop offset="0.008" stop-color="#00abff"/><stop offset="0.03" stop-color="#0eaaff"/><stop offset="0.143" stop-color="#60a2ff"/><stop offset="0.233" stop-color="#ac9cff"/><stop offset="0.316" stop-color="#fc94ff"/><stop offset="0.323" stop-color="#ff91fa"/><stop offset="0.368" stop-color="#ff76d2"/><stop offset="0.429" stop-color="#ff5baa"/><stop offset="0.489" stop-color="#ff478c"/><stop offset="0.564" stop-color="#ff3470"/><stop offset="0.654" stop-color="#ff2357"/><stop offset="0.752" stop-color="#ff1642"/><stop offset="1" stop-color="#ff0021"/></linearGradient><linearGradient id="b98" gradientUnits="userSpaceOnUse" x1="1788.5" x2="2180.7" y1="0" y2="0"><stop offset="0" stop-color="#00a7ff"/><stop offset="0.008" stop-color="#00a7ff"/><stop offset="0.038" stop-color="#13a5ff"/><stop offset="0.153" stop-color="#659dff"/><stop offset="0.237" stop-color="#aa97ff"/><stop offset="0.328" stop-color="#ff8dfe"/><stop offset="0.374" stop-color="#ff73d5"/><stop offset="0.435" stop-color="#ff59ad"/><stop offset="0.496" stop-color="#ff458f"/><stop offset="0.573" stop-color="#ff3272"/><stop offset="0.656" stop-color="#ff235a"/><stop offset="0.756" stop-color="#ff1545"/><stop offset="1" stop-color="#ff0023"/></linearGradient><linearGradient id="b99" gradientUnits="userSpaceOnUse" x1="1787.4" x2="2173.5" y1="0" y2="0"><stop offset="0" stop-color="#00a3ff"/><stop offset="0.016" stop-color="#04a2ff"/><stop offset="0.047" stop-color="#18a0ff"/><stop offset="0.163" stop-color="#6998ff"/><stop offset="0.248" stop-color="#ae91ff"/><stop offset="0.333" stop-color="#fd89ff"/><stop offset="0.388" stop-color="#ff6cd2"/><stop offset="0.442" stop-color="#ff56af"/><stop offset="0.504" stop-color="#ff4391"/><stop offset="0.581" stop-color="#ff3074"/><stop offset="0.667" stop-color="#ff215c"/><stop offset="0.76" stop-color="#ff1548"/><stop offset="1" stop-color="#ff0026"/></linearGradient><linearGradient id="b100" gradientUnits="userSpaceOnUse" x1="1786.3" x2="2166.4" y1="0" y2="0"><stop offset="0" stop-color="#009fff"/><stop offset="0.016" stop-color="#049eff"/><stop offset="0.047" stop-color="#179cff"/><stop offset="0.165" stop-color="#6893ff"/><stop offset="0.252" stop-color="#ac8cff"/><stop offset="0.346" stop-color="#ff82fd"/><stop offset="0.394" stop-color="#ff6ad5"/><stop offset="0.449" stop-color="#ff54b2"/><stop offset="0.512" stop-color="#ff4193"/><stop offset="0.591" stop-color="#ff2f76"/><stop offset="0.677" stop-color="#ff205e"/><stop offset="0.772" stop-color="#ff134a"/><stop offset="1" stop-color="#ff0029"/></linearGradient><linearGradient id="b101" gradientUnits="userSpaceOnUse" x1="1785.2" x2="2159.2" y1="0" y2="0"><stop offset="0" stop-color="#009bff"/><stop offset="0.016" stop-color="#049aff"/><stop offset="0.048" stop-color="#1798ff"/><stop offset="0.168" stop-color="#678fff"/><stop offset="0.264" stop-color="#b187ff"/><stop offset="0.352" stop-color="#fe7eff"/><stop offset="0.4" stop-color="#ff67d8"/><stop offset="0.456" stop-color="#ff51b4"/><stop offset="0.52" stop-color="#ff3e95"/><stop offset="0.592" stop-color="#ff2e7a"/><stop offset="0.672" stop-color="#ff2063"/><stop offset="0.768" stop-color="#ff144e"/><stop offset="1" stop-color="#ff002c"/></linearGradient><linearGradient id="b102" gradientUnits="userSpaceOnUse" x1="1784.1" x2="2152.0" y1="0" y2="0"><stop offset="0" stop-color="#0097ff"/><stop offset="0.016" stop-color="#0496ff"/><stop offset="0.049" stop-color="#1793ff"/><stop offset="0.171" stop-color="#668aff"/><stop offset="0.26" stop-color="#a883ff"/><stop offset="0.358" stop-color="#fb7aff"/><stop offset="0.366" stop-color="#ff77fc"/><stop offset="0.415" stop-color="#ff61d5"/><stop offset="0.472" stop-color="#ff4cb3"/><stop offset="0.537" stop-color="#ff3a94"/><stop offset="0.602" stop-color="#ff2c7c"/><stop offset="0.683" stop-color="#ff1f65"/><stop offset="0.772" stop-color="#ff1351"/><stop offset="1" stop-color="#ff002f"/></linearGradient><linearGradient id="b103" gradientUnits="userSpaceOnUse" x1="1783.0" x2="2144.9" y1="0" y2="0"><stop offset="0" stop-color="#0093ff"/><stop offset="0.017" stop-color="#0492ff"/><stop offset="0.05" stop-color="#178fff"/><stop offset="0.182" stop-color="#6a86ff"/><stop offset="0.281" stop-color="#b37dff"/><stop offset="0.372" stop-color="#ff74ff"/><stop offset="0.421" stop-color="#ff5ed8"/><stop offset="0.479" stop-color="#ff4ab5"/><stop offset="0.545" stop-color="#ff3896"/><stop offset="0.612" stop-color="#ff2a7e"/><stop offset="0.694" stop-color="#ff1d67"/><stop offset="0.785" stop-color="#ff1253"/><stop offset="1" stop-color="#ff0032"/></linearGradient><linearGradient id="b104" gradientUnits="userSpaceOnUse" x1="1781.9" x2="2137.7" y1="0" y2="0"><stop offset="0" stop-color="#008fff"/><stop offset="0.008" stop-color="#008eff"/><stop offset="0.042" stop-color="#128cff"/><stop offset="0.176" stop-color="#6382ff"/><stop offset="0.277" stop-color="#aa79ff"/><stop offset="0.378" stop-color="#fc70ff"/><stop offset="0.387" stop-color="#ff6dfb"/><stop offset="0.437" stop-color="#ff58d5"/><stop offset="0.487" stop-color="#ff47b8"/><stop offset="0.555" stop-color="#ff3698"/><stop offset="0.622" stop-color="#ff2980"/><stop offset="0.697" stop-color="#ff1d6b"/><stop offset="0.79" stop-color="#ff1156"/><stop offset="1" stop-color="#ff0035"/></linearGradient><linearGradient id="b105" gradientUnits="userSpaceOnUse" x1="1780.8" x2="2130.6" y1="0" y2="0"><stop offset="0" stop-color="#008bff"/><stop offset="0.017" stop-color="#048aff"/><stop offset="0.051" stop-color="#1687ff"/><stop offset="0.188" stop-color="#687dff"/><stop offset="0.291" stop-color="#af74ff"/><stop offset="0.393" stop-color="#ff6afe"/><stop offset="0.444" stop-color="#ff55d8"/><stop offset="0.496" stop-color="#ff45ba"/><stop offset="0.556" stop-color="#ff369e"/><stop offset="0.624" stop-color="#ff2885"/><stop offset="0.786" stop-color="#ff115b"/><stop offset="1" stop-color="#ff0038"/></linearGradient><linearGradient id="b106" gradientUnits="userSpaceOnUse" x1="1779.7" x2="2123.4" y1="0" y2="0"><stop offset="0" stop-color="#0087ff"/><stop offset="0.009" stop-color="#0087ff"/><stop offset="0.043" stop-color="#1184ff"/><stop offset="0.183" stop-color="#617aff"/><stop offset="0.296" stop-color="#ad70ff"/><stop offset="0.4" stop-color="#fd66ff"/><stop offset="0.409" stop-color="#ff63fa"/><stop offset="0.461" stop-color="#ff50d5"/><stop offset="0.513" stop-color="#ff40b8"/><stop offset="0.574" stop-color="#ff329d"/><stop offset="0.635" stop-color="#ff2687"/><stop offset="0.8" stop-color="#ff105c"/><stop offset="1" stop-color="#ff003c"/></linearGradient><linearGradient id="b107" gradientUnits="userSpaceOnUse" x1="1778.6" x2="2116.2" y1="0" y2="0"><stop offset="0" stop-color="#0083ff"/><stop offset="0.018" stop-color="#0482ff"/><stop offset="0.053" stop-color="#1680ff"/><stop offset="0.195" stop-color="#6675ff"/><stop offset="0.301" stop-color="#ab6cff"/><stop offset="0.416" stop-color="#ff60fd"/><stop offset="0.469" stop-color="#ff4dd8"/><stop offset="0.522" stop-color="#ff3ebb"/><stop offset="0.584" stop-color="#ff309f"/><stop offset="0.646" stop-color="#ff2489"/><stop offset="0.805" stop-color="#ff0f60"/><stop offset="1" stop-color="#ff003f"/></linearGradient><linearGradient id="b108" gradientUnits="userSpaceOnUse" x1="1777.5" x2="2109.1" y1="0" y2="0"><stop offset="0" stop-color="#0080ff"/><stop offset="0.018" stop-color="#047fff"/><stop offset="0.063" stop-color="#1a7cff"/><stop offset="0.207" stop-color="#6a71ff"/><stop offset="0.315" stop-color="#af67ff"/><stop offset="0.423" stop-color="#fe5dff"/><stop offset="0.477" stop-color="#ff4adb"/><stop offset="0.523" stop-color="#ff3ec2"/><stop offset="0.586" stop-color="#ff2fa5"/><stop offset="0.649" stop-color="#ff248e"/><stop offset="0.802" stop-color="#ff1065"/><stop offset="1" stop-color="#ff0043"/></linearGradient><linearGradient id="b109" gradientUnits="userSpaceOnUse" x1="1776.4" x2="2101.9" y1="0" y2="0"><stop offset="0" stop-color="#007cff"/><stop offset="0.018" stop-color="#047bff"/><stop offset="0.064" stop-color="#1a78ff"/><stop offset="0.211" stop-color="#696dff"/><stop offset="0.312" stop-color="#a764ff"/><stop offset="0.44" stop-color="#ff57fd"/><stop offset="0.486" stop-color="#ff48de"/><stop offset="0.541" stop-color="#ff39bf"/><stop offset="0.661" stop-color="#ff2290"/><stop offset="0.817" stop-color="#ff0e67"/><stop offset="1" stop-color="#ff0047"/></linearGradient><linearGradient id="b110" gradientUnits="userSpaceOnUse" x1="1775.3" x2="2094.7" y1="0" y2="0"><stop offset="0" stop-color="#0079ff"/><stop offset="0.019" stop-color="#0378ff"/><stop offset="0.065" stop-color="#1a74ff"/><stop offset="0.215" stop-color="#6869ff"/><stop offset="0.336" stop-color="#b15fff"/><stop offset="0.449" stop-color="#fe53ff"/><stop offset="0.495" stop-color="#ff45e0"/><stop offset="0.551" stop-color="#ff37c2"/><stop offset="0.673" stop-color="#ff2092"/><stop offset="0.822" stop-color="#ff0d6a"/><stop offset="1" stop-color="#ff004b"/></linearGradient><linearGradient id="b111" gradientUnits="userSpaceOnUse" x1="1774.2" x2="2087.6" y1="0" y2="0"><stop offset="0" stop-color="#0075ff"/><stop offset="0.019" stop-color="#0374ff"/><stop offset="0.067" stop-color="#1971ff"/><stop offset="0.219" stop-color="#6766ff"/><stop offset="0.324" stop-color="#a35dff"/><stop offset="0.457" stop-color="#fb50ff"/><stop offset="0.467" stop-color="#ff4efc"/><stop offset="0.514" stop-color="#ff40dd"/><stop offset="0.562" stop-color="#ff34c4"/><stop offset="0.686" stop-color="#ff1e94"/><stop offset="0.829" stop-color="#ff0d6e"/><stop offset="1" stop-color="#ff004f"/></linearGradient><linearGradient id="b112" gradientUnits="userSpaceOnUse" x1="1773.1" x2="2080.4" y1="0" y2="0"><stop offset="0" stop-color="#0072ff"/><stop offset="0.019" stop-color="#0371ff"/><stop offset="0.068" stop-color="#196eff"/><stop offset="0.233" stop-color="#6b61ff"/><stop offset="0.359" stop-color="#b356ff"/><stop offset="0.476" stop-color="#ff4bff"/><stop offset="0.524" stop-color="#ff3de0"/><stop offset="0.573" stop-color="#ff32c7"/><stop offset="0.689" stop-color="#ff1d99"/><stop offset="0.825" stop-color="#ff0d74"/><stop offset="1" stop-color="#ff0053"/></linearGradient><linearGradient id="b113" gradientUnits="userSpaceOnUse" x1="1772.0" x2="2073.3" y1="0" y2="0"><stop offset="0" stop-color="#006fff"/><stop offset="0.02" stop-color="#036eff"/><stop offset="0.069" stop-color="#196aff"/><stop offset="0.228" stop-color="#655eff"/><stop offset="0.356" stop-color="#ab54ff"/><stop offset="0.485" stop-color="#fc47ff"/><stop offset="0.495" stop-color="#ff45fb"/><stop offset="0.545" stop-color="#ff38dd"/><stop offset="0.594" stop-color="#ff2dc5"/><stop offset="0.703" stop-color="#ff1b9b"/><stop offset="0.842" stop-color="#ff0b76"/><stop offset="1" stop-color="#ff0058"/></linearGradient><linearGradient id="b114" gradientUnits="userSpaceOnUse" x1="1770.9" x2="2066.1" y1="0" y2="0"><stop offset="0" stop-color="#006cff"/><stop offset="0.02" stop-color="#036aff"/><stop offset="0.071" stop-color="#1967ff"/><stop offset="0.242" stop-color="#695aff"/><stop offset="0.374" stop-color="#af4fff"/><stop offset="0.505" stop-color="#ff42fe"/><stop offset="0.596" stop-color="#ff2dcc"/><stop offset="0.707" stop-color="#ff1ba0"/><stop offset="0.838" stop-color="#ff0c7c"/><stop offset="1" stop-color="#ff005d"/></linearGradient><linearGradient id="b115" gradientUnits="userSpaceOnUse" x1="1769.8" x2="2058.9" y1="0" y2="0"><stop offset="0" stop-color="#0068ff"/><stop offset="0.021" stop-color="#0367ff"/><stop offset="0.082" stop-color="#1d63ff"/><stop offset="0.258" stop-color="#6d56ff"/><stop offset="0.392" stop-color="#b34bff"/><stop offset="0.515" stop-color="#fd3fff"/><stop offset="0.619" stop-color="#ff29ca"/><stop offset="0.722" stop-color="#ff19a2"/><stop offset="0.845" stop-color="#ff0b80"/><stop offset="1" stop-color="#ff0061"/></linearGradient><linearGradient id="b116" gradientUnits="userSpaceOnUse" x1="1768.7" x2="2051.8" y1="0" y2="0"><stop offset="0" stop-color="#0065ff"/><stop offset="0.021" stop-color="#0364ff"/><stop offset="0.074" stop-color="#1860ff"/><stop offset="0.253" stop-color="#6754ff"/><stop offset="0.389" stop-color="#ab48ff"/><stop offset="0.537" stop-color="#ff3afd"/><stop offset="0.632" stop-color="#ff26cc"/><stop offset="0.737" stop-color="#ff17a5"/><stop offset="0.863" stop-color="#ff0982"/><stop offset="1" stop-color="#ff0067"/></linearGradient><linearGradient id="b117" gradientUnits="userSpaceOnUse" x1="1767.6" x2="2044.6" y1="0" y2="0"><stop offset="0" stop-color="#0062ff"/><stop offset="0.022" stop-color="#0361ff"/><stop offset="0.086" stop-color="#1c5dff"/><stop offset="0.269" stop-color="#6a50ff"/><stop offset="0.409" stop-color="#af44ff"/><stop offset="0.548" stop-color="#fe37ff"/><stop offset="0.645" stop-color="#ff24cf"/><stop offset="0.742" stop-color="#ff16aa"/><stop offset="0.86" stop-color="#ff0989"/><stop offset="1" stop-color="#ff006c"/></linearGradient><linearGradient id="b118" gradientUnits="userSpaceOnUse" x1="1766.5" x2="2037.5" y1="0" y2="0"><stop offset="0" stop-color="#005fff"/><stop offset="0.022" stop-color="#035eff"/><stop offset="0.088" stop-color="#1c5aff"/><stop offset="0.275" stop-color="#694cff"/><stop offset="0.407" stop-color="#a842ff"/><stop offset="0.571" stop-color="#ff32fd"/><stop offset="0.659" stop-color="#ff22d1"/><stop offset="0.758" stop-color="#ff14ac"/><stop offset="0.868" stop-color="#ff098d"/><stop offset="1" stop-color="#ff0071"/></linearGradient><linearGradient id="b119" gradientUnits="userSpaceOnUse" x1="1765.4" x2="2030.3" y1="0" y2="0"><stop offset="0" stop-color="#005cff"/><stop offset="0.022" stop-color="#035bff"/><stop offset="0.09" stop-color="#1c57ff"/><stop offset="0.292" stop-color="#6d48ff"/><stop offset="0.438" stop-color="#b13dff"/><stop offset="0.584" stop-color="#fe2fff"/><stop offset="0.674" stop-color="#ff1fd4"/><stop offset="0.764" stop-color="#ff13b2"/><stop offset="0.876" stop-color="#ff0892"/><stop offset="1" stop-color="#f07"/></linearGradient><linearGradient id="b120" gradientUnits="userSpaceOnUse" x1="1764.4" x2="2023.1" y1="0" y2="0"><stop offset="0" stop-color="#0059ff"/><stop offset="0.023" stop-color="#0358ff"/><stop offset="0.092" stop-color="#1b54ff"/><stop offset="0.287" stop-color="#6746ff"/><stop offset="0.437" stop-color="#aa3aff"/><stop offset="0.598" stop-color="#fb2cff"/><stop offset="0.609" stop-color="#ff2afc"/><stop offset="0.69" stop-color="#ff1dd6"/><stop offset="0.782" stop-color="#ff11b4"/><stop offset="0.885" stop-color="#ff0797"/><stop offset="1" stop-color="#ff007d"/></linearGradient><linearGradient id="b121" gradientUnits="userSpaceOnUse" x1="1763.3" x2="2016.0" y1="0" y2="0"><stop offset="0" stop-color="#0056ff"/><stop offset="0.024" stop-color="#0355ff"/><stop offset="0.094" stop-color="#1b51ff"/><stop offset="0.306" stop-color="#6b42ff"/><stop offset="0.471" stop-color="#b335ff"/><stop offset="0.624" stop-color="#ff28ff"/><stop offset="0.706" stop-color="#ff1bd9"/><stop offset="0.788" stop-color="#ff11ba"/><stop offset="0.882" stop-color="#ff079f"/><stop offset="1" stop-color="#ff0084"/></linearGradient><linearGradient id="b122" gradientUnits="userSpaceOnUse" x1="1762.2" x2="2008.8" y1="0" y2="0"><stop offset="0" stop-color="#0054ff"/><stop offset="0.024" stop-color="#0352ff"/><stop offset="0.096" stop-color="#1b4eff"/><stop offset="0.313" stop-color="#6a3fff"/><stop offset="0.482" stop-color="#b132ff"/><stop offset="0.639" stop-color="#fc25ff"/><stop offset="0.651" stop-color="#ff23fc"/><stop offset="0.723" stop-color="#ff18db"/><stop offset="0.807" stop-color="#ff0ebd"/><stop offset="0.904" stop-color="#ff05a1"/><stop offset="1" stop-color="#ff008a"/></linearGradient><linearGradient id="b123" gradientUnits="userSpaceOnUse" x1="1761.1" x2="2001.6" y1="0" y2="0"><stop offset="0" stop-color="#0051ff"/><stop offset="0.025" stop-color="#034fff"/><stop offset="0.099" stop-color="#1b4bff"/><stop offset="0.321" stop-color="#693cff"/><stop offset="0.494" stop-color="#af2fff"/><stop offset="0.667" stop-color="#ff20ff"/><stop offset="0.741" stop-color="#ff16de"/><stop offset="0.815" stop-color="#ff0ec3"/><stop offset="0.901" stop-color="#ff06a9"/><stop offset="1" stop-color="#ff0091"/></linearGradient><linearGradient id="b124" gradientUnits="userSpaceOnUse" x1="1760.0" x2="1994.5" y1="0" y2="0"><stop offset="0" stop-color="#004eff"/><stop offset="0.025" stop-color="#034dff"/><stop offset="0.114" stop-color="#1e47ff"/><stop offset="0.342" stop-color="#6d39ff"/><stop offset="0.519" stop-color="#b32bff"/><stop offset="0.684" stop-color="#fd1dff"/><stop offset="0.835" stop-color="#ff0bc5"/><stop offset="1" stop-color="#f09"/></linearGradient><linearGradient id="b125" gradientUnits="userSpaceOnUse" x1="1758.9" x2="1987.3" y1="0" y2="0"><stop offset="0" stop-color="#004bff"/><stop offset="0.026" stop-color="#034aff"/><stop offset="0.117" stop-color="#1e45ff"/><stop offset="0.351" stop-color="#6c36ff"/><stop offset="0.532" stop-color="#b129ff"/><stop offset="0.714" stop-color="#ff19fe"/><stop offset="0.844" stop-color="#ff0bcc"/><stop offset="1" stop-color="#ff00a1"/></linearGradient><linearGradient id="b126" gradientUnits="userSpaceOnUse" x1="1757.8" x2="1980.2" y1="0" y2="0"><stop offset="0" stop-color="#0049ff"/><stop offset="0.027" stop-color="#0347ff"/><stop offset="0.12" stop-color="#1e42ff"/><stop offset="0.36" stop-color="#6b33ff"/><stop offset="0.547" stop-color="#af26ff"/><stop offset="0.733" stop-color="#fd17ff"/><stop offset="0.867" stop-color="#ff08ce"/><stop offset="1" stop-color="#ff00a9"/></linearGradient><linearGradient id="b127" gradientUnits="userSpaceOnUse" x1="1756.7" x2="1973.0" y1="0" y2="0"><stop offset="0" stop-color="#0046ff"/><stop offset="0.027" stop-color="#0345ff"/><stop offset="0.123" stop-color="#1e3fff"/><stop offset="0.37" stop-color="#6a30ff"/><stop offset="0.562" stop-color="#ad23ff"/><stop offset="0.767" stop-color="#ff13fe"/><stop offset="0.877" stop-color="#ff07d5"/><stop offset="1" stop-color="#ff00b2"/></linearGradient><linearGradient id="b128" gradientUnits="userSpaceOnUse" x1="1755.6" x2="1965.8" y1="0" y2="0"><stop offset="0" stop-color="#04f"/><stop offset="0.028" stop-color="#0342ff"/><stop offset="0.127" stop-color="#1d3dff"/><stop offset="0.394" stop-color="#6d2dff"/><stop offset="0.592" stop-color="#b11fff"/><stop offset="0.789" stop-color="#fd10ff"/><stop offset="0.901" stop-color="#ff05d7"/><stop offset="1" stop-color="#f0b"/></linearGradient><linearGradient id="b129" gradientUnits="userSpaceOnUse" x1="1754.5" x2="1958.7" y1="0" y2="0"><stop offset="0" stop-color="#0041ff"/><stop offset="0.029" stop-color="#0340ff"/><stop offset="0.13" stop-color="#1d3aff"/><stop offset="0.406" stop-color="#6c2aff"/><stop offset="0.609" stop-color="#af1dff"/><stop offset="0.812" stop-color="#fb0dff"/><stop offset="0.826" stop-color="#ff0cfd"/><stop offset="0.913" stop-color="#ff04de"/><stop offset="1" stop-color="#ff00c5"/></linearGradient><linearGradient id="b130" gradientUnits="userSpaceOnUse" x1="1753.4" x2="1951.5" y1="0" y2="0"><stop offset="0" stop-color="#003fff"/><stop offset="0.03" stop-color="#033dff"/><stop offset="0.134" stop-color="#1d38ff"/><stop offset="0.418" stop-color="#6b28ff"/><stop offset="0.642" stop-color="#b219ff"/><stop offset="0.851" stop-color="#fe0aff"/><stop offset="1" stop-color="#ff00cf"/></linearGradient><linearGradient id="b131" gradientUnits="userSpaceOnUse" x1="1752.3" x2="1944.4" y1="0" y2="0"><stop offset="0" stop-color="#003cff"/><stop offset="0.031" stop-color="#033bff"/><stop offset="0.138" stop-color="#1d35ff"/><stop offset="0.431" stop-color="#6a25ff"/><stop offset="0.662" stop-color="#b017ff"/><stop offset="0.877" stop-color="#fb07ff"/><stop offset="0.892" stop-color="#ff06fd"/><stop offset="1" stop-color="#ff00da"/></linearGradient><linearGradient id="b132" gradientUnits="userSpaceOnUse" x1="1751.2" x2="1937.2" y1="0" y2="0"><stop offset="0" stop-color="#003aff"/><stop offset="0.032" stop-color="#0338ff"/><stop offset="0.145" stop-color="#1d33ff"/><stop offset="0.452" stop-color="#6b22ff"/><stop offset="0.694" stop-color="#b213ff"/><stop offset="0.919" stop-color="#fe03ff"/><stop offset="1" stop-color="#ff00e6"/></linearGradient><linearGradient id="b133" gradientUnits="userSpaceOnUse" x1="1750.1" x2="1930.0" y1="0" y2="0"><stop offset="0" stop-color="#0037ff"/><stop offset="0.033" stop-color="#0336ff"/><stop offset="0.1" stop-color="#13f"/><stop offset="0.4" stop-color="#5924ff"/><stop offset="0.683" stop-color="#a613ff"/><stop offset="0.95" stop-color="#fb01ff"/><stop offset="0.967" stop-color="#ff00fd"/><stop offset="1" stop-color="#ff00f2"/></linearGradient><linearGradient id="b134" gradientUnits="userSpaceOnUse" x1="1749.0" x2="1922.9" y1="0" y2="0"><stop offset="0" stop-color="#0035ff"/><stop offset="0.034" stop-color="#0334ff"/><stop offset="0.172" stop-color="#202dff"/><stop offset="0.5" stop-color="#6e1dff"/><stop offset="0.759" stop-color="#b40dff"/><stop offset="1" stop-color="#fe00ff"/></linearGradient><linearGradient id="b135" gradientUnits="userSpaceOnUse" x1="1747.9" x2="1915.7" y1="0" y2="0"><stop offset="0" stop-color="#03f"/><stop offset="0.036" stop-color="#0331ff"/><stop offset="0.161" stop-color="#1c2cff"/><stop offset="0.5" stop-color="#681bff"/><stop offset="0.75" stop-color="#a80dff"/><stop offset="1" stop-color="#f100ff"/></linearGradient><linearGradient id="b136" gradientUnits="userSpaceOnUse" x1="1746.8" x2="1908.5" y1="0" y2="0"><stop offset="0" stop-color="#0030ff"/><stop offset="0.037" stop-color="#032fff"/><stop offset="0.148" stop-color="#182aff"/><stop offset="0.481" stop-color="#5f1bff"/><stop offset="0.741" stop-color="#9d0dff"/><stop offset="1" stop-color="#e300ff"/></linearGradient><linearGradient id="b137" gradientUnits="userSpaceOnUse" x1="1745.7" x2="1901.4" y1="0" y2="0"><stop offset="0" stop-color="#002eff"/><stop offset="0.038" stop-color="#032dff"/><stop offset="0.135" stop-color="#1429ff"/><stop offset="0.481" stop-color="#5a19ff"/><stop offset="0.75" stop-color="#970cff"/><stop offset="1" stop-color="#d700ff"/></linearGradient><linearGradient id="b138" gradientUnits="userSpaceOnUse" x1="1744.6" x2="1894.2" y1="0" y2="0"><stop offset="0" stop-color="#002cff"/><stop offset="0.04" stop-color="#032aff"/><stop offset="0.12" stop-color="#1127ff"/><stop offset="0.48" stop-color="#5518ff"/><stop offset="0.74" stop-color="#8d0bff"/><stop offset="1" stop-color="#cb00ff"/></linearGradient><linearGradient id="b139" gradientUnits="userSpaceOnUse" x1="1743.5" x2="1887.1" y1="0" y2="0"><stop offset="0" stop-color="#002aff"/><stop offset="0.083" stop-color="#0a27ff"/><stop offset="0.458" stop-color="#4c18ff"/><stop offset="0.729" stop-color="#830bff"/><stop offset="1" stop-color="#bf00ff"/></linearGradient><linearGradient id="b140" gradientUnits="userSpaceOnUse" x1="1742.4" x2="1879.9" y1="0" y2="0"><stop offset="0" stop-color="#0028ff"/><stop offset="0.065" stop-color="#0625ff"/><stop offset="0.457" stop-color="#4816ff"/><stop offset="0.739" stop-color="#7d0aff"/><stop offset="1" stop-color="#b300ff"/></linearGradient><linearGradient id="b141" gradientUnits="userSpaceOnUse" x1="1741.3" x2="1872.7" y1="0" y2="0"><stop offset="0" stop-color="#0026ff"/><stop offset="0.045" stop-color="#0324ff"/><stop offset="0.455" stop-color="#4315ff"/><stop offset="1" stop-color="#a800ff"/></linearGradient><linearGradient id="b142" gradientUnits="userSpaceOnUse" x1="1740.2" x2="1865.6" y1="0" y2="0"><stop offset="0" stop-color="#0024ff"/><stop offset="0.048" stop-color="#0322ff"/><stop offset="0.452" stop-color="#3f14ff"/><stop offset="1" stop-color="#9e00ff"/></linearGradient><linearGradient id="b143" gradientUnits="userSpaceOnUse" x1="1739.1" x2="1858.4" y1="0" y2="0"><stop offset="0" stop-color="#0021ff"/><stop offset="0.05" stop-color="#0320ff"/><stop offset="0.425" stop-color="#3714ff"/><stop offset="1" stop-color="#9300ff"/></linearGradient><linearGradient id="b144" gradientUnits="userSpaceOnUse" x1="1738.0" x2="1851.3" y1="0" y2="0"><stop offset="0" stop-color="#001fff"/><stop offset="0.053" stop-color="#031eff"/><stop offset="0.421" stop-color="#3312ff"/><stop offset="1" stop-color="#8a00ff"/></linearGradient><linearGradient id="b145" gradientUnits="userSpaceOnUse" x1="1736.9" x2="1844.1" y1="0" y2="0"><stop offset="0" stop-color="#001dff"/><stop offset="0.056" stop-color="#031cff"/><stop offset="0.389" stop-color="#2b12ff"/><stop offset="1" stop-color="#8000ff"/></linearGradient><linearGradient id="b146" gradientUnits="userSpaceOnUse" x1="1735.9" x2="1836.9" y1="0" y2="0"><stop offset="0" stop-color="#001bff"/><stop offset="0.059" stop-color="#031aff"/><stop offset="0.382" stop-color="#2711ff"/><stop offset="1" stop-color="#70f"/></linearGradient><linearGradient id="b147" gradientUnits="userSpaceOnUse" x1="1734.8" x2="1829.8" y1="0" y2="0"><stop offset="0" stop-color="#001aff"/><stop offset="0.062" stop-color="#0318ff"/><stop offset="0.375" stop-color="#2410ff"/><stop offset="1" stop-color="#6d00ff"/></linearGradient><linearGradient id="b148" gradientUnits="userSpaceOnUse" x1="1733.7" x2="1822.6" y1="0" y2="0"><stop offset="0" stop-color="#0018ff"/><stop offset="0.067" stop-color="#0316ff"/><stop offset="0.333" stop-color="#1d10ff"/><stop offset="1" stop-color="#6500ff"/></linearGradient><linearGradient id="b149" gradientUnits="userSpaceOnUse" x1="1732.6" x2="1815.4" y1="0" y2="0"><stop offset="0" stop-color="#0016ff"/><stop offset="0.071" stop-color="#0314ff"/><stop offset="0.286" stop-color="#160fff"/><stop offset="1" stop-color="#5c00ff"/></linearGradient><linearGradient id="b150" gradientUnits="userSpaceOnUse" x1="1731.5" x2="1808.3" y1="0" y2="0"><stop offset="0" stop-color="#0014ff"/><stop offset="0.077" stop-color="#0212ff"/><stop offset="0.269" stop-color="#120eff"/><stop offset="1" stop-color="#5400ff"/></linearGradient><linearGradient id="b151" gradientUnits="userSpaceOnUse" x1="1730.4" x2="1801.1" y1="0" y2="0"><stop offset="0" stop-color="#0012ff"/><stop offset="0.208" stop-color="#0c0eff"/><stop offset="1" stop-color="#4c00ff"/></linearGradient><linearGradient id="b152" gradientUnits="userSpaceOnUse" x1="1729.3" x2="1794.0" y1="0" y2="0"><stop offset="0" stop-color="#0010ff"/><stop offset="0.136" stop-color="#050eff"/><stop offset="1" stop-color="#40f"/></linearGradient><linearGradient id="b153" gradientUnits="userSpaceOnUse" x1="1728.2" x2="1786.8" y1="0" y2="0"><stop offset="0" stop-color="#000eff"/><stop offset="0.1" stop-color="#020dff"/><stop offset="1" stop-color="#3c00ff"/></linearGradient><linearGradient id="b154" gradientUnits="userSpaceOnUse" x1="1727.1" x2="1779.6" y1="0" y2="0"><stop offset="0" stop-color="#000dff"/><stop offset="0.111" stop-color="#020bff"/><stop offset="1" stop-color="#3500ff"/></linearGradient><linearGradient id="b155" gradientUnits="userSpaceOnUse" x1="1726.0" x2="1772.5" y1="0" y2="0"><stop offset="0" stop-color="#000bff"/><stop offset="0.125" stop-color="#0209ff"/><stop offset="1" stop-color="#2e00ff"/></linearGradient><linearGradient id="b156" gradientUnits="userSpaceOnUse" x1="1724.9" x2="1765.3" y1="0" y2="0"><stop offset="0" stop-color="#0009ff"/><stop offset="0.143" stop-color="#0208ff"/><stop offset="1" stop-color="#2700ff"/></linearGradient><linearGradient id="b157" gradientUnits="userSpaceOnUse" x1="1723.8" x2="1758.1" y1="0" y2="0"><stop offset="0" stop-color="#0008ff"/><stop offset="0.167" stop-color="#0206ff"/><stop offset="1" stop-color="#2000ff"/></linearGradient><linearGradient id="b158" gradientUnits="userSpaceOnUse" x1="1722.7" x2="1751.0" y1="0" y2="0"><stop offset="0" stop-color="#0006ff"/><stop offset="0.2" stop-color="#0204ff"/><stop offset="1" stop-color="#1900ff"/></linearGradient><linearGradient id="b159" gradientUnits="userSpaceOnUse" x1="1721.6" x2="1743.8" y1="0" y2="0"><stop offset="0" stop-color="#0004ff"/><stop offset="0.25" stop-color="#0203ff"/><stop offset="1" stop-color="#1300ff"/></linearGradient><linearGradient id="b160" gradientUnits="userSpaceOnUse" x1="1720.5" x2="1736.7" y1="0" y2="0"><stop offset="0" stop-color="#0003ff"/><stop offset="1" stop-color="#0d00ff"/></linearGradient><linearGradient id="b161" gradientUnits="userSpaceOnUse" x1="1720.5" x2="1729.5" y1="0" y2="0"><stop offset="0" stop-color="#0001ff"/><stop offset="1" stop-color="#0600ff"/></linearGradient>
</defs>
<g clip-path="url(#cl)"><rect x="1624.8" y="158.0" width="36.3" height="5.60" fill="url(#a0)"/><rect x="1609.2" y="163.0" width="73.5" height="5.60" fill="url(#a1)"/><rect x="1599.9" y="168.0" width="98.8" height="5.60" fill="url(#a2)"/><rect x="1593.6" y="173.0" width="117.9" height="5.60" fill="url(#a3)"/><rect x="1588.3" y="178.0" width="135.2" height="5.60" fill="url(#a4)"/><rect x="1584.4" y="183.0" width="150.6" height="5.60" fill="url(#a5)"/><rect x="1580.5" y="188.0" width="165.5" height="5.60" fill="url(#a6)"/><rect x="1577.2" y="193.0" width="179.1" height="5.60" fill="url(#a7)"/><rect x="1574.6" y="198.0" width="191.8" height="5.60" fill="url(#a8)"/><rect x="1571.9" y="203.0" width="204.3" height="5.60" fill="url(#a9)"/><rect x="1569.2" y="208.0" width="216.2" height="5.60" fill="url(#a10)"/><rect x="1567.2" y="213.0" width="227.3" height="5.60" fill="url(#a11)"/><rect x="1565.3" y="218.0" width="237.9" height="5.60" fill="url(#a12)"/><rect x="1563.5" y="223.0" width="248.3" height="5.60" fill="url(#a13)"/><rect x="1561.7" y="228.0" width="258.6" height="5.60" fill="url(#a14)"/><rect x="1560.1" y="233.0" width="268.3" height="5.60" fill="url(#a15)"/><rect x="1559.0" y="238.0" width="277.6" height="5.60" fill="url(#a16)"/><rect x="1557.8" y="243.0" width="286.6" height="5.60" fill="url(#a17)"/><rect x="1556.7" y="248.0" width="295.6" height="5.60" fill="url(#a18)"/><rect x="1555.5" y="253.0" width="304.4" height="5.60" fill="url(#a19)"/><rect x="1554.5" y="258.0" width="313.0" height="5.60" fill="url(#a20)"/><rect x="1553.9" y="263.0" width="321.2" height="5.60" fill="url(#a21)"/><rect x="1553.2" y="268.0" width="329.2" height="5.60" fill="url(#a22)"/><rect x="1552.5" y="273.0" width="337.2" height="5.60" fill="url(#a23)"/><rect x="1551.8" y="278.0" width="345.1" height="5.60" fill="url(#a24)"/><rect x="1551.2" y="283.0" width="353.0" height="5.60" fill="url(#a25)"/><rect x="1550.7" y="288.0" width="360.6" height="5.60" fill="url(#a26)"/><rect x="1550.4" y="293.0" width="368.0" height="5.60" fill="url(#a27)"/><rect x="1550.0" y="298.0" width="375.4" height="5.60" fill="url(#a28)"/><rect x="1549.7" y="303.0" width="382.7" height="5.60" fill="url(#a29)"/><rect x="1549.4" y="308.0" width="390.0" height="5.60" fill="url(#a30)"/><rect x="1549.1" y="313.0" width="397.2" height="5.60" fill="url(#a31)"/><rect x="1548.9" y="318.0" width="404.3" height="5.60" fill="url(#a32)"/><rect x="1548.9" y="323.0" width="411.2" height="5.60" fill="url(#a33)"/><rect x="1548.9" y="328.0" width="418.1" height="5.60" fill="url(#a34)"/><rect x="1548.8" y="333.0" width="424.9" height="5.60" fill="url(#a35)"/><rect x="1548.8" y="338.0" width="431.7" height="5.60" fill="url(#a36)"/><rect x="1548.8" y="343.0" width="438.5" height="5.60" fill="url(#a37)"/><rect x="1548.8" y="348.0" width="445.3" height="5.60" fill="url(#a38)"/><rect x="1548.8" y="353.0" width="452.0" height="5.60" fill="url(#a39)"/><rect x="1549.0" y="358.0" width="458.5" height="5.60" fill="url(#a40)"/><rect x="1549.3" y="363.0" width="464.9" height="5.60" fill="url(#a41)"/><rect x="1549.6" y="368.0" width="471.4" height="5.60" fill="url(#a42)"/><rect x="1549.8" y="373.0" width="477.8" height="5.60" fill="url(#a43)"/><rect x="1550.1" y="378.0" width="484.2" height="5.60" fill="url(#a44)"/><rect x="1550.4" y="383.0" width="490.6" height="5.60" fill="url(#a45)"/><rect x="1550.6" y="388.0" width="497.1" height="5.60" fill="url(#a46)"/><rect x="1551.0" y="393.0" width="503.3" height="5.60" fill="url(#a47)"/><rect x="1551.5" y="398.0" width="509.5" height="5.60" fill="url(#a48)"/><rect x="1551.9" y="403.0" width="515.7" height="5.60" fill="url(#a49)"/><rect x="1552.4" y="408.0" width="521.9" height="5.60" fill="url(#a50)"/><rect x="1552.9" y="413.0" width="528.1" height="5.60" fill="url(#a51)"/><rect x="1553.3" y="418.0" width="534.2" height="5.60" fill="url(#a52)"/><rect x="1553.8" y="423.0" width="540.4" height="5.60" fill="url(#a53)"/><rect x="1554.3" y="428.0" width="546.4" height="5.60" fill="url(#a54)"/><rect x="1555.0" y="433.0" width="552.4" height="5.60" fill="url(#a55)"/><rect x="1555.6" y="438.0" width="558.3" height="5.60" fill="url(#a56)"/><rect x="1556.3" y="443.0" width="564.3" height="5.60" fill="url(#a57)"/><rect x="1556.9" y="448.0" width="570.3" height="5.60" fill="url(#a58)"/><rect x="1557.5" y="453.0" width="576.2" height="5.60" fill="url(#a59)"/><rect x="1558.2" y="458.0" width="582.2" height="5.60" fill="url(#a60)"/><rect x="1558.9" y="463.0" width="588.1" height="5.60" fill="url(#a61)"/><rect x="1559.7" y="468.0" width="593.9" height="5.60" fill="url(#a62)"/><rect x="1560.5" y="473.0" width="599.6" height="5.60" fill="url(#a63)"/><rect x="1561.3" y="478.0" width="605.4" height="5.60" fill="url(#a64)"/><rect x="1562.1" y="483.0" width="611.2" height="5.60" fill="url(#a65)"/><rect x="1562.9" y="488.0" width="617.0" height="5.60" fill="url(#a66)"/><rect x="1563.8" y="493.0" width="622.8" height="5.60" fill="url(#a67)"/><rect x="1564.6" y="498.0" width="628.6" height="5.60" fill="url(#a68)"/><rect x="1565.5" y="503.0" width="634.3" height="5.60" fill="url(#a69)"/><rect x="1566.4" y="508.0" width="640.0" height="5.60" fill="url(#a70)"/><rect x="1567.4" y="513.0" width="645.6" height="5.60" fill="url(#a71)"/><rect x="1568.3" y="518.0" width="651.3" height="5.60" fill="url(#a72)"/><rect x="1569.3" y="523.0" width="657.0" height="5.60" fill="url(#a73)"/><rect x="1570.2" y="528.0" width="662.6" height="5.60" fill="url(#a74)"/><rect x="1571.2" y="533.0" width="668.2" height="5.60" fill="url(#a75)"/><rect x="1572.2" y="538.0" width="673.8" height="5.60" fill="url(#a76)"/><rect x="1573.2" y="543.0" width="679.3" height="5.60" fill="url(#a77)"/><rect x="1574.3" y="548.0" width="684.8" height="5.60" fill="url(#a78)"/><rect x="1575.4" y="553.0" width="690.3" height="5.60" fill="url(#a79)"/><rect x="1576.5" y="558.0" width="695.8" height="5.60" fill="url(#a80)"/><rect x="1577.6" y="563.0" width="701.3" height="5.60" fill="url(#a81)"/><rect x="1578.7" y="568.0" width="706.8" height="5.60" fill="url(#a82)"/><rect x="1579.8" y="573.0" width="712.3" height="5.60" fill="url(#a83)"/><rect x="1581.0" y="578.0" width="717.7" height="5.60" fill="url(#a84)"/><rect x="1582.3" y="583.0" width="723.1" height="5.60" fill="url(#a85)"/><rect x="1583.5" y="588.0" width="728.5" height="5.60" fill="url(#a86)"/><rect x="1584.8" y="593.0" width="733.9" height="5.60" fill="url(#a87)"/><rect x="1586.0" y="598.0" width="739.3" height="5.60" fill="url(#a88)"/><rect x="1587.2" y="603.0" width="744.7" height="5.60" fill="url(#a89)"/><rect x="1588.5" y="608.0" width="750.1" height="5.60" fill="url(#a90)"/><rect x="1589.8" y="613.0" width="755.3" height="5.60" fill="url(#a91)"/><rect x="1591.2" y="618.0" width="760.5" height="5.60" fill="url(#a92)"/><rect x="1592.5" y="623.0" width="765.7" height="5.60" fill="url(#a93)"/><rect x="1593.9" y="628.0" width="771.0" height="5.60" fill="url(#a94)"/><rect x="1595.2" y="633.0" width="776.3" height="5.60" fill="url(#a95)"/><rect x="1596.6" y="638.0" width="781.5" height="5.60" fill="url(#a96)"/><rect x="1598.0" y="643.0" width="786.7" height="5.60" fill="url(#a97)"/><rect x="1599.5" y="648.0" width="791.8" height="5.60" fill="url(#a98)"/><rect x="1600.9" y="653.0" width="797.0" height="5.60" fill="url(#a99)"/><rect x="1602.4" y="658.0" width="802.1" height="5.60" fill="url(#a100)"/><rect x="1603.9" y="663.0" width="803.9" height="5.60" fill="url(#a101)"/><rect x="1605.4" y="668.0" width="796.7" height="5.60" fill="url(#a102)"/><rect x="1606.9" y="673.0" width="781.0" height="5.60" fill="url(#a103)"/><rect x="1608.5" y="678.0" width="765.2" height="5.60" fill="url(#a104)"/><rect x="1610.2" y="683.0" width="749.4" height="5.60" fill="url(#a105)"/><rect x="1611.8" y="688.0" width="733.6" height="5.60" fill="url(#a106)"/><rect x="1613.5" y="693.0" width="717.8" height="5.60" fill="url(#a107)"/><rect x="1615.1" y="698.0" width="702.0" height="5.60" fill="url(#a108)"/><rect x="1616.8" y="703.0" width="686.1" height="5.60" fill="url(#a109)"/><rect x="1618.6" y="708.0" width="670.1" height="5.60" fill="url(#a110)"/><rect x="1620.4" y="713.0" width="654.2" height="5.60" fill="url(#a111)"/><rect x="1622.2" y="718.0" width="638.2" height="5.60" fill="url(#a112)"/><rect x="1624.0" y="723.0" width="622.3" height="5.60" fill="url(#a113)"/><rect x="1625.9" y="728.0" width="606.2" height="5.60" fill="url(#a114)"/><rect x="1627.9" y="733.0" width="590.0" height="5.60" fill="url(#a115)"/><rect x="1629.9" y="738.0" width="573.9" height="5.60" fill="url(#a116)"/><rect x="1631.9" y="743.0" width="557.7" height="5.60" fill="url(#a117)"/><rect x="1633.9" y="748.0" width="541.5" height="5.60" fill="url(#a118)"/><rect x="1636.1" y="753.0" width="525.1" height="5.60" fill="url(#a119)"/><rect x="1638.4" y="758.0" width="508.7" height="5.60" fill="url(#a120)"/><rect x="1640.6" y="763.0" width="492.3" height="5.60" fill="url(#a121)"/><rect x="1642.8" y="768.0" width="475.9" height="5.60" fill="url(#a122)"/><rect x="1645.2" y="773.0" width="459.4" height="5.60" fill="url(#a123)"/><rect x="1647.6" y="778.0" width="442.9" height="5.60" fill="url(#a124)"/><rect x="1649.9" y="783.0" width="426.3" height="5.60" fill="url(#a125)"/><rect x="1652.3" y="788.0" width="409.8" height="5.60" fill="url(#a126)"/><rect x="1654.8" y="793.0" width="393.2" height="5.60" fill="url(#a127)"/><rect x="1657.2" y="798.0" width="376.5" height="5.60" fill="url(#a128)"/><rect x="1659.8" y="803.0" width="359.9" height="5.60" fill="url(#a129)"/><rect x="1662.4" y="808.0" width="343.0" height="5.60" fill="url(#a130)"/><rect x="1665.0" y="813.0" width="326.2" height="5.60" fill="url(#a131)"/><rect x="1667.8" y="818.0" width="309.3" height="5.60" fill="url(#a132)"/><rect x="1670.6" y="823.0" width="292.3" height="5.60" fill="url(#a133)"/><rect x="1673.5" y="828.0" width="275.3" height="5.60" fill="url(#a134)"/><rect x="1676.5" y="833.0" width="258.1" height="5.60" fill="url(#a135)"/><rect x="1679.6" y="838.0" width="240.8" height="5.60" fill="url(#a136)"/><rect x="1683.0" y="843.0" width="223.3" height="5.60" fill="url(#a137)"/><rect x="1686.5" y="848.0" width="205.7" height="5.60" fill="url(#a138)"/><rect x="1690.1" y="853.0" width="187.9" height="5.60" fill="url(#a139)"/><rect x="1693.9" y="858.0" width="169.9" height="5.60" fill="url(#a140)"/><rect x="1698.1" y="863.0" width="151.5" height="5.60" fill="url(#a141)"/><rect x="1702.6" y="868.0" width="132.8" height="5.60" fill="url(#a142)"/><rect x="1707.7" y="873.0" width="113.6" height="5.60" fill="url(#a143)"/><rect x="1713.6" y="878.0" width="93.5" height="5.60" fill="url(#a144)"/><rect x="1720.2" y="883.0" width="72.8" height="5.60" fill="url(#a145)"/><rect x="1727.5" y="888.0" width="51.3" height="5.60" fill="url(#a146)"/><rect x="1735.1" y="893.0" width="29.6" height="5.60" fill="url(#a147)"/><rect x="1742.5" y="898.0" width="8.0" height="5.60" fill="url(#a148)"/></g>
<g clip-path="url(#ct)"><rect x="1894.8" y="369.0" width="10.6" height="3.60" fill="url(#b1)"/><rect x="1893.7" y="372.0" width="16.7" height="3.60" fill="url(#b2)"/><rect x="1892.6" y="375.0" width="22.7" height="3.60" fill="url(#b3)"/><rect x="1891.5" y="378.0" width="28.8" height="3.60" fill="url(#b4)"/><rect x="1890.4" y="381.0" width="34.9" height="3.60" fill="url(#b5)"/><rect x="1889.3" y="384.0" width="40.9" height="3.60" fill="url(#b6)"/><rect x="1888.2" y="387.0" width="47.0" height="3.60" fill="url(#b7)"/><rect x="1887.1" y="390.0" width="53.1" height="3.60" fill="url(#b8)"/><rect x="1886.0" y="393.0" width="59.1" height="3.60" fill="url(#b9)"/><rect x="1884.9" y="396.0" width="65.2" height="3.60" fill="url(#b10)"/><rect x="1883.8" y="399.0" width="71.3" height="3.60" fill="url(#b11)"/><rect x="1882.7" y="402.0" width="77.3" height="3.60" fill="url(#b12)"/><rect x="1881.6" y="405.0" width="83.4" height="3.60" fill="url(#b13)"/><rect x="1880.5" y="408.0" width="89.5" height="3.60" fill="url(#b14)"/><rect x="1879.5" y="411.0" width="95.5" height="3.60" fill="url(#b15)"/><rect x="1878.4" y="414.0" width="101.6" height="3.60" fill="url(#b16)"/><rect x="1877.3" y="417.0" width="107.7" height="3.60" fill="url(#b17)"/><rect x="1876.2" y="420.0" width="113.7" height="3.60" fill="url(#b18)"/><rect x="1875.1" y="423.0" width="119.8" height="3.60" fill="url(#b19)"/><rect x="1874.0" y="426.0" width="125.9" height="3.60" fill="url(#b20)"/><rect x="1872.9" y="429.0" width="131.9" height="3.60" fill="url(#b21)"/><rect x="1871.8" y="432.0" width="138.0" height="3.60" fill="url(#b22)"/><rect x="1870.7" y="435.0" width="144.0" height="3.60" fill="url(#b23)"/><rect x="1869.6" y="438.0" width="150.1" height="3.60" fill="url(#b24)"/><rect x="1868.5" y="441.0" width="156.2" height="3.60" fill="url(#b25)"/><rect x="1867.4" y="444.0" width="162.2" height="3.60" fill="url(#b26)"/><rect x="1866.3" y="447.0" width="168.3" height="3.60" fill="url(#b27)"/><rect x="1865.2" y="450.0" width="174.4" height="3.60" fill="url(#b28)"/><rect x="1864.1" y="453.0" width="180.4" height="3.60" fill="url(#b29)"/><rect x="1863.0" y="456.0" width="186.5" height="3.60" fill="url(#b30)"/><rect x="1861.9" y="459.0" width="192.6" height="3.60" fill="url(#b31)"/><rect x="1860.8" y="462.0" width="198.6" height="3.60" fill="url(#b32)"/><rect x="1859.7" y="465.0" width="204.7" height="3.60" fill="url(#b33)"/><rect x="1858.6" y="468.0" width="210.8" height="3.60" fill="url(#b34)"/><rect x="1857.5" y="471.0" width="216.8" height="3.60" fill="url(#b35)"/><rect x="1856.4" y="474.0" width="222.9" height="3.60" fill="url(#b36)"/><rect x="1855.3" y="477.0" width="229.0" height="3.60" fill="url(#b37)"/><rect x="1854.2" y="480.0" width="235.0" height="3.60" fill="url(#b38)"/><rect x="1853.1" y="483.0" width="241.1" height="3.60" fill="url(#b39)"/><rect x="1852.0" y="486.0" width="247.2" height="3.60" fill="url(#b40)"/><rect x="1851.0" y="489.0" width="253.2" height="3.60" fill="url(#b41)"/><rect x="1849.9" y="492.0" width="259.3" height="3.60" fill="url(#b42)"/><rect x="1848.8" y="495.0" width="265.4" height="3.60" fill="url(#b43)"/><rect x="1847.7" y="498.0" width="271.4" height="3.60" fill="url(#b44)"/><rect x="1846.6" y="501.0" width="277.5" height="3.60" fill="url(#b45)"/><rect x="1845.5" y="504.0" width="283.6" height="3.60" fill="url(#b46)"/><rect x="1844.4" y="507.0" width="289.6" height="3.60" fill="url(#b47)"/><rect x="1843.3" y="510.0" width="295.7" height="3.60" fill="url(#b48)"/><rect x="1842.2" y="513.0" width="301.8" height="3.60" fill="url(#b49)"/><rect x="1841.1" y="516.0" width="307.8" height="3.60" fill="url(#b50)"/><rect x="1840.0" y="519.0" width="313.9" height="3.60" fill="url(#b51)"/><rect x="1838.9" y="522.0" width="319.9" height="3.60" fill="url(#b52)"/><rect x="1837.8" y="525.0" width="326.0" height="3.60" fill="url(#b53)"/><rect x="1836.7" y="528.0" width="332.1" height="3.60" fill="url(#b54)"/><rect x="1835.6" y="531.0" width="338.1" height="3.60" fill="url(#b55)"/><rect x="1834.5" y="534.0" width="344.2" height="3.60" fill="url(#b56)"/><rect x="1833.4" y="537.0" width="350.3" height="3.60" fill="url(#b57)"/><rect x="1832.3" y="540.0" width="356.3" height="3.60" fill="url(#b58)"/><rect x="1831.2" y="543.0" width="362.4" height="3.60" fill="url(#b59)"/><rect x="1830.1" y="546.0" width="368.5" height="3.60" fill="url(#b60)"/><rect x="1829.0" y="549.0" width="374.5" height="3.60" fill="url(#b61)"/><rect x="1827.9" y="552.0" width="380.6" height="3.60" fill="url(#b62)"/><rect x="1826.8" y="555.0" width="386.7" height="3.60" fill="url(#b63)"/><rect x="1825.7" y="558.0" width="392.7" height="3.60" fill="url(#b64)"/><rect x="1824.6" y="561.0" width="398.8" height="3.60" fill="url(#b65)"/><rect x="1823.5" y="564.0" width="404.9" height="3.60" fill="url(#b66)"/><rect x="1822.4" y="567.0" width="410.9" height="3.60" fill="url(#b67)"/><rect x="1821.4" y="570.0" width="417.0" height="3.60" fill="url(#b68)"/><rect x="1820.3" y="573.0" width="423.1" height="3.60" fill="url(#b69)"/><rect x="1819.2" y="576.0" width="429.1" height="3.60" fill="url(#b70)"/><rect x="1818.1" y="579.0" width="435.2" height="3.60" fill="url(#b71)"/><rect x="1817.0" y="582.0" width="441.3" height="3.60" fill="url(#b72)"/><rect x="1815.9" y="585.0" width="447.3" height="3.60" fill="url(#b73)"/><rect x="1814.8" y="588.0" width="453.4" height="3.60" fill="url(#b74)"/><rect x="1813.7" y="591.0" width="459.5" height="3.60" fill="url(#b75)"/><rect x="1812.6" y="594.0" width="465.5" height="3.60" fill="url(#b76)"/><rect x="1811.5" y="597.0" width="471.6" height="3.60" fill="url(#b77)"/><rect x="1810.4" y="600.0" width="477.6" height="3.60" fill="url(#b78)"/><rect x="1809.3" y="603.0" width="483.7" height="3.60" fill="url(#b79)"/><rect x="1808.2" y="606.0" width="489.8" height="3.60" fill="url(#b80)"/><rect x="1807.1" y="609.0" width="491.7" height="3.60" fill="url(#b81)"/><rect x="1806.0" y="612.0" width="489.3" height="3.60" fill="url(#b82)"/><rect x="1804.9" y="615.0" width="483.2" height="3.60" fill="url(#b83)"/><rect x="1803.8" y="618.0" width="477.1" height="3.60" fill="url(#b84)"/><rect x="1802.7" y="621.0" width="471.1" height="3.60" fill="url(#b85)"/><rect x="1801.6" y="624.0" width="465.0" height="3.60" fill="url(#b86)"/><rect x="1800.5" y="627.0" width="458.9" height="3.60" fill="url(#b87)"/><rect x="1799.4" y="630.0" width="452.9" height="3.60" fill="url(#b88)"/><rect x="1798.3" y="633.0" width="446.8" height="3.60" fill="url(#b89)"/><rect x="1797.2" y="636.0" width="440.7" height="3.60" fill="url(#b90)"/><rect x="1796.1" y="639.0" width="434.7" height="3.60" fill="url(#b91)"/><rect x="1795.0" y="642.0" width="428.6" height="3.60" fill="url(#b92)"/><rect x="1793.9" y="645.0" width="422.5" height="3.60" fill="url(#b93)"/><rect x="1792.9" y="648.0" width="416.5" height="3.60" fill="url(#b94)"/><rect x="1791.8" y="651.0" width="410.4" height="3.60" fill="url(#b95)"/><rect x="1790.7" y="654.0" width="404.3" height="3.60" fill="url(#b96)"/><rect x="1789.6" y="657.0" width="398.3" height="3.60" fill="url(#b97)"/><rect x="1788.5" y="660.0" width="392.2" height="3.60" fill="url(#b98)"/><rect x="1787.4" y="663.0" width="386.2" height="3.60" fill="url(#b99)"/><rect x="1786.3" y="666.0" width="380.1" height="3.60" fill="url(#b100)"/><rect x="1785.2" y="669.0" width="374.0" height="3.60" fill="url(#b101)"/><rect x="1784.1" y="672.0" width="368.0" height="3.60" fill="url(#b102)"/><rect x="1783.0" y="675.0" width="361.9" height="3.60" fill="url(#b103)"/><rect x="1781.9" y="678.0" width="355.8" height="3.60" fill="url(#b104)"/><rect x="1780.8" y="681.0" width="349.8" height="3.60" fill="url(#b105)"/><rect x="1779.7" y="684.0" width="343.7" height="3.60" fill="url(#b106)"/><rect x="1778.6" y="687.0" width="337.6" height="3.60" fill="url(#b107)"/><rect x="1777.5" y="690.0" width="331.6" height="3.60" fill="url(#b108)"/><rect x="1776.4" y="693.0" width="325.5" height="3.60" fill="url(#b109)"/><rect x="1775.3" y="696.0" width="319.4" height="3.60" fill="url(#b110)"/><rect x="1774.2" y="699.0" width="313.4" height="3.60" fill="url(#b111)"/><rect x="1773.1" y="702.0" width="307.3" height="3.60" fill="url(#b112)"/><rect x="1772.0" y="705.0" width="301.2" height="3.60" fill="url(#b113)"/><rect x="1770.9" y="708.0" width="295.2" height="3.60" fill="url(#b114)"/><rect x="1769.8" y="711.0" width="289.1" height="3.60" fill="url(#b115)"/><rect x="1768.7" y="714.0" width="283.0" height="3.60" fill="url(#b116)"/><rect x="1767.6" y="717.0" width="277.0" height="3.60" fill="url(#b117)"/><rect x="1766.5" y="720.0" width="270.9" height="3.60" fill="url(#b118)"/><rect x="1765.4" y="723.0" width="264.8" height="3.60" fill="url(#b119)"/><rect x="1764.4" y="726.0" width="258.8" height="3.60" fill="url(#b120)"/><rect x="1763.3" y="729.0" width="252.7" height="3.60" fill="url(#b121)"/><rect x="1762.2" y="732.0" width="246.6" height="3.60" fill="url(#b122)"/><rect x="1761.1" y="735.0" width="240.6" height="3.60" fill="url(#b123)"/><rect x="1760.0" y="738.0" width="234.5" height="3.60" fill="url(#b124)"/><rect x="1758.9" y="741.0" width="228.4" height="3.60" fill="url(#b125)"/><rect x="1757.8" y="744.0" width="222.4" height="3.60" fill="url(#b126)"/><rect x="1756.7" y="747.0" width="216.3" height="3.60" fill="url(#b127)"/><rect x="1755.6" y="750.0" width="210.3" height="3.60" fill="url(#b128)"/><rect x="1754.5" y="753.0" width="204.2" height="3.60" fill="url(#b129)"/><rect x="1753.4" y="756.0" width="198.1" height="3.60" fill="url(#b130)"/><rect x="1752.3" y="759.0" width="192.1" height="3.60" fill="url(#b131)"/><rect x="1751.2" y="762.0" width="186.0" height="3.60" fill="url(#b132)"/><rect x="1750.1" y="765.0" width="179.9" height="3.60" fill="url(#b133)"/><rect x="1749.0" y="768.0" width="173.9" height="3.60" fill="url(#b134)"/><rect x="1747.9" y="771.0" width="167.8" height="3.60" fill="url(#b135)"/><rect x="1746.8" y="774.0" width="161.7" height="3.60" fill="url(#b136)"/><rect x="1745.7" y="777.0" width="155.7" height="3.60" fill="url(#b137)"/><rect x="1744.6" y="780.0" width="149.6" height="3.60" fill="url(#b138)"/><rect x="1743.5" y="783.0" width="143.5" height="3.60" fill="url(#b139)"/><rect x="1742.4" y="786.0" width="137.5" height="3.60" fill="url(#b140)"/><rect x="1741.3" y="789.0" width="131.4" height="3.60" fill="url(#b141)"/><rect x="1740.2" y="792.0" width="125.3" height="3.60" fill="url(#b142)"/><rect x="1739.1" y="795.0" width="119.3" height="3.60" fill="url(#b143)"/><rect x="1738.0" y="798.0" width="113.2" height="3.60" fill="url(#b144)"/><rect x="1736.9" y="801.0" width="107.1" height="3.60" fill="url(#b145)"/><rect x="1735.9" y="804.0" width="101.1" height="3.60" fill="url(#b146)"/><rect x="1734.8" y="807.0" width="95.0" height="3.60" fill="url(#b147)"/><rect x="1733.7" y="810.0" width="88.9" height="3.60" fill="url(#b148)"/><rect x="1732.6" y="813.0" width="82.9" height="3.60" fill="url(#b149)"/><rect x="1731.5" y="816.0" width="76.8" height="3.60" fill="url(#b150)"/><rect x="1730.4" y="819.0" width="70.7" height="3.60" fill="url(#b151)"/><rect x="1729.3" y="822.0" width="64.7" height="3.60" fill="url(#b152)"/><rect x="1728.2" y="825.0" width="58.6" height="3.60" fill="url(#b153)"/><rect x="1727.1" y="828.0" width="52.6" height="3.60" fill="url(#b154)"/><rect x="1726.0" y="831.0" width="46.5" height="3.60" fill="url(#b155)"/><rect x="1724.9" y="834.0" width="40.4" height="3.60" fill="url(#b156)"/><rect x="1723.8" y="837.0" width="34.4" height="3.60" fill="url(#b157)"/><rect x="1722.7" y="840.0" width="28.3" height="3.60" fill="url(#b158)"/><rect x="1721.6" y="843.0" width="22.2" height="3.60" fill="url(#b159)"/><rect x="1720.5" y="846.0" width="16.2" height="3.60" fill="url(#b160)"/><rect x="1720.5" y="849.0" width="9.0" height="3.60" fill="url(#b161)"/></g>
<path d="M1547 155H2532V904" fill="none" stroke="#a2a2a2" stroke-width="2"/>
<path d="M1547 154V912.5M1538 903.8H2533" fill="none" stroke="#a2a2a2" stroke-width="2.3"/>
<line x1="1664" y1="904" x2="1664" y2="912.5" stroke="#d0d0d0" stroke-width="2" />
<line x1="1538" y1="814.7" x2="1547" y2="814.7" stroke="#d0d0d0" stroke-width="2" />
<text x="1648.45" y="936" font-size="21" fill="#dedede" textLength="31.32" lengthAdjust="spacingAndGlyphs" >0,1</text>
<text x="1507.01" y="823.9" font-size="21" fill="#dedede" textLength="30.58" lengthAdjust="spacingAndGlyphs" >0,1</text>
<line x1="1781.1" y1="904" x2="1781.1" y2="912.5" stroke="#d0d0d0" stroke-width="2" />
<line x1="1538" y1="725.7" x2="1547" y2="725.7" stroke="#d0d0d0" stroke-width="2" />
<text x="1765.55" y="936" font-size="21" fill="#dedede" textLength="31.32" lengthAdjust="spacingAndGlyphs" >0,2</text>
<text x="1507.01" y="734.9" font-size="21" fill="#dedede" textLength="30.58" lengthAdjust="spacingAndGlyphs" >0,2</text>
<line x1="1898.2" y1="904" x2="1898.2" y2="912.5" stroke="#d0d0d0" stroke-width="2" />
<line x1="1538" y1="636.7" x2="1547" y2="636.7" stroke="#d0d0d0" stroke-width="2" />
<text x="1882.65" y="936" font-size="21" fill="#dedede" textLength="31.32" lengthAdjust="spacingAndGlyphs" >0,3</text>
<text x="1507.01" y="645.9" font-size="21" fill="#dedede" textLength="30.58" lengthAdjust="spacingAndGlyphs" >0,3</text>
<line x1="2015.3" y1="904" x2="2015.3" y2="912.5" stroke="#d0d0d0" stroke-width="2" />
<line x1="1538" y1="547.7" x2="1547" y2="547.7" stroke="#d0d0d0" stroke-width="2" />
<text x="1999.75" y="936" font-size="21" fill="#dedede" textLength="31.04" lengthAdjust="spacingAndGlyphs" >0,4</text>
<text x="1507.02" y="556.9" font-size="21" fill="#dedede" textLength="30.30" lengthAdjust="spacingAndGlyphs" >0,4</text>
<line x1="2132.4" y1="904" x2="2132.4" y2="912.5" stroke="#d0d0d0" stroke-width="2" />
<line x1="1538" y1="458.7" x2="1547" y2="458.7" stroke="#d0d0d0" stroke-width="2" />
<text x="2116.85" y="936" font-size="21" fill="#dedede" textLength="31.32" lengthAdjust="spacingAndGlyphs" >0,5</text>
<text x="1507.01" y="467.9" font-size="21" fill="#dedede" textLength="30.58" lengthAdjust="spacingAndGlyphs" >0,5</text>
<line x1="2249.5" y1="904" x2="2249.5" y2="912.5" stroke="#d0d0d0" stroke-width="2" />
<line x1="1538" y1="369.7" x2="1547" y2="369.7" stroke="#d0d0d0" stroke-width="2" />
<text x="2233.95" y="936" font-size="21" fill="#dedede" textLength="31.32" lengthAdjust="spacingAndGlyphs" >0,6</text>
<text x="1507.01" y="378.9" font-size="21" fill="#dedede" textLength="30.58" lengthAdjust="spacingAndGlyphs" >0,6</text>
<line x1="2366.6" y1="904" x2="2366.6" y2="912.5" stroke="#d0d0d0" stroke-width="2" />
<line x1="1538" y1="280.7" x2="1547" y2="280.7" stroke="#d0d0d0" stroke-width="2" />
<text x="2351.05" y="936" font-size="21" fill="#dedede" textLength="31.32" lengthAdjust="spacingAndGlyphs" >0,7</text>
<text x="1507.01" y="289.9" font-size="21" fill="#dedede" textLength="30.58" lengthAdjust="spacingAndGlyphs" >0,7</text>
<line x1="2483.7" y1="904" x2="2483.7" y2="912.5" stroke="#d0d0d0" stroke-width="2" />
<line x1="1538" y1="191.7" x2="1547" y2="191.7" stroke="#d0d0d0" stroke-width="2" />
<text x="2468.15" y="936" font-size="21" fill="#dedede" textLength="31.32" lengthAdjust="spacingAndGlyphs" >0,8</text>
<text x="1507.01" y="200.9" font-size="21" fill="#dedede" textLength="30.58" lengthAdjust="spacingAndGlyphs" >0,8</text>
<text x="1539.35" y="936" font-size="21" fill="#dedede" textLength="13.22" lengthAdjust="spacingAndGlyphs" >0</text>
<text x="1524.80" y="912.6" font-size="21" fill="#dedede" textLength="12.53" lengthAdjust="spacingAndGlyphs" >0</text>
<text x="1961.32" y="146.6" font-size="21.8" fill="#dedede" textLength="115.91" lengthAdjust="spacingAndGlyphs" >CIE 1931 xy</text>
<g fill-opacity=".26" stroke="#fff" stroke-opacity=".84" stroke-width="2.2"><rect x="1886.2" y="357.7" width="20.6" height="20.6" fill="#08be08" fill-opacity=".12"/><rect x="1890.9" y="409.9" width="20.6" height="20.6" fill="#58be58"/><rect x="1893.1" y="456.9" width="20.6" height="20.6" fill="#73be73"/><rect x="1897.1" y="503.2" width="20.6" height="20.6" fill="#8abe8a"/><rect x="1899.1" y="550.0" width="20.6" height="20.6" fill="#a0bea0"/><rect x="2027.1" y="442.9" width="20.6" height="20.6" fill="#c8c808" fill-opacity=".12"/><rect x="2000.4" y="475.6" width="20.6" height="20.6" fill="#c8c858"/><rect x="1977.6" y="504.7" width="20.6" height="20.6" fill="#c8c873"/><rect x="1953.0" y="533.4" width="20.6" height="20.6" fill="#c8c88a"/><rect x="1927.7" y="566.8" width="20.6" height="20.6" fill="#c8c8a0"/><rect x="1799.7" y="599.8" width="20.6" height="20.6" fill="#10b4b4" fill-opacity=".12"/><rect x="1820.4" y="599.8" width="20.6" height="20.6" fill="#58bebe"/><rect x="1840.9" y="599.8" width="20.6" height="20.6" fill="#73bebe"/><rect x="1861.1" y="599.8" width="20.6" height="20.6" fill="#8abebe"/><rect x="1881.2" y="599.8" width="20.6" height="20.6" fill="#a0bebe"/><rect x="2285.8" y="597.9" width="20.6" height="20.6" fill="#c80808" fill-opacity=".12"/><rect x="2201.1" y="597.9" width="20.6" height="20.6" fill="#c85858"/><rect x="2126.2" y="597.9" width="20.6" height="20.6" fill="#c87373"/><rect x="2056.2" y="597.9" width="20.6" height="20.6" fill="#c88a8a"/><rect x="1977.6" y="598.1" width="20.6" height="20.6" fill="#c8a0a0"/><rect x="1710.7" y="837.7" width="20.6" height="20.6" fill="#0808be" fill-opacity=".12"/><rect x="1752.3" y="786.3" width="20.6" height="20.6" fill="#5858be"/><rect x="1789.2" y="740.6" width="20.6" height="20.6" fill="#7373be"/><rect x="1826.3" y="695.2" width="20.6" height="20.6" fill="#8a8abe"/><rect x="1863.6" y="647.7" width="20.6" height="20.6" fill="#a0a0be"/><rect x="1911.4" y="755.1" width="20.6" height="20.6" fill="#be08be" fill-opacity=".12"/><rect x="1909.1" y="722.3" width="20.6" height="20.6" fill="#be58be"/><rect x="1907.1" y="691.1" width="20.6" height="20.6" fill="#be73be"/><rect x="1907.1" y="664.1" width="20.6" height="20.6" fill="#be8abe"/><rect x="1905.0" y="631.1" width="20.6" height="20.6" fill="#bea0be"/></g>
<rect x="1903.2" y="599.8" width="20.6" height="20.6" fill="#fff" fill-opacity=".62" stroke="#000" stroke-width="2.4"/>
<g stroke="#000" stroke-width="1.7"><circle cx="1907.4" cy="363.7" r="6" fill="#08be08"/><circle cx="1909.4" cy="418.0" r="6" fill="#58be58"/><circle cx="1909.4" cy="463.3" r="6" fill="#73be73"/><circle cx="1911.3" cy="511.0" r="6" fill="#8abe8a"/><circle cx="1911.3" cy="558.8" r="6" fill="#a0bea0"/><circle cx="2041.5" cy="444.5" r="6" fill="#c8c808"/><circle cx="2012.6" cy="480.1" r="6" fill="#c8c858"/><circle cx="1990.0" cy="510.9" r="6" fill="#c8c873"/><circle cx="1965.2" cy="542.0" r="6" fill="#c8c88a"/><circle cx="1938.0" cy="575.0" r="6" fill="#c8c8a0"/><circle cx="1812.2" cy="610.1" r="6" fill="#10b4b4"/><circle cx="1832.4" cy="610.1" r="6" fill="#58bebe"/><circle cx="1851.6" cy="610.1" r="6" fill="#73bebe"/><circle cx="1871.7" cy="609.5" r="6" fill="#8abebe"/><circle cx="1890.8" cy="608.4" r="6" fill="#a0bebe"/><circle cx="2295.8" cy="601.9" r="6" fill="#c80808"/><circle cx="2209.3" cy="604.0" r="6" fill="#c85858"/><circle cx="2132.7" cy="604.0" r="6" fill="#c87373"/><circle cx="2062.2" cy="608.5" r="6" fill="#c88a8a"/><circle cx="1985.7" cy="608.4" r="6" fill="#c8a0a0"/><circle cx="1716.6" cy="857.0" r="6" fill="#0808be"/><circle cx="1760.3" cy="800.5" r="6" fill="#5858be"/><circle cx="1795.4" cy="755.0" r="6" fill="#7373be"/><circle cx="1834.9" cy="707.6" r="6" fill="#8a8abe"/><circle cx="1873.9" cy="660.2" r="6" fill="#a0a0be"/><circle cx="1913.1" cy="769.7" r="6" fill="#be08be"/><circle cx="1913.1" cy="734.3" r="6" fill="#be58be"/><circle cx="1913.1" cy="701.4" r="6" fill="#be73be"/><circle cx="1913.1" cy="674.4" r="6" fill="#be8abe"/><circle cx="1913.1" cy="641.4" r="6" fill="#bea0be"/><circle cx="1913.5" cy="608.4" r="6" fill="#fff"/></g>
<rect x="2186.5" y="162.7" width="339" height="286.5" fill="#2e2e2e"/>
<defs><clipPath id="ci"><rect x="2191.5" y="167.7" width="329" height="276.3"/></clipPath><clipPath id="cit"><polygon points="3830.0,1288.8 1556.4,-227.5 553.4,2805.1"/></clipPath><linearGradient id="c0" gradientUnits="userSpaceOnUse" x1="2191.5" x2="2520.5" y1="0" y2="0"><stop offset="0" stop-color="#6f9e00"/><stop offset="0.782" stop-color="#9e9e00"/><stop offset="1" stop-color="#9e9100"/></linearGradient><linearGradient id="c1" gradientUnits="userSpaceOnUse" x1="2191.5" x2="2520.5" y1="0" y2="0"><stop offset="0" stop-color="#6f9e00"/><stop offset="0.773" stop-color="#9e9e00"/><stop offset="1" stop-color="#9e9100"/></linearGradient><linearGradient id="c2" gradientUnits="userSpaceOnUse" x1="2191.5" x2="2520.5" y1="0" y2="0"><stop offset="0" stop-color="#709e00"/><stop offset="0.764" stop-color="#9e9e00"/><stop offset="1" stop-color="#9e9000"/></linearGradient><linearGradient id="c3" gradientUnits="userSpaceOnUse" x1="2191.5" x2="2520.5" y1="0" y2="0"><stop offset="0" stop-color="#719e00"/><stop offset="0.745" stop-color="#9e9e00"/><stop offset="1" stop-color="#9e8f00"/></linearGradient><linearGradient id="c4" gradientUnits="userSpaceOnUse" x1="2191.5" x2="2520.5" y1="0" y2="0"><stop offset="0" stop-color="#719e00"/><stop offset="0.736" stop-color="#9e9e00"/><stop offset="1" stop-color="#9e8e00"/></linearGradient><linearGradient id="c5" gradientUnits="userSpaceOnUse" x1="2191.5" x2="2520.5" y1="0" y2="0"><stop offset="0" stop-color="#729e00"/><stop offset="0.718" stop-color="#9e9e00"/><stop offset="1" stop-color="#9e8e00"/></linearGradient><linearGradient id="c6" gradientUnits="userSpaceOnUse" x1="2191.5" x2="2520.5" y1="0" y2="0"><stop offset="0" stop-color="#739e01"/><stop offset="0.709" stop-color="#9e9e00"/><stop offset="1" stop-color="#9e8d00"/></linearGradient><linearGradient id="c7" gradientUnits="userSpaceOnUse" x1="2191.5" x2="2520.5" y1="0" y2="0"><stop offset="0" stop-color="#739e01"/><stop offset="0.691" stop-color="#9e9e00"/><stop offset="1" stop-color="#9e8c00"/></linearGradient><linearGradient id="c8" gradientUnits="userSpaceOnUse" x1="2191.5" x2="2520.5" y1="0" y2="0"><stop offset="0" stop-color="#749e01"/><stop offset="0.682" stop-color="#9e9e00"/><stop offset="1" stop-color="#9e8b00"/></linearGradient><linearGradient id="c9" gradientUnits="userSpaceOnUse" x1="2191.5" x2="2520.5" y1="0" y2="0"><stop offset="0" stop-color="#759e02"/><stop offset="0.673" stop-color="#9e9e00"/><stop offset="1" stop-color="#9e8b00"/></linearGradient><linearGradient id="c10" gradientUnits="userSpaceOnUse" x1="2191.5" x2="2520.5" y1="0" y2="0"><stop offset="0" stop-color="#759e02"/><stop offset="0.655" stop-color="#9e9e00"/><stop offset="1" stop-color="#9e8a00"/></linearGradient><linearGradient id="c11" gradientUnits="userSpaceOnUse" x1="2191.5" x2="2520.5" y1="0" y2="0"><stop offset="0" stop-color="#769e02"/><stop offset="0.645" stop-color="#9e9e00"/><stop offset="1" stop-color="#9e8900"/></linearGradient><linearGradient id="c12" gradientUnits="userSpaceOnUse" x1="2191.5" x2="2520.5" y1="0" y2="0"><stop offset="0" stop-color="#779e03"/><stop offset="0.627" stop-color="#9e9e00"/><stop offset="1" stop-color="#9e8800"/></linearGradient><linearGradient id="c13" gradientUnits="userSpaceOnUse" x1="2191.5" x2="2520.5" y1="0" y2="0"><stop offset="0" stop-color="#779e03"/><stop offset="0.618" stop-color="#9e9e00"/><stop offset="1" stop-color="#9e8800"/></linearGradient><linearGradient id="c14" gradientUnits="userSpaceOnUse" x1="2191.5" x2="2520.5" y1="0" y2="0"><stop offset="0" stop-color="#789e04"/><stop offset="0.6" stop-color="#9e9e00"/><stop offset="1" stop-color="#9e8700"/></linearGradient><linearGradient id="c15" gradientUnits="userSpaceOnUse" x1="2191.5" x2="2520.5" y1="0" y2="0"><stop offset="0" stop-color="#799e04"/><stop offset="0.591" stop-color="#9e9e00"/><stop offset="1" stop-color="#9e8600"/></linearGradient><linearGradient id="c16" gradientUnits="userSpaceOnUse" x1="2191.5" x2="2520.5" y1="0" y2="0"><stop offset="0" stop-color="#799e04"/><stop offset="0.582" stop-color="#9e9e00"/><stop offset="1" stop-color="#9e8500"/></linearGradient><linearGradient id="c17" gradientUnits="userSpaceOnUse" x1="2191.5" x2="2520.5" y1="0" y2="0"><stop offset="0" stop-color="#7a9e05"/><stop offset="0.564" stop-color="#9e9e00"/><stop offset="1" stop-color="#9e8500"/></linearGradient><linearGradient id="c18" gradientUnits="userSpaceOnUse" x1="2191.5" x2="2520.5" y1="0" y2="0"><stop offset="0" stop-color="#7b9e05"/><stop offset="0.555" stop-color="#9e9e00"/><stop offset="1" stop-color="#9e8400"/></linearGradient><linearGradient id="c19" gradientUnits="userSpaceOnUse" x1="2191.5" x2="2520.5" y1="0" y2="0"><stop offset="0" stop-color="#7c9e05"/><stop offset="0.536" stop-color="#9e9e00"/><stop offset="1" stop-color="#9e8300"/></linearGradient><linearGradient id="c20" gradientUnits="userSpaceOnUse" x1="2191.5" x2="2520.5" y1="0" y2="0"><stop offset="0" stop-color="#7c9e06"/><stop offset="0.527" stop-color="#9e9e00"/><stop offset="1" stop-color="#9e8200"/></linearGradient><linearGradient id="c21" gradientUnits="userSpaceOnUse" x1="2191.5" x2="2520.5" y1="0" y2="0"><stop offset="0" stop-color="#7d9e06"/><stop offset="0.509" stop-color="#9e9e00"/><stop offset="1" stop-color="#9e8200"/></linearGradient><linearGradient id="c22" gradientUnits="userSpaceOnUse" x1="2191.5" x2="2520.5" y1="0" y2="0"><stop offset="0" stop-color="#7e9e07"/><stop offset="0.5" stop-color="#9e9e00"/><stop offset="1" stop-color="#9e8100"/></linearGradient><linearGradient id="c23" gradientUnits="userSpaceOnUse" x1="2191.5" x2="2520.5" y1="0" y2="0"><stop offset="0" stop-color="#7e9e07"/><stop offset="0.491" stop-color="#9e9e00"/><stop offset="1" stop-color="#9e8000"/></linearGradient><linearGradient id="c24" gradientUnits="userSpaceOnUse" x1="2191.5" x2="2520.5" y1="0" y2="0"><stop offset="0" stop-color="#7f9e07"/><stop offset="0.473" stop-color="#9e9e01"/><stop offset="1" stop-color="#9e8000"/></linearGradient><linearGradient id="c25" gradientUnits="userSpaceOnUse" x1="2191.5" x2="2520.5" y1="0" y2="0"><stop offset="0" stop-color="#809e08"/><stop offset="0.464" stop-color="#9e9e02"/><stop offset="1" stop-color="#9e7f00"/></linearGradient><linearGradient id="c26" gradientUnits="userSpaceOnUse" x1="2191.5" x2="2520.5" y1="0" y2="0"><stop offset="0" stop-color="#819e08"/><stop offset="0.445" stop-color="#9e9e02"/><stop offset="1" stop-color="#9e7e00"/></linearGradient><linearGradient id="c27" gradientUnits="userSpaceOnUse" x1="2191.5" x2="2520.5" y1="0" y2="0"><stop offset="0" stop-color="#819e09"/><stop offset="0.436" stop-color="#9e9e03"/><stop offset="1" stop-color="#9e7e00"/></linearGradient><linearGradient id="c28" gradientUnits="userSpaceOnUse" x1="2191.5" x2="2520.5" y1="0" y2="0"><stop offset="0" stop-color="#829e09"/><stop offset="0.418" stop-color="#9e9e03"/><stop offset="1" stop-color="#9e7d00"/></linearGradient><linearGradient id="c29" gradientUnits="userSpaceOnUse" x1="2191.5" x2="2520.5" y1="0" y2="0"><stop offset="0" stop-color="#839e09"/><stop offset="0.409" stop-color="#9e9e04"/><stop offset="1" stop-color="#9e7c00"/></linearGradient><linearGradient id="c30" gradientUnits="userSpaceOnUse" x1="2191.5" x2="2520.5" y1="0" y2="0"><stop offset="0" stop-color="#849e0a"/><stop offset="0.391" stop-color="#9e9e05"/><stop offset="1" stop-color="#9e7b00"/></linearGradient><linearGradient id="c31" gradientUnits="userSpaceOnUse" x1="2191.5" x2="2520.5" y1="0" y2="0"><stop offset="0" stop-color="#859e0a"/><stop offset="0.382" stop-color="#9e9e05"/><stop offset="1" stop-color="#9e7b00"/></linearGradient><linearGradient id="c32" gradientUnits="userSpaceOnUse" x1="2191.5" x2="2520.5" y1="0" y2="0"><stop offset="0" stop-color="#859e0b"/><stop offset="0.373" stop-color="#9e9e06"/><stop offset="1" stop-color="#9e7a00"/></linearGradient><linearGradient id="c33" gradientUnits="userSpaceOnUse" x1="2191.5" x2="2520.5" y1="0" y2="0"><stop offset="0" stop-color="#869e0b"/><stop offset="0.355" stop-color="#9e9e06"/><stop offset="1" stop-color="#9e7900"/></linearGradient><linearGradient id="c34" gradientUnits="userSpaceOnUse" x1="2191.5" x2="2520.5" y1="0" y2="0"><stop offset="0" stop-color="#879e0c"/><stop offset="0.345" stop-color="#9e9e07"/><stop offset="1" stop-color="#9e7900"/></linearGradient><linearGradient id="c35" gradientUnits="userSpaceOnUse" x1="2191.5" x2="2520.5" y1="0" y2="0"><stop offset="0" stop-color="#889e0c"/><stop offset="0.327" stop-color="#9e9e08"/><stop offset="1" stop-color="#9e7800"/></linearGradient><linearGradient id="c36" gradientUnits="userSpaceOnUse" x1="2191.5" x2="2520.5" y1="0" y2="0"><stop offset="0" stop-color="#899e0c"/><stop offset="0.318" stop-color="#9e9e08"/><stop offset="1" stop-color="#9e7700"/></linearGradient><linearGradient id="c37" gradientUnits="userSpaceOnUse" x1="2191.5" x2="2520.5" y1="0" y2="0"><stop offset="0" stop-color="#899e0d"/><stop offset="0.3" stop-color="#9e9e09"/><stop offset="1" stop-color="#9e7700"/></linearGradient><linearGradient id="c38" gradientUnits="userSpaceOnUse" x1="2191.5" x2="2520.5" y1="0" y2="0"><stop offset="0" stop-color="#8a9e0d"/><stop offset="0.291" stop-color="#9e9e09"/><stop offset="1" stop-color="#9e7600"/></linearGradient><linearGradient id="c39" gradientUnits="userSpaceOnUse" x1="2191.5" x2="2520.5" y1="0" y2="0"><stop offset="0" stop-color="#8b9e0e"/><stop offset="0.282" stop-color="#9e9e0a"/><stop offset="1" stop-color="#9e7500"/></linearGradient><linearGradient id="c40" gradientUnits="userSpaceOnUse" x1="2191.5" x2="2520.5" y1="0" y2="0"><stop offset="0" stop-color="#8c9e0e"/><stop offset="0.264" stop-color="#9e9e0b"/><stop offset="1" stop-color="#9e7500"/></linearGradient><linearGradient id="c41" gradientUnits="userSpaceOnUse" x1="2191.5" x2="2520.5" y1="0" y2="0"><stop offset="0" stop-color="#8d9e0f"/><stop offset="0.255" stop-color="#9e9e0b"/><stop offset="1" stop-color="#9e7400"/></linearGradient><linearGradient id="c42" gradientUnits="userSpaceOnUse" x1="2191.5" x2="2520.5" y1="0" y2="0"><stop offset="0" stop-color="#8e9e0f"/><stop offset="0.236" stop-color="#9e9e0c"/><stop offset="1" stop-color="#9e7300"/></linearGradient><linearGradient id="c43" gradientUnits="userSpaceOnUse" x1="2191.5" x2="2520.5" y1="0" y2="0"><stop offset="0" stop-color="#8e9e10"/><stop offset="0.227" stop-color="#9e9e0d"/><stop offset="1" stop-color="#9e7301"/></linearGradient><linearGradient id="c44" gradientUnits="userSpaceOnUse" x1="2191.5" x2="2520.5" y1="0" y2="0"><stop offset="0" stop-color="#8f9e10"/><stop offset="0.209" stop-color="#9e9e0d"/><stop offset="1" stop-color="#9e7201"/></linearGradient><linearGradient id="c45" gradientUnits="userSpaceOnUse" x1="2191.5" x2="2520.5" y1="0" y2="0"><stop offset="0" stop-color="#909e11"/><stop offset="0.2" stop-color="#9e9e0e"/><stop offset="1" stop-color="#9e7101"/></linearGradient><linearGradient id="c46" gradientUnits="userSpaceOnUse" x1="2191.5" x2="2520.5" y1="0" y2="0"><stop offset="0" stop-color="#919e11"/><stop offset="0.191" stop-color="#9e9e0e"/><stop offset="1" stop-color="#9e7102"/></linearGradient><linearGradient id="d0" gradientUnits="userSpaceOnUse" x1="2191.5" x2="2520.5" y1="0" y2="0"><stop offset="0" stop-color="#b2ff00"/><stop offset="0.782" stop-color="#feff00"/><stop offset="1" stop-color="#ffea00"/></linearGradient><linearGradient id="d1" gradientUnits="userSpaceOnUse" x1="2191.5" x2="2520.5" y1="0" y2="0"><stop offset="0" stop-color="#b3ff00"/><stop offset="0.773" stop-color="#ff0"/><stop offset="1" stop-color="#ffe900"/></linearGradient><linearGradient id="d2" gradientUnits="userSpaceOnUse" x1="2191.5" x2="2520.5" y1="0" y2="0"><stop offset="0" stop-color="#b4ff00"/><stop offset="0.764" stop-color="#ff0"/><stop offset="1" stop-color="#ffe800"/></linearGradient><linearGradient id="d3" gradientUnits="userSpaceOnUse" x1="2191.5" x2="2520.5" y1="0" y2="0"><stop offset="0" stop-color="#b5ff00"/><stop offset="0.745" stop-color="#ff0"/><stop offset="1" stop-color="#ffe700"/></linearGradient><linearGradient id="d4" gradientUnits="userSpaceOnUse" x1="2191.5" x2="2520.5" y1="0" y2="0"><stop offset="0" stop-color="#b7ff00"/><stop offset="0.736" stop-color="#ff0"/><stop offset="1" stop-color="#ffe500"/></linearGradient><linearGradient id="d5" gradientUnits="userSpaceOnUse" x1="2191.5" x2="2520.5" y1="0" y2="0"><stop offset="0" stop-color="#b8ff00"/><stop offset="0.718" stop-color="#ff0"/><stop offset="1" stop-color="#ffe400"/></linearGradient><linearGradient id="d6" gradientUnits="userSpaceOnUse" x1="2191.5" x2="2520.5" y1="0" y2="0"><stop offset="0" stop-color="#b9ff01"/><stop offset="0.709" stop-color="#ff0"/><stop offset="1" stop-color="#ffe300"/></linearGradient><linearGradient id="d7" gradientUnits="userSpaceOnUse" x1="2191.5" x2="2520.5" y1="0" y2="0"><stop offset="0" stop-color="#baff02"/><stop offset="0.691" stop-color="#feff00"/><stop offset="1" stop-color="#ffe200"/></linearGradient><linearGradient id="d8" gradientUnits="userSpaceOnUse" x1="2191.5" x2="2520.5" y1="0" y2="0"><stop offset="0" stop-color="#bbff02"/><stop offset="0.682" stop-color="#ff0"/><stop offset="1" stop-color="#ffe100"/></linearGradient><linearGradient id="d9" gradientUnits="userSpaceOnUse" x1="2191.5" x2="2520.5" y1="0" y2="0"><stop offset="0" stop-color="#bcff03"/><stop offset="0.673" stop-color="#ff0"/><stop offset="1" stop-color="#ffdf00"/></linearGradient><linearGradient id="d10" gradientUnits="userSpaceOnUse" x1="2191.5" x2="2520.5" y1="0" y2="0"><stop offset="0" stop-color="#bdff03"/><stop offset="0.655" stop-color="#ff0"/><stop offset="1" stop-color="#ffde00"/></linearGradient><linearGradient id="d11" gradientUnits="userSpaceOnUse" x1="2191.5" x2="2520.5" y1="0" y2="0"><stop offset="0" stop-color="#beff04"/><stop offset="0.645" stop-color="#ff0"/><stop offset="1" stop-color="#fd0"/></linearGradient><linearGradient id="d12" gradientUnits="userSpaceOnUse" x1="2191.5" x2="2520.5" y1="0" y2="0"><stop offset="0" stop-color="#bfff05"/><stop offset="0.627" stop-color="#ff0"/><stop offset="1" stop-color="#ffdc00"/></linearGradient><linearGradient id="d13" gradientUnits="userSpaceOnUse" x1="2191.5" x2="2520.5" y1="0" y2="0"><stop offset="0" stop-color="#c0ff05"/><stop offset="0.245" stop-color="#d8ff00"/><stop offset="0.618" stop-color="#ff0"/><stop offset="1" stop-color="#ffdb00"/></linearGradient><linearGradient id="d14" gradientUnits="userSpaceOnUse" x1="2191.5" x2="2520.5" y1="0" y2="0"><stop offset="0" stop-color="#c1ff06"/><stop offset="0.273" stop-color="#dcff00"/><stop offset="0.6" stop-color="#ff0"/><stop offset="1" stop-color="#ffd900"/></linearGradient><linearGradient id="d15" gradientUnits="userSpaceOnUse" x1="2191.5" x2="2520.5" y1="0" y2="0"><stop offset="0" stop-color="#c3ff06"/><stop offset="0.291" stop-color="#e0ff00"/><stop offset="0.591" stop-color="#ff0"/><stop offset="1" stop-color="#ffd800"/></linearGradient><linearGradient id="d16" gradientUnits="userSpaceOnUse" x1="2191.5" x2="2520.5" y1="0" y2="0"><stop offset="0" stop-color="#c4ff07"/><stop offset="0.318" stop-color="#e4ff00"/><stop offset="0.582" stop-color="#ff0"/><stop offset="1" stop-color="#ffd700"/></linearGradient><linearGradient id="d17" gradientUnits="userSpaceOnUse" x1="2191.5" x2="2520.5" y1="0" y2="0"><stop offset="0" stop-color="#c5ff08"/><stop offset="0.564" stop-color="#ff0"/><stop offset="1" stop-color="#ffd600"/></linearGradient><linearGradient id="d18" gradientUnits="userSpaceOnUse" x1="2191.5" x2="2520.5" y1="0" y2="0"><stop offset="0" stop-color="#c6ff08"/><stop offset="0.555" stop-color="#ff0"/><stop offset="1" stop-color="#ffd500"/></linearGradient><linearGradient id="d19" gradientUnits="userSpaceOnUse" x1="2191.5" x2="2520.5" y1="0" y2="0"><stop offset="0" stop-color="#c7ff09"/><stop offset="0.536" stop-color="#ff0"/><stop offset="1" stop-color="#ffd400"/></linearGradient><linearGradient id="d20" gradientUnits="userSpaceOnUse" x1="2191.5" x2="2520.5" y1="0" y2="0"><stop offset="0" stop-color="#c8ff09"/><stop offset="0.527" stop-color="#ff0"/><stop offset="1" stop-color="#ffd200"/></linearGradient><linearGradient id="d21" gradientUnits="userSpaceOnUse" x1="2191.5" x2="2520.5" y1="0" y2="0"><stop offset="0" stop-color="#caff0a"/><stop offset="0.509" stop-color="#ff0"/><stop offset="1" stop-color="#ffd100"/></linearGradient><linearGradient id="d22" gradientUnits="userSpaceOnUse" x1="2191.5" x2="2520.5" y1="0" y2="0"><stop offset="0" stop-color="#cbff0b"/><stop offset="0.5" stop-color="#ff0"/><stop offset="1" stop-color="#ffd000"/></linearGradient><linearGradient id="d23" gradientUnits="userSpaceOnUse" x1="2191.5" x2="2520.5" y1="0" y2="0"><stop offset="0" stop-color="#ccff0b"/><stop offset="0.491" stop-color="#fffe01"/><stop offset="1" stop-color="#ffcf00"/></linearGradient><linearGradient id="d24" gradientUnits="userSpaceOnUse" x1="2191.5" x2="2520.5" y1="0" y2="0"><stop offset="0" stop-color="#cdff0c"/><stop offset="0.473" stop-color="#ffff02"/><stop offset="1" stop-color="#ffce00"/></linearGradient><linearGradient id="d25" gradientUnits="userSpaceOnUse" x1="2191.5" x2="2520.5" y1="0" y2="0"><stop offset="0" stop-color="#ceff0d"/><stop offset="0.464" stop-color="#ffff02"/><stop offset="1" stop-color="#ffcd00"/></linearGradient><linearGradient id="d26" gradientUnits="userSpaceOnUse" x1="2191.5" x2="2520.5" y1="0" y2="0"><stop offset="0" stop-color="#d0ff0d"/><stop offset="0.445" stop-color="#ffff04"/><stop offset="1" stop-color="#fc0"/></linearGradient><linearGradient id="d27" gradientUnits="userSpaceOnUse" x1="2191.5" x2="2520.5" y1="0" y2="0"><stop offset="0" stop-color="#d1ff0e"/><stop offset="0.436" stop-color="#ffff04"/><stop offset="1" stop-color="#ffca00"/></linearGradient><linearGradient id="d28" gradientUnits="userSpaceOnUse" x1="2191.5" x2="2520.5" y1="0" y2="0"><stop offset="0" stop-color="#d2ff0f"/><stop offset="0.418" stop-color="#ffff05"/><stop offset="0.655" stop-color="#ffe700"/><stop offset="1" stop-color="#ffc900"/></linearGradient><linearGradient id="d29" gradientUnits="userSpaceOnUse" x1="2191.5" x2="2520.5" y1="0" y2="0"><stop offset="0" stop-color="#d3ff0f"/><stop offset="0.409" stop-color="#ffff06"/><stop offset="0.682" stop-color="#ffe300"/><stop offset="1" stop-color="#ffc800"/></linearGradient><linearGradient id="d30" gradientUnits="userSpaceOnUse" x1="2191.5" x2="2520.5" y1="0" y2="0"><stop offset="0" stop-color="#d5ff10"/><stop offset="0.391" stop-color="#ffff07"/><stop offset="0.709" stop-color="#ffdf00"/><stop offset="1" stop-color="#ffc700"/></linearGradient><linearGradient id="d31" gradientUnits="userSpaceOnUse" x1="2191.5" x2="2520.5" y1="0" y2="0"><stop offset="0" stop-color="#d6ff11"/><stop offset="0.382" stop-color="#ffff08"/><stop offset="0.727" stop-color="#ffdc00"/><stop offset="1" stop-color="#ffc600"/></linearGradient><linearGradient id="d32" gradientUnits="userSpaceOnUse" x1="2191.5" x2="2520.5" y1="0" y2="0"><stop offset="0" stop-color="#d7ff11"/><stop offset="0.373" stop-color="#fffe09"/><stop offset="0.755" stop-color="#ffd900"/><stop offset="1" stop-color="#ffc500"/></linearGradient><linearGradient id="d33" gradientUnits="userSpaceOnUse" x1="2191.5" x2="2520.5" y1="0" y2="0"><stop offset="0" stop-color="#d8ff12"/><stop offset="0.355" stop-color="#ffff0a"/><stop offset="0.782" stop-color="#ffd500"/><stop offset="1" stop-color="#ffc400"/></linearGradient><linearGradient id="d34" gradientUnits="userSpaceOnUse" x1="2191.5" x2="2520.5" y1="0" y2="0"><stop offset="0" stop-color="#daff13"/><stop offset="0.345" stop-color="#ffff0b"/><stop offset="0.809" stop-color="#ffd200"/><stop offset="1" stop-color="#ffc300"/></linearGradient><linearGradient id="d35" gradientUnits="userSpaceOnUse" x1="2191.5" x2="2520.5" y1="0" y2="0"><stop offset="0" stop-color="#dbff13"/><stop offset="0.327" stop-color="#ffff0c"/><stop offset="0.645" stop-color="#ffdf04"/><stop offset="1" stop-color="#ffc200"/></linearGradient><linearGradient id="d36" gradientUnits="userSpaceOnUse" x1="2191.5" x2="2520.5" y1="0" y2="0"><stop offset="0" stop-color="#dcff14"/><stop offset="0.318" stop-color="#ffff0d"/><stop offset="0.645" stop-color="#ffde05"/><stop offset="1" stop-color="#ffc000"/></linearGradient><linearGradient id="d37" gradientUnits="userSpaceOnUse" x1="2191.5" x2="2520.5" y1="0" y2="0"><stop offset="0" stop-color="#deff15"/><stop offset="0.3" stop-color="#ffff0e"/><stop offset="0.636" stop-color="#ffdd06"/><stop offset="1" stop-color="#ffbf00"/></linearGradient><linearGradient id="d38" gradientUnits="userSpaceOnUse" x1="2191.5" x2="2520.5" y1="0" y2="0"><stop offset="0" stop-color="#dfff16"/><stop offset="0.291" stop-color="#ffff0f"/><stop offset="0.627" stop-color="#ffdd06"/><stop offset="1" stop-color="#ffbe00"/></linearGradient><linearGradient id="d39" gradientUnits="userSpaceOnUse" x1="2191.5" x2="2520.5" y1="0" y2="0"><stop offset="0" stop-color="#e0ff16"/><stop offset="0.282" stop-color="#fffe10"/><stop offset="0.618" stop-color="#ffdc07"/><stop offset="1" stop-color="#ffbd00"/></linearGradient><linearGradient id="d40" gradientUnits="userSpaceOnUse" x1="2191.5" x2="2520.5" y1="0" y2="0"><stop offset="0" stop-color="#e2ff17"/><stop offset="0.264" stop-color="#ff1"/><stop offset="0.609" stop-color="#ffdc08"/><stop offset="1" stop-color="#ffbc00"/></linearGradient><linearGradient id="d41" gradientUnits="userSpaceOnUse" x1="2191.5" x2="2520.5" y1="0" y2="0"><stop offset="0" stop-color="#e3ff18"/><stop offset="0.255" stop-color="#fffe12"/><stop offset="0.609" stop-color="#ffda09"/><stop offset="1" stop-color="#fb0"/></linearGradient><linearGradient id="d42" gradientUnits="userSpaceOnUse" x1="2191.5" x2="2520.5" y1="0" y2="0"><stop offset="0" stop-color="#e4ff18"/><stop offset="0.236" stop-color="#ffff13"/><stop offset="0.6" stop-color="#ffda09"/><stop offset="1" stop-color="#ffba01"/></linearGradient><linearGradient id="d43" gradientUnits="userSpaceOnUse" x1="2191.5" x2="2520.5" y1="0" y2="0"><stop offset="0" stop-color="#e6ff19"/><stop offset="0.227" stop-color="#ffff14"/><stop offset="0.591" stop-color="#ffda0a"/><stop offset="1" stop-color="#ffb901"/></linearGradient><linearGradient id="d44" gradientUnits="userSpaceOnUse" x1="2191.5" x2="2520.5" y1="0" y2="0"><stop offset="0" stop-color="#e7ff1a"/><stop offset="0.209" stop-color="#ffff15"/><stop offset="0.582" stop-color="#ffd90b"/><stop offset="1" stop-color="#ffb802"/></linearGradient><linearGradient id="d45" gradientUnits="userSpaceOnUse" x1="2191.5" x2="2520.5" y1="0" y2="0"><stop offset="0" stop-color="#e9ff1b"/><stop offset="0.2" stop-color="#ffff16"/><stop offset="0.573" stop-color="#ffd90c"/><stop offset="1" stop-color="#ffb702"/></linearGradient><linearGradient id="d46" gradientUnits="userSpaceOnUse" x1="2191.5" x2="2520.5" y1="0" y2="0"><stop offset="0" stop-color="#eaff1b"/><stop offset="0.191" stop-color="#fffe17"/><stop offset="0.573" stop-color="#ffd70c"/><stop offset="1" stop-color="#ffb603"/></linearGradient></defs><g clip-path="url(#ci)"><g><rect x="2191.5" y="167.7" width="329.0" height="6.60" fill="url(#c0)"/><rect x="2191.5" y="173.7" width="329.0" height="6.60" fill="url(#c1)"/><rect x="2191.5" y="179.7" width="329.0" height="6.60" fill="url(#c2)"/><rect x="2191.5" y="185.7" width="329.0" height="6.60" fill="url(#c3)"/><rect x="2191.5" y="191.7" width="329.0" height="6.60" fill="url(#c4)"/><rect x="2191.5" y="197.7" width="329.0" height="6.60" fill="url(#c5)"/><rect x="2191.5" y="203.7" width="329.0" height="6.60" fill="url(#c6)"/><rect x="2191.5" y="209.7" width="329.0" height="6.60" fill="url(#c7)"/><rect x="2191.5" y="215.7" width="329.0" height="6.60" fill="url(#c8)"/><rect x="2191.5" y="221.7" width="329.0" height="6.60" fill="url(#c9)"/><rect x="2191.5" y="227.7" width="329.0" height="6.60" fill="url(#c10)"/><rect x="2191.5" y="233.7" width="329.0" height="6.60" fill="url(#c11)"/><rect x="2191.5" y="239.7" width="329.0" height="6.60" fill="url(#c12)"/><rect x="2191.5" y="245.7" width="329.0" height="6.60" fill="url(#c13)"/><rect x="2191.5" y="251.7" width="329.0" height="6.60" fill="url(#c14)"/><rect x="2191.5" y="257.7" width="329.0" height="6.60" fill="url(#c15)"/><rect x="2191.5" y="263.7" width="329.0" height="6.60" fill="url(#c16)"/><rect x="2191.5" y="269.7" width="329.0" height="6.60" fill="url(#c17)"/><rect x="2191.5" y="275.7" width="329.0" height="6.60" fill="url(#c18)"/><rect x="2191.5" y="281.7" width="329.0" height="6.60" fill="url(#c19)"/><rect x="2191.5" y="287.7" width="329.0" height="6.60" fill="url(#c20)"/><rect x="2191.5" y="293.7" width="329.0" height="6.60" fill="url(#c21)"/><rect x="2191.5" y="299.7" width="329.0" height="6.60" fill="url(#c22)"/><rect x="2191.5" y="305.7" width="329.0" height="6.60" fill="url(#c23)"/><rect x="2191.5" y="311.7" width="329.0" height="6.60" fill="url(#c24)"/><rect x="2191.5" y="317.7" width="329.0" height="6.60" fill="url(#c25)"/><rect x="2191.5" y="323.7" width="329.0" height="6.60" fill="url(#c26)"/><rect x="2191.5" y="329.7" width="329.0" height="6.60" fill="url(#c27)"/><rect x="2191.5" y="335.7" width="329.0" height="6.60" fill="url(#c28)"/><rect x="2191.5" y="341.7" width="329.0" height="6.60" fill="url(#c29)"/><rect x="2191.5" y="347.7" width="329.0" height="6.60" fill="url(#c30)"/><rect x="2191.5" y="353.7" width="329.0" height="6.60" fill="url(#c31)"/><rect x="2191.5" y="359.7" width="329.0" height="6.60" fill="url(#c32)"/><rect x="2191.5" y="365.7" width="329.0" height="6.60" fill="url(#c33)"/><rect x="2191.5" y="371.7" width="329.0" height="6.60" fill="url(#c34)"/><rect x="2191.5" y="377.7" width="329.0" height="6.60" fill="url(#c35)"/><rect x="2191.5" y="383.7" width="329.0" height="6.60" fill="url(#c36)"/><rect x="2191.5" y="389.7" width="329.0" height="6.60" fill="url(#c37)"/><rect x="2191.5" y="395.7" width="329.0" height="6.60" fill="url(#c38)"/><rect x="2191.5" y="401.7" width="329.0" height="6.60" fill="url(#c39)"/><rect x="2191.5" y="407.7" width="329.0" height="6.60" fill="url(#c40)"/><rect x="2191.5" y="413.7" width="329.0" height="6.60" fill="url(#c41)"/><rect x="2191.5" y="419.7" width="329.0" height="6.60" fill="url(#c42)"/><rect x="2191.5" y="425.7" width="329.0" height="6.60" fill="url(#c43)"/><rect x="2191.5" y="431.7" width="329.0" height="6.60" fill="url(#c44)"/><rect x="2191.5" y="437.7" width="329.0" height="6.60" fill="url(#c45)"/><rect x="2191.5" y="443.7" width="329.0" height="6.60" fill="url(#c46)"/></g><g clip-path="url(#cit)"><rect x="2191.5" y="167.7" width="329.0" height="6.60" fill="url(#d0)"/><rect x="2191.5" y="173.7" width="329.0" height="6.60" fill="url(#d1)"/><rect x="2191.5" y="179.7" width="329.0" height="6.60" fill="url(#d2)"/><rect x="2191.5" y="185.7" width="329.0" height="6.60" fill="url(#d3)"/><rect x="2191.5" y="191.7" width="329.0" height="6.60" fill="url(#d4)"/><rect x="2191.5" y="197.7" width="329.0" height="6.60" fill="url(#d5)"/><rect x="2191.5" y="203.7" width="329.0" height="6.60" fill="url(#d6)"/><rect x="2191.5" y="209.7" width="329.0" height="6.60" fill="url(#d7)"/><rect x="2191.5" y="215.7" width="329.0" height="6.60" fill="url(#d8)"/><rect x="2191.5" y="221.7" width="329.0" height="6.60" fill="url(#d9)"/><rect x="2191.5" y="227.7" width="329.0" height="6.60" fill="url(#d10)"/><rect x="2191.5" y="233.7" width="329.0" height="6.60" fill="url(#d11)"/><rect x="2191.5" y="239.7" width="329.0" height="6.60" fill="url(#d12)"/><rect x="2191.5" y="245.7" width="329.0" height="6.60" fill="url(#d13)"/><rect x="2191.5" y="251.7" width="329.0" height="6.60" fill="url(#d14)"/><rect x="2191.5" y="257.7" width="329.0" height="6.60" fill="url(#d15)"/><rect x="2191.5" y="263.7" width="329.0" height="6.60" fill="url(#d16)"/><rect x="2191.5" y="269.7" width="329.0" height="6.60" fill="url(#d17)"/><rect x="2191.5" y="275.7" width="329.0" height="6.60" fill="url(#d18)"/><rect x="2191.5" y="281.7" width="329.0" height="6.60" fill="url(#d19)"/><rect x="2191.5" y="287.7" width="329.0" height="6.60" fill="url(#d20)"/><rect x="2191.5" y="293.7" width="329.0" height="6.60" fill="url(#d21)"/><rect x="2191.5" y="299.7" width="329.0" height="6.60" fill="url(#d22)"/><rect x="2191.5" y="305.7" width="329.0" height="6.60" fill="url(#d23)"/><rect x="2191.5" y="311.7" width="329.0" height="6.60" fill="url(#d24)"/><rect x="2191.5" y="317.7" width="329.0" height="6.60" fill="url(#d25)"/><rect x="2191.5" y="323.7" width="329.0" height="6.60" fill="url(#d26)"/><rect x="2191.5" y="329.7" width="329.0" height="6.60" fill="url(#d27)"/><rect x="2191.5" y="335.7" width="329.0" height="6.60" fill="url(#d28)"/><rect x="2191.5" y="341.7" width="329.0" height="6.60" fill="url(#d29)"/><rect x="2191.5" y="347.7" width="329.0" height="6.60" fill="url(#d30)"/><rect x="2191.5" y="353.7" width="329.0" height="6.60" fill="url(#d31)"/><rect x="2191.5" y="359.7" width="329.0" height="6.60" fill="url(#d32)"/><rect x="2191.5" y="365.7" width="329.0" height="6.60" fill="url(#d33)"/><rect x="2191.5" y="371.7" width="329.0" height="6.60" fill="url(#d34)"/><rect x="2191.5" y="377.7" width="329.0" height="6.60" fill="url(#d35)"/><rect x="2191.5" y="383.7" width="329.0" height="6.60" fill="url(#d36)"/><rect x="2191.5" y="389.7" width="329.0" height="6.60" fill="url(#d37)"/><rect x="2191.5" y="395.7" width="329.0" height="6.60" fill="url(#d38)"/><rect x="2191.5" y="401.7" width="329.0" height="6.60" fill="url(#d39)"/><rect x="2191.5" y="407.7" width="329.0" height="6.60" fill="url(#d40)"/><rect x="2191.5" y="413.7" width="329.0" height="6.60" fill="url(#d41)"/><rect x="2191.5" y="419.7" width="329.0" height="6.60" fill="url(#d42)"/><rect x="2191.5" y="425.7" width="329.0" height="6.60" fill="url(#d43)"/><rect x="2191.5" y="431.7" width="329.0" height="6.60" fill="url(#d44)"/><rect x="2191.5" y="437.7" width="329.0" height="6.60" fill="url(#d45)"/><rect x="2191.5" y="443.7" width="329.0" height="6.60" fill="url(#d46)"/></g></g>
<rect x="2190.2" y="166.4" width="331.6" height="279" fill="none" stroke="#9c9c9c" stroke-width="2.6"/>
<rect x="2343.9" y="294.1" width="20.6" height="20.6" fill="none" stroke="#fff" stroke-opacity=".95" stroke-width="2.3"/>
<circle cx="2374.5" cy="257.6" r="6.2" fill="#c8c800" stroke="#000" stroke-width="1.7"/>
<rect x="77.5" y="260.4" width="474" height="628.2" fill="#242424" />
<text x="225.57" y="252" font-size="21.8" fill="#dedede" textLength="64.55" lengthAdjust="spacingAndGlyphs" >DeltaE</text>
<text x="297.35" y="252" font-size="21.8" fill="#dedede" textLength="50.68" lengthAdjust="spacingAndGlyphs" >2000</text>
<line x1="140.514" y1="260.4" x2="140.514" y2="896.6" stroke="#a2a2a2" stroke-width="2" />
<line x1="203.529" y1="260.4" x2="203.529" y2="896.6" stroke="#a2a2a2" stroke-width="2" />
<line x1="266.543" y1="260.4" x2="266.543" y2="896.6" stroke="#a2a2a2" stroke-width="2" />
<line x1="329.557" y1="260.4" x2="329.557" y2="896.6" stroke="#a2a2a2" stroke-width="2" />
<line x1="392.571" y1="260.4" x2="392.571" y2="896.6" stroke="#a2a2a2" stroke-width="2" />
<line x1="455.586" y1="260.4" x2="455.586" y2="896.6" stroke="#a2a2a2" stroke-width="2" />
<line x1="518.6" y1="260.4" x2="518.6" y2="896.6" stroke="#a2a2a2" stroke-width="2" />
<line x1="77.5" y1="888.6" x2="77.5" y2="896.6" stroke="#a2a2a2" stroke-width="2" />
<path d="M77.5 260.4H551.5V888.6" fill="none" stroke="#a2a2a2" stroke-width="2"/>
<path d="M77.5 259.4V888.6H552.5" fill="none" stroke="#a2a2a2" stroke-width="2.2"/>
<line x1="68.5" y1="260.4" x2="77.5" y2="260.4" stroke="#d0d0d0" stroke-width="2" />
<line x1="68.5" y1="365.1" x2="77.5" y2="365.1" stroke="#d0d0d0" stroke-width="2" />
<line x1="68.5" y1="469.8" x2="77.5" y2="469.8" stroke="#d0d0d0" stroke-width="2" />
<line x1="68.5" y1="574.5" x2="77.5" y2="574.5" stroke="#d0d0d0" stroke-width="2" />
<line x1="68.5" y1="679.2" x2="77.5" y2="679.2" stroke="#d0d0d0" stroke-width="2" />
<line x1="68.5" y1="783.9" x2="77.5" y2="783.9" stroke="#d0d0d0" stroke-width="2" />
<line x1="68.5" y1="888.6" x2="77.5" y2="888.6" stroke="#d0d0d0" stroke-width="2" />
<defs><linearGradient id="bsh" x1="0" x2="0" y1="0" y2="1"><stop offset="0" stop-color="#fff" stop-opacity=".28"/><stop offset=".35" stop-color="#fff" stop-opacity="0"/><stop offset=".7" stop-color="#000" stop-opacity="0"/><stop offset="1" stop-color="#000" stop-opacity=".35"/></linearGradient>
<linearGradient id="bsw" x1="0" x2="1" y1="0" y2="0"><stop offset="0" stop-color="#fff" stop-opacity=".25"/><stop offset=".3" stop-color="#fff" stop-opacity="0"/><stop offset=".75" stop-color="#000" stop-opacity="0"/><stop offset="1" stop-color="#000" stop-opacity=".4"/></linearGradient></defs>
<rect x="78.5" y="270.7" width="69.5" height="11" fill="#000"/>
<rect x="78.5" y="271.8" width="67.2" height="8.4" fill="#cc1111"/>
<rect x="78.5" y="271.8" width="67.2" height="8.4" fill="url(#bsh)"/>
<rect x="78.5" y="271.8" width="67.2" height="8.4" fill="url(#bsw)"/>
<rect x="78.5" y="283.2" width="53" height="11" fill="#000"/>
<rect x="78.5" y="284.3" width="50.7" height="8.4" fill="#11cc11"/>
<rect x="78.5" y="284.3" width="50.7" height="8.4" fill="url(#bsh)"/>
<rect x="78.5" y="284.3" width="50.7" height="8.4" fill="url(#bsw)"/>
<rect x="78.5" y="295.7" width="57.3" height="11" fill="#000"/>
<rect x="78.5" y="296.8" width="55" height="8.4" fill="#1111cc"/>
<rect x="78.5" y="296.8" width="55" height="8.4" fill="url(#bsh)"/>
<rect x="78.5" y="296.8" width="55" height="8.4" fill="url(#bsw)"/>
<rect x="78.5" y="308.2" width="30.7" height="11" fill="#000"/>
<rect x="78.5" y="309.3" width="28.4" height="8.4" fill="#1bcccc"/>
<rect x="78.5" y="309.3" width="28.4" height="8.4" fill="url(#bsh)"/>
<rect x="78.5" y="309.3" width="28.4" height="8.4" fill="url(#bsw)"/>
<rect x="78.5" y="320.7" width="40.8" height="11" fill="#000"/>
<rect x="78.5" y="321.8" width="38.5" height="8.4" fill="#cc11cc"/>
<rect x="78.5" y="321.8" width="38.5" height="8.4" fill="url(#bsh)"/>
<rect x="78.5" y="321.8" width="38.5" height="8.4" fill="url(#bsw)"/>
<rect x="78.5" y="333.2" width="32.9" height="11" fill="#000"/>
<rect x="78.5" y="334.3" width="30.6" height="8.4" fill="#cccc11"/>
<rect x="78.5" y="334.3" width="30.6" height="8.4" fill="url(#bsh)"/>
<rect x="78.5" y="334.3" width="30.6" height="8.4" fill="url(#bsw)"/>
<rect x="78.5" y="375.4" width="39" height="11" fill="#000"/>
<rect x="78.5" y="376.5" width="36.7" height="8.4" fill="#cc4848"/>
<rect x="78.5" y="376.5" width="36.7" height="8.4" fill="url(#bsh)"/>
<rect x="78.5" y="376.5" width="36.7" height="8.4" fill="url(#bsw)"/>
<rect x="78.5" y="387.9" width="34.7" height="11" fill="#000"/>
<rect x="78.5" y="389" width="32.4" height="8.4" fill="#48cc48"/>
<rect x="78.5" y="389" width="32.4" height="8.4" fill="url(#bsh)"/>
<rect x="78.5" y="389" width="32.4" height="8.4" fill="url(#bsw)"/>
<rect x="78.5" y="400.4" width="23.8" height="11" fill="#000"/>
<rect x="78.5" y="401.5" width="21.5" height="8.4" fill="#4848cc"/>
<rect x="78.5" y="401.5" width="21.5" height="8.4" fill="url(#bsh)"/>
<rect x="78.5" y="401.5" width="21.5" height="8.4" fill="url(#bsw)"/>
<rect x="78.5" y="412.9" width="17.8" height="11" fill="#000"/>
<rect x="78.5" y="414" width="15.5" height="8.4" fill="#52cccc"/>
<rect x="78.5" y="414" width="15.5" height="8.4" fill="url(#bsh)"/>
<rect x="78.5" y="414" width="15.5" height="8.4" fill="url(#bsw)"/>
<rect x="78.5" y="425.4" width="25.5" height="11" fill="#000"/>
<rect x="78.5" y="426.5" width="23.2" height="8.4" fill="#cc48cc"/>
<rect x="78.5" y="426.5" width="23.2" height="8.4" fill="url(#bsh)"/>
<rect x="78.5" y="426.5" width="23.2" height="8.4" fill="url(#bsw)"/>
<rect x="78.5" y="437.9" width="19.5" height="11" fill="#000"/>
<rect x="78.5" y="439" width="17.2" height="8.4" fill="#cccc48"/>
<rect x="78.5" y="439" width="17.2" height="8.4" fill="url(#bsh)"/>
<rect x="78.5" y="439" width="17.2" height="8.4" fill="url(#bsw)"/>
<rect x="78.5" y="480.1" width="43.2" height="11" fill="#000"/>
<rect x="78.5" y="481.2" width="40.9" height="8.4" fill="#cc6464"/>
<rect x="78.5" y="481.2" width="40.9" height="8.4" fill="url(#bsh)"/>
<rect x="78.5" y="481.2" width="40.9" height="8.4" fill="url(#bsw)"/>
<rect x="78.5" y="492.6" width="22.5" height="11" fill="#000"/>
<rect x="78.5" y="493.7" width="20.2" height="8.4" fill="#64cc64"/>
<rect x="78.5" y="493.7" width="20.2" height="8.4" fill="url(#bsh)"/>
<rect x="78.5" y="493.7" width="20.2" height="8.4" fill="url(#bsw)"/>
<rect x="78.5" y="505.1" width="31.3" height="11" fill="#000"/>
<rect x="78.5" y="506.2" width="29" height="8.4" fill="#6464cc"/>
<rect x="78.5" y="506.2" width="29" height="8.4" fill="url(#bsh)"/>
<rect x="78.5" y="506.2" width="29" height="8.4" fill="url(#bsw)"/>
<rect x="78.5" y="517.6" width="11.5" height="11" fill="#000"/>
<rect x="78.5" y="518.7" width="9.2" height="8.4" fill="#6ecccc"/>
<rect x="78.5" y="518.7" width="9.2" height="8.4" fill="url(#bsh)"/>
<rect x="78.5" y="518.7" width="9.2" height="8.4" fill="url(#bsw)"/>
<rect x="78.5" y="530.1" width="24.2" height="11" fill="#000"/>
<rect x="78.5" y="531.2" width="21.9" height="8.4" fill="#cc64cc"/>
<rect x="78.5" y="531.2" width="21.9" height="8.4" fill="url(#bsh)"/>
<rect x="78.5" y="531.2" width="21.9" height="8.4" fill="url(#bsw)"/>
<rect x="78.5" y="542.6" width="18.2" height="11" fill="#000"/>
<rect x="78.5" y="543.7" width="15.9" height="8.4" fill="#cccc64"/>
<rect x="78.5" y="543.7" width="15.9" height="8.4" fill="url(#bsh)"/>
<rect x="78.5" y="543.7" width="15.9" height="8.4" fill="url(#bsw)"/>
<rect x="78.5" y="584.8" width="26.5" height="11" fill="#000"/>
<rect x="78.5" y="585.9" width="24.2" height="8.4" fill="#cc8080"/>
<rect x="78.5" y="585.9" width="24.2" height="8.4" fill="url(#bsh)"/>
<rect x="78.5" y="585.9" width="24.2" height="8.4" fill="url(#bsw)"/>
<rect x="78.5" y="597.3" width="20.25" height="11" fill="#000"/>
<rect x="78.5" y="598.4" width="17.95" height="8.4" fill="#80cc80"/>
<rect x="78.5" y="598.4" width="17.95" height="8.4" fill="url(#bsh)"/>
<rect x="78.5" y="598.4" width="17.95" height="8.4" fill="url(#bsw)"/>
<rect x="78.5" y="609.8" width="16.3" height="11" fill="#000"/>
<rect x="78.5" y="610.9" width="14" height="8.4" fill="#8080cc"/>
<rect x="78.5" y="610.9" width="14" height="8.4" fill="url(#bsh)"/>
<rect x="78.5" y="610.9" width="14" height="8.4" fill="url(#bsw)"/>
<rect x="78.5" y="622.3" width="7.5" height="11" fill="#000"/>
<rect x="78.5" y="623.4" width="5.2" height="8.4" fill="#8acccc"/>
<rect x="78.5" y="623.4" width="5.2" height="8.4" fill="url(#bsh)"/>
<rect x="78.5" y="623.4" width="5.2" height="8.4" fill="url(#bsw)"/>
<rect x="78.5" y="634.8" width="22.5" height="11" fill="#000"/>
<rect x="78.5" y="635.9" width="20.2" height="8.4" fill="#cc80cc"/>
<rect x="78.5" y="635.9" width="20.2" height="8.4" fill="url(#bsh)"/>
<rect x="78.5" y="635.9" width="20.2" height="8.4" fill="url(#bsw)"/>
<rect x="78.5" y="647.3" width="20.25" height="11" fill="#000"/>
<rect x="78.5" y="648.4" width="17.95" height="8.4" fill="#cccc80"/>
<rect x="78.5" y="648.4" width="17.95" height="8.4" fill="url(#bsh)"/>
<rect x="78.5" y="648.4" width="17.95" height="8.4" fill="url(#bsw)"/>
<rect x="78.5" y="689.5" width="24.3" height="11" fill="#000"/>
<rect x="78.5" y="690.6" width="22" height="8.4" fill="#cca4a4"/>
<rect x="78.5" y="690.6" width="22" height="8.4" fill="url(#bsh)"/>
<rect x="78.5" y="690.6" width="22" height="8.4" fill="url(#bsw)"/>
<rect x="78.5" y="702" width="16.1" height="11" fill="#000"/>
<rect x="78.5" y="703.1" width="13.8" height="8.4" fill="#a4cca4"/>
<rect x="78.5" y="703.1" width="13.8" height="8.4" fill="url(#bsh)"/>
<rect x="78.5" y="703.1" width="13.8" height="8.4" fill="url(#bsw)"/>
<rect x="78.5" y="714.5" width="14" height="11" fill="#000"/>
<rect x="78.5" y="715.6" width="11.7" height="8.4" fill="#a4a4cc"/>
<rect x="78.5" y="715.6" width="11.7" height="8.4" fill="url(#bsh)"/>
<rect x="78.5" y="715.6" width="11.7" height="8.4" fill="url(#bsw)"/>
<rect x="78.5" y="727" width="6.8" height="11" fill="#000"/>
<rect x="78.5" y="728.1" width="4.5" height="8.4" fill="#aecccc"/>
<rect x="78.5" y="728.1" width="4.5" height="8.4" fill="url(#bsh)"/>
<rect x="78.5" y="728.1" width="4.5" height="8.4" fill="url(#bsw)"/>
<rect x="78.5" y="739.5" width="18.1" height="11" fill="#000"/>
<rect x="78.5" y="740.6" width="15.8" height="8.4" fill="#cca4cc"/>
<rect x="78.5" y="740.6" width="15.8" height="8.4" fill="url(#bsh)"/>
<rect x="78.5" y="740.6" width="15.8" height="8.4" fill="url(#bsw)"/>
<rect x="78.5" y="752" width="22" height="11" fill="#000"/>
<rect x="78.5" y="753.1" width="19.7" height="8.4" fill="#cccca4"/>
<rect x="78.5" y="753.1" width="19.7" height="8.4" fill="url(#bsh)"/>
<rect x="78.5" y="753.1" width="19.7" height="8.4" fill="url(#bsw)"/>
<rect x="78.5" y="869.2" width="17.9" height="11" fill="#000"/>
<rect x="78.5" y="870.3" width="15.6" height="8.4" fill="#fafafa"/>
<rect x="78.5" y="870.3" width="15.6" height="8.4" fill="url(#bsh)"/>
<rect x="78.5" y="870.3" width="15.6" height="8.4" fill="url(#bsw)"/>
<text x="20.68" y="322.9" font-size="21.5" fill="#dedede" textLength="55.67" lengthAdjust="spacingAndGlyphs" >100%</text>
<text x="33.10" y="427.4" font-size="21.5" fill="#dedede" textLength="43.03" lengthAdjust="spacingAndGlyphs" >80%</text>
<text x="33.10" y="531.9" font-size="21.5" fill="#dedede" textLength="43.03" lengthAdjust="spacingAndGlyphs" >60%</text>
<text x="33.61" y="636.4" font-size="21.5" fill="#dedede" textLength="42.52" lengthAdjust="spacingAndGlyphs" >40%</text>
<text x="33.10" y="740.9" font-size="21.5" fill="#dedede" textLength="43.03" lengthAdjust="spacingAndGlyphs" >20%</text>
<text x="38.84" y="845.4" font-size="21.5" fill="#dedede" textLength="37.41" lengthAdjust="spacingAndGlyphs" >100</text>
<text x="70.27" y="921.4" font-size="21.5" fill="#dedede" textLength="13.21" lengthAdjust="spacingAndGlyphs" >0</text>
<text x="132.95" y="921.4" font-size="21.5" fill="#dedede" textLength="13.87" lengthAdjust="spacingAndGlyphs" >2</text>
<text x="196.15" y="921.4" font-size="21.5" fill="#dedede" textLength="13.79" lengthAdjust="spacingAndGlyphs" >4</text>
<text x="258.98" y="921.4" font-size="21.5" fill="#dedede" textLength="13.87" lengthAdjust="spacingAndGlyphs" >6</text>
<text x="322.00" y="921.4" font-size="21.5" fill="#dedede" textLength="13.87" lengthAdjust="spacingAndGlyphs" >8</text>
<text x="378.60" y="921.4" font-size="21.5" fill="#dedede" textLength="25.84" lengthAdjust="spacingAndGlyphs" >10</text>
<text x="441.60" y="921.4" font-size="21.5" fill="#dedede" textLength="26.14" lengthAdjust="spacingAndGlyphs" >12</text>
<text x="504.63" y="921.4" font-size="21.5" fill="#dedede" textLength="25.84" lengthAdjust="spacingAndGlyphs" >14</text>
<defs><linearGradient id="yb" x1="0" x2="0" y1="0" y2="1"><stop offset="0" stop-color="#d4d432"/><stop offset=".08" stop-color="#c8c800"/><stop offset=".55" stop-color="#c4c400"/><stop offset="1" stop-color="#4c4c00"/></linearGradient>
<linearGradient id="yb2" x1="0" x2="0" y1="0" y2="1"><stop offset="0" stop-color="#d0d020"/><stop offset=".3" stop-color="#c6c600"/><stop offset="1" stop-color="#a8a800"/></linearGradient></defs>
<rect x="632.2" y="159.2" width="219.3" height="480" fill="#242424" />
<text x="686.63" y="149.3" font-size="21.8" fill="#dedede" textLength="69.85" lengthAdjust="spacingAndGlyphs" >Delta L</text>
<line x1="623.2" y1="159.2" x2="632.2" y2="159.2" stroke="#d4d4d4" stroke-width="2.2" />
<line x1="623.2" y1="240" x2="632.2" y2="240" stroke="#d4d4d4" stroke-width="2.2" />
<line x1="623.2" y1="318.3" x2="632.2" y2="318.3" stroke="#d4d4d4" stroke-width="2.2" />
<line x1="623.2" y1="399.3" x2="632.2" y2="399.3" stroke="#d4d4d4" stroke-width="2.2" />
<line x1="623.2" y1="480" x2="632.2" y2="480" stroke="#d4d4d4" stroke-width="2.2" />
<line x1="623.2" y1="560.8" x2="632.2" y2="560.8" stroke="#d4d4d4" stroke-width="2.2" />
<line x1="623.2" y1="639.2" x2="632.2" y2="639.2" stroke="#d4d4d4" stroke-width="2.2" />
<line x1="632.2" y1="240" x2="851.5" y2="240" stroke="#a2a2a2" stroke-width="2.2" />
<line x1="632.2" y1="318.3" x2="851.5" y2="318.3" stroke="#a2a2a2" stroke-width="2.2" />
<line x1="632.2" y1="399.3" x2="851.5" y2="399.3" stroke="#a2a2a2" stroke-width="2.2" />
<line x1="632.2" y1="480" x2="851.5" y2="480" stroke="#a2a2a2" stroke-width="2.2" />
<line x1="632.2" y1="560.8" x2="851.5" y2="560.8" stroke="#a2a2a2" stroke-width="2.2" />
<rect x="631" y="156.3" width="221.7" height="4.7" fill="#9a9a9a"/>
<path d="M851.5 156.3V648.2" fill="none" stroke="#a2a2a2" stroke-width="2.4"/>
<path d="M632.2 156.3V648.2M631.2 639.2H851.5" fill="none" stroke="#a2a2a2" stroke-width="2.4"/>
<text x="598.24" y="167.3" font-size="21.5" fill="#dedede" textLength="24.92" lengthAdjust="spacingAndGlyphs" >15</text>
<text x="598.26" y="248.1" font-size="21.5" fill="#dedede" textLength="24.63" lengthAdjust="spacingAndGlyphs" >10</text>
<text x="610.40" y="326.4" font-size="21.5" fill="#dedede" textLength="12.83" lengthAdjust="spacingAndGlyphs" >5</text>
<text x="609.88" y="407.4" font-size="21.5" fill="#dedede" textLength="13.10" lengthAdjust="spacingAndGlyphs" >0</text>
<text x="602.84" y="488.1" font-size="21.5" fill="#dedede" textLength="20.28" lengthAdjust="spacingAndGlyphs" >-5</text>
<text x="590.66" y="568.9" font-size="21.5" fill="#dedede" textLength="32.40" lengthAdjust="spacingAndGlyphs" >-10</text>
<text x="590.65" y="649.6" font-size="21.5" fill="#dedede" textLength="32.68" lengthAdjust="spacingAndGlyphs" >-15</text>
<text x="713.06" y="663.2" font-size="21.5" fill="#dedede" textLength="56.50" lengthAdjust="spacingAndGlyphs" >100%</text>
<rect x="932.2" y="159.2" width="219.3" height="480" fill="#242424" />
<text x="984.50" y="149.3" font-size="21.8" fill="#dedede" textLength="74.45" lengthAdjust="spacingAndGlyphs" >Delta C</text>
<line x1="923.2" y1="159.2" x2="932.2" y2="159.2" stroke="#d4d4d4" stroke-width="2.2" />
<line x1="923.2" y1="240" x2="932.2" y2="240" stroke="#d4d4d4" stroke-width="2.2" />
<line x1="923.2" y1="318.3" x2="932.2" y2="318.3" stroke="#d4d4d4" stroke-width="2.2" />
<line x1="923.2" y1="399.3" x2="932.2" y2="399.3" stroke="#d4d4d4" stroke-width="2.2" />
<line x1="923.2" y1="480" x2="932.2" y2="480" stroke="#d4d4d4" stroke-width="2.2" />
<line x1="923.2" y1="560.8" x2="932.2" y2="560.8" stroke="#d4d4d4" stroke-width="2.2" />
<line x1="923.2" y1="639.2" x2="932.2" y2="639.2" stroke="#d4d4d4" stroke-width="2.2" />
<line x1="932.2" y1="240" x2="1151.5" y2="240" stroke="#a2a2a2" stroke-width="2.2" />
<line x1="932.2" y1="318.3" x2="1151.5" y2="318.3" stroke="#a2a2a2" stroke-width="2.2" />
<line x1="932.2" y1="399.3" x2="1151.5" y2="399.3" stroke="#a2a2a2" stroke-width="2.2" />
<line x1="932.2" y1="480" x2="1151.5" y2="480" stroke="#a2a2a2" stroke-width="2.2" />
<line x1="932.2" y1="560.8" x2="1151.5" y2="560.8" stroke="#a2a2a2" stroke-width="2.2" />
<rect x="931" y="156.3" width="221.7" height="4.7" fill="#9a9a9a"/>
<path d="M1151.5 156.3V648.2" fill="none" stroke="#a2a2a2" stroke-width="2.4"/>
<path d="M932.2 156.3V648.2M931.2 639.2H1151.5" fill="none" stroke="#a2a2a2" stroke-width="2.4"/>
<text x="898.24" y="167.3" font-size="21.5" fill="#dedede" textLength="24.92" lengthAdjust="spacingAndGlyphs" >15</text>
<text x="898.26" y="248.1" font-size="21.5" fill="#dedede" textLength="24.63" lengthAdjust="spacingAndGlyphs" >10</text>
<text x="910.40" y="326.4" font-size="21.5" fill="#dedede" textLength="12.83" lengthAdjust="spacingAndGlyphs" >5</text>
<text x="909.88" y="407.4" font-size="21.5" fill="#dedede" textLength="13.10" lengthAdjust="spacingAndGlyphs" >0</text>
<text x="902.84" y="488.1" font-size="21.5" fill="#dedede" textLength="20.28" lengthAdjust="spacingAndGlyphs" >-5</text>
<text x="890.66" y="568.9" font-size="21.5" fill="#dedede" textLength="32.40" lengthAdjust="spacingAndGlyphs" >-10</text>
<text x="890.65" y="649.6" font-size="21.5" fill="#dedede" textLength="32.68" lengthAdjust="spacingAndGlyphs" >-15</text>
<text x="1013.06" y="663.2" font-size="21.5" fill="#dedede" textLength="56.50" lengthAdjust="spacingAndGlyphs" >100%</text>
<rect x="1232.2" y="159.2" width="219.3" height="480" fill="#242424" />
<text x="1283.15" y="149.3" font-size="21.8" fill="#dedede" textLength="76.63" lengthAdjust="spacingAndGlyphs" >Delta H</text>
<line x1="1223.2" y1="159.2" x2="1232.2" y2="159.2" stroke="#d4d4d4" stroke-width="2.2" />
<line x1="1223.2" y1="240" x2="1232.2" y2="240" stroke="#d4d4d4" stroke-width="2.2" />
<line x1="1223.2" y1="318.3" x2="1232.2" y2="318.3" stroke="#d4d4d4" stroke-width="2.2" />
<line x1="1223.2" y1="399.3" x2="1232.2" y2="399.3" stroke="#d4d4d4" stroke-width="2.2" />
<line x1="1223.2" y1="480" x2="1232.2" y2="480" stroke="#d4d4d4" stroke-width="2.2" />
<line x1="1223.2" y1="560.8" x2="1232.2" y2="560.8" stroke="#d4d4d4" stroke-width="2.2" />
<line x1="1223.2" y1="639.2" x2="1232.2" y2="639.2" stroke="#d4d4d4" stroke-width="2.2" />
<line x1="1232.2" y1="240" x2="1451.5" y2="240" stroke="#a2a2a2" stroke-width="2.2" />
<line x1="1232.2" y1="318.3" x2="1451.5" y2="318.3" stroke="#a2a2a2" stroke-width="2.2" />
<line x1="1232.2" y1="399.3" x2="1451.5" y2="399.3" stroke="#a2a2a2" stroke-width="2.2" />
<line x1="1232.2" y1="480" x2="1451.5" y2="480" stroke="#a2a2a2" stroke-width="2.2" />
<line x1="1232.2" y1="560.8" x2="1451.5" y2="560.8" stroke="#a2a2a2" stroke-width="2.2" />
<rect x="1231" y="156.3" width="221.7" height="4.7" fill="#9a9a9a"/>
<path d="M1451.5 156.3V648.2" fill="none" stroke="#a2a2a2" stroke-width="2.4"/>
<path d="M1232.2 156.3V648.2M1231.2 639.2H1451.5" fill="none" stroke="#a2a2a2" stroke-width="2.4"/>
<text x="1198.24" y="167.3" font-size="21.5" fill="#dedede" textLength="24.92" lengthAdjust="spacingAndGlyphs" >15</text>
<text x="1198.26" y="248.1" font-size="21.5" fill="#dedede" textLength="24.63" lengthAdjust="spacingAndGlyphs" >10</text>
<text x="1210.40" y="326.4" font-size="21.5" fill="#dedede" textLength="12.83" lengthAdjust="spacingAndGlyphs" >5</text>
<text x="1209.88" y="407.4" font-size="21.5" fill="#dedede" textLength="13.10" lengthAdjust="spacingAndGlyphs" >0</text>
<text x="1202.84" y="488.1" font-size="21.5" fill="#dedede" textLength="20.28" lengthAdjust="spacingAndGlyphs" >-5</text>
<text x="1190.66" y="568.9" font-size="21.5" fill="#dedede" textLength="32.40" lengthAdjust="spacingAndGlyphs" >-10</text>
<text x="1190.65" y="649.6" font-size="21.5" fill="#dedede" textLength="32.68" lengthAdjust="spacingAndGlyphs" >-15</text>
<text x="1313.06" y="663.2" font-size="21.5" fill="#dedede" textLength="56.50" lengthAdjust="spacingAndGlyphs" >100%</text>
<rect x="654" y="398" width="176" height="12" fill="#000"/><rect x="656.1" y="400.1" width="172" height="8.7" fill="url(#yb2)"/>
<rect x="954" y="319.5" width="176" height="80.5" fill="#000"/><rect x="956.1" y="321.6" width="172" height="77" fill="url(#yb)"/>
<rect x="1253.5" y="395.8" width="175.5" height="4" fill="#000"/>
<text x="46.66" y="177.2" font-size="61.5" fill="#f2f2f2" textLength="279.38" lengthAdjust="spacingAndGlyphs" stroke="#f2f2f2" stroke-width="0.7" >Saturation</text>
<text x="339.63" y="177.2" font-size="61.5" fill="#f2f2f2" textLength="204.10" lengthAdjust="spacingAndGlyphs" stroke="#f2f2f2" stroke-width="0.7" >Sweeps</text>
<text x="32.51" y="1047.1" font-size="44.5" fill="#f2f2f2" textLength="157.60" lengthAdjust="spacingAndGlyphs" stroke="#f2f2f2" stroke-width="0.5" >Current</text>
<text x="201.93" y="1047.1" font-size="44.5" fill="#f2f2f2" textLength="166.87" lengthAdjust="spacingAndGlyphs" stroke="#f2f2f2" stroke-width="0.5" >Reading</text>
<text x="33.28" y="1112" font-size="38.4" fill="#f2f2f2" textLength="31.21" lengthAdjust="spacingAndGlyphs" stroke="#f2f2f2" stroke-width="0.4" >x:</text>
<text x="71.78" y="1112" font-size="38.4" fill="#f2f2f2" textLength="119.24" lengthAdjust="spacingAndGlyphs" stroke="#f2f2f2" stroke-width="0.4" >0,4222</text>
<text x="33.80" y="1174" font-size="38.4" fill="#f2f2f2" textLength="30.62" lengthAdjust="spacingAndGlyphs" stroke="#f2f2f2" stroke-width="0.4" >y:</text>
<text x="71.78" y="1174" font-size="38.4" fill="#f2f2f2" textLength="119.24" lengthAdjust="spacingAndGlyphs" stroke="#f2f2f2" stroke-width="0.4" >0,5137</text>
<text x="34.51" y="1235.6" font-size="38.4" fill="#f2f2f2" textLength="41.86" lengthAdjust="spacingAndGlyphs" stroke="#f2f2f2" stroke-width="0.4" >fL:</text>
<text x="84.18" y="1235.6" font-size="38.4" fill="#f2f2f2" textLength="97.48" lengthAdjust="spacingAndGlyphs" stroke="#f2f2f2" stroke-width="0.4" >67,62</text>
<text x="33.36" y="1297.7" font-size="38.4" fill="#f2f2f2" textLength="116.80" lengthAdjust="spacingAndGlyphs" stroke="#f2f2f2" stroke-width="0.4" >cd/m²:</text>
<text x="158.72" y="1297.7" font-size="38.4" fill="#f2f2f2" textLength="95.29" lengthAdjust="spacingAndGlyphs" stroke="#f2f2f2" stroke-width="0.4" >231,7</text>
<rect x="582" y="688.6" width="899" height="248" fill="#000" />
<rect x="614.1" y="700" width="150" height="100.5" fill="#c0c3a4" />
<rect x="614.1" y="800" width="150" height="100.5" fill="#c0c2a5" />
<rect x="614.1" y="700" width="149.7" height="200.4" fill="none" stroke="#f6f6ec" stroke-width="2"/>
<text x="670.71" y="924.3" font-size="18.6" fill="#fff" textLength="36.55" lengthAdjust="spacingAndGlyphs" >20%</text>
<rect x="789.7" y="700" width="150" height="100.5" fill="#bfc289" />
<rect x="789.7" y="800" width="150" height="100.5" fill="#c1c38a" />
<rect x="789.7" y="700" width="149.7" height="200.4" fill="none" stroke="#f6f6ec" stroke-width="2"/>
<text x="846.81" y="924.3" font-size="18.6" fill="#fff" textLength="36.04" lengthAdjust="spacingAndGlyphs" >40%</text>
<rect x="965.3" y="700" width="150" height="100.5" fill="#c0c06b" />
<rect x="965.3" y="800" width="150" height="100.5" fill="#c1c16c" />
<rect x="965.3" y="700" width="149.7" height="200.4" fill="none" stroke="#f6f6ec" stroke-width="2"/>
<text x="1021.91" y="924.3" font-size="18.6" fill="#fff" textLength="36.55" lengthAdjust="spacingAndGlyphs" >60%</text>
<rect x="1140.9" y="700" width="150" height="100.5" fill="#c1c24a" />
<rect x="1140.9" y="800" width="150" height="100.5" fill="#c1c24b" />
<rect x="1140.9" y="700" width="149.7" height="200.4" fill="none" stroke="#f6f6ec" stroke-width="2"/>
<text x="1197.76" y="924.3" font-size="18.6" fill="#fff" textLength="36.30" lengthAdjust="spacingAndGlyphs" >80%</text>
<rect x="1316.5" y="700" width="150" height="100.5" fill="#c5c500" />
<rect x="1316.5" y="800" width="150" height="100.5" fill="#c4c421" />
<rect x="1316.5" y="700" width="149.7" height="200.4" fill="none" stroke="#f6f6ec" stroke-width="2"/>
<text x="1367.23" y="924.3" font-size="18.6" fill="#fff" textLength="47.84" lengthAdjust="spacingAndGlyphs" >100%</text>
<text x="0.00" y="0" font-size="20" fill="#fff" textLength="52.84" lengthAdjust="spacingAndGlyphs" transform="translate(602.6,769.9) rotate(-90)">Actual</text>
<text x="-0.47" y="0" font-size="20" fill="#fff" textLength="51.96" lengthAdjust="spacingAndGlyphs" transform="translate(602.6,882.8) rotate(-90)">Target</text>
<rect x="554.2" y="1016.8" width="379.9" height="273.6" fill="#242424" />
<text x="657.40" y="1007.5" font-size="21.8" fill="#dedede" textLength="43.00" lengthAdjust="spacingAndGlyphs" >RGB</text>
<text x="705.74" y="1007.5" font-size="21.8" fill="#dedede" textLength="79.02" lengthAdjust="spacingAndGlyphs" >Balance</text>
<line x1="545.2" y1="1016.8" x2="554.2" y2="1016.8" stroke="#d4d4d4" stroke-width="2.2" />
<line x1="545.2" y1="1085.9" x2="554.2" y2="1085.9" stroke="#d4d4d4" stroke-width="2.2" />
<line x1="545.2" y1="1154" x2="554.2" y2="1154" stroke="#d4d4d4" stroke-width="2.2" />
<line x1="545.2" y1="1222.4" x2="554.2" y2="1222.4" stroke="#d4d4d4" stroke-width="2.2" />
<line x1="545.2" y1="1290.4" x2="554.2" y2="1290.4" stroke="#d4d4d4" stroke-width="2.2" />
<line x1="554.2" y1="1085.9" x2="934.1" y2="1085.9" stroke="#a2a2a2" stroke-width="2.2" />
<line x1="554.2" y1="1154" x2="934.1" y2="1154" stroke="#a2a2a2" stroke-width="2.2" />
<line x1="554.2" y1="1222.4" x2="934.1" y2="1222.4" stroke="#a2a2a2" stroke-width="2.2" />
<rect x="553" y="1014.2" width="382.3" height="4.8" fill="#9a9a9a"/>
<path d="M934.1 1014.2V1299.4" fill="none" stroke="#a2a2a2" stroke-width="2.4"/>
<defs><linearGradient id="gr" x1="0" x2="0" y1="0" y2="1"><stop offset="0" stop-color="#ff5858"/><stop offset="1" stop-color="#ff0a0a"/></linearGradient>
<linearGradient id="gg" x1="0" x2="0" y1="0" y2="1"><stop offset="0" stop-color="#5cb25c"/><stop offset="1" stop-color="#0a840a"/></linearGradient>
<linearGradient id="gb" x1="0" x2="0" y1="0" y2="1"><stop offset="0" stop-color="#5858ff"/><stop offset="1" stop-color="#2626ff"/></linearGradient></defs>
<rect x="591.4" y="1159.7" width="101.6" height="130.7" fill="#000"/>
<rect x="593.3" y="1161.9" width="96.2" height="127.5" fill="url(#gr)"/>
<rect x="692.8" y="1157.2" width="101.6" height="133.2" fill="#000"/>
<rect x="694.7" y="1159.4" width="96.2" height="130" fill="url(#gg)"/>
<rect x="794.1" y="1228.1" width="101.6" height="62.3" fill="#000"/>
<rect x="796" y="1230.3" width="96.2" height="59.1" fill="url(#gb)"/>
<path d="M554.2 1015V1299.4M553.2 1290.4H934.1" fill="none" stroke="#a2a2a2" stroke-width="2.4"/>
<text x="506.74" y="1026" font-size="21.5" fill="#dedede" textLength="37.20" lengthAdjust="spacingAndGlyphs" >120</text>
<text x="506.66" y="1093.7" font-size="21.5" fill="#dedede" textLength="37.49" lengthAdjust="spacingAndGlyphs" >110</text>
<text x="506.74" y="1162.1" font-size="21.5" fill="#dedede" textLength="37.20" lengthAdjust="spacingAndGlyphs" >100</text>
<text x="519.48" y="1231.2" font-size="21.5" fill="#dedede" textLength="24.51" lengthAdjust="spacingAndGlyphs" >90</text>
<text x="519.48" y="1300.6" font-size="21.5" fill="#dedede" textLength="24.51" lengthAdjust="spacingAndGlyphs" >80</text>
<text x="716.63" y="1314.8" font-size="21.5" fill="#dedede" textLength="55.77" lengthAdjust="spacingAndGlyphs" >100%</text>
<defs><linearGradient id="th" x1="0" x2="0" y1="0" y2="1"><stop offset="0" stop-color="#2c2c2c"/><stop offset=".49" stop-color="#363636"/><stop offset=".51" stop-color="#191919"/><stop offset=".88" stop-color="#151515"/><stop offset=".9" stop-color="#0c0c0c"/><stop offset="1" stop-color="#0c0c0c"/></linearGradient>
<linearGradient id="td" x1="0" x2="1" y1="0" y2="0"><stop offset="0" stop-color="#3c3c3c"/><stop offset=".45" stop-color="#474747"/><stop offset="1" stop-color="#3e3e3e"/></linearGradient>
<linearGradient id="tl" x1="0" x2="1" y1="0" y2="0"><stop offset="0" stop-color="#727272"/><stop offset=".45" stop-color="#868686"/><stop offset="1" stop-color="#767676"/></linearGradient></defs>
<rect x="964.7" y="978" width="1109.3" height="308.2" fill="#080808" />
<rect x="967.9" y="981" width="1103.1" height="45.25" fill="url(#th)" />
<rect x="967.9" y="1026.25" width="1103.1" height="44.35" fill="url(#td)" />
<text x="994.37" y="1059.1" font-size="27.6" fill="#f2f2f2" textLength="31.95" lengthAdjust="spacingAndGlyphs" font-weight="bold" >x:</text>
<text x="1033.80" y="1059.1" font-size="27.6" fill="#f2f2f2" textLength="92.02" lengthAdjust="spacingAndGlyphs" font-weight="bold" >CIE31</text>
<text x="1271.12" y="1059.1" font-size="26.8" fill="#ececec" textLength="105.07" lengthAdjust="spacingAndGlyphs" >0,3345</text>
<text x="1432.92" y="1059.1" font-size="26.8" fill="#ececec" textLength="105.07" lengthAdjust="spacingAndGlyphs" >0,3573</text>
<text x="1594.72" y="1059.1" font-size="26.8" fill="#ececec" textLength="105.07" lengthAdjust="spacingAndGlyphs" >0,3786</text>
<text x="1756.52" y="1059.1" font-size="26.8" fill="#ececec" textLength="105.07" lengthAdjust="spacingAndGlyphs" >0,3986</text>
<text x="1918.31" y="1059.1" font-size="26.8" fill="#ececec" textLength="105.40" lengthAdjust="spacingAndGlyphs" >0,4222</text>
<rect x="967.9" y="1070.3" width="1103.1" height="44" fill="url(#tl)" />
<text x="994.37" y="1102.2" font-size="27.6" fill="#f2f2f2" textLength="31.95" lengthAdjust="spacingAndGlyphs" font-weight="bold" >y:</text>
<text x="1033.80" y="1102.2" font-size="27.6" fill="#f2f2f2" textLength="92.02" lengthAdjust="spacingAndGlyphs" font-weight="bold" >CIE31</text>
<text x="1271.12" y="1102.2" font-size="26.8" fill="#ececec" textLength="105.07" lengthAdjust="spacingAndGlyphs" >0,3669</text>
<text x="1432.92" y="1102.2" font-size="26.8" fill="#ececec" textLength="105.07" lengthAdjust="spacingAndGlyphs" >0,4049</text>
<text x="1594.72" y="1102.2" font-size="26.8" fill="#ececec" textLength="105.07" lengthAdjust="spacingAndGlyphs" >0,4403</text>
<text x="1756.52" y="1102.2" font-size="26.8" fill="#ececec" textLength="105.07" lengthAdjust="spacingAndGlyphs" >0,4738</text>
<text x="1918.31" y="1102.2" font-size="26.8" fill="#ececec" textLength="105.40" lengthAdjust="spacingAndGlyphs" >0,5137</text>
<rect x="967.9" y="1114" width="1103.1" height="43.8" fill="url(#td)" />
<text x="994.07" y="1145.5" font-size="27.6" fill="#f2f2f2" textLength="23.18" lengthAdjust="spacingAndGlyphs" font-weight="bold" >Y</text>
<text x="1270.78" y="1145.5" font-size="26.8" fill="#ececec" textLength="144.32" lengthAdjust="spacingAndGlyphs" >248,5523</text>
<text x="1432.58" y="1145.5" font-size="26.8" fill="#ececec" textLength="144.32" lengthAdjust="spacingAndGlyphs" >244,1453</text>
<text x="1594.38" y="1145.5" font-size="26.8" fill="#ececec" textLength="144.32" lengthAdjust="spacingAndGlyphs" >240,7580</text>
<text x="1756.18" y="1145.5" font-size="26.8" fill="#ececec" textLength="144.32" lengthAdjust="spacingAndGlyphs" >237,9399</text>
<text x="1917.98" y="1145.5" font-size="26.8" fill="#ececec" textLength="144.32" lengthAdjust="spacingAndGlyphs" >231,6993</text>
<rect x="967.9" y="1157.5" width="1103.1" height="43.7" fill="url(#tl)" />
<text x="994.27" y="1188.7" font-size="27.6" fill="#f2f2f2" textLength="107.68" lengthAdjust="spacingAndGlyphs" font-weight="bold" >Target</text>
<text x="1111.50" y="1188.7" font-size="27.6" fill="#f2f2f2" textLength="120.35" lengthAdjust="spacingAndGlyphs" font-weight="bold" >x:CIE31</text>
<text x="1271.12" y="1188.7" font-size="26.8" fill="#ececec" textLength="104.74" lengthAdjust="spacingAndGlyphs" >0,3344</text>
<text x="1432.92" y="1188.7" font-size="26.8" fill="#ececec" textLength="104.74" lengthAdjust="spacingAndGlyphs" >0,3564</text>
<text x="1594.72" y="1188.7" font-size="26.8" fill="#ececec" textLength="105.07" lengthAdjust="spacingAndGlyphs" >0,3773</text>
<text x="1756.52" y="1188.7" font-size="26.8" fill="#ececec" textLength="105.07" lengthAdjust="spacingAndGlyphs" >0,3969</text>
<text x="1918.32" y="1188.7" font-size="26.8" fill="#ececec" textLength="105.07" lengthAdjust="spacingAndGlyphs" >0,4193</text>
<rect x="967.9" y="1200.9" width="1103.1" height="42.9" fill="url(#td)" />
<text x="994.27" y="1231.2" font-size="27.6" fill="#f2f2f2" textLength="107.68" lengthAdjust="spacingAndGlyphs" font-weight="bold" >Target</text>
<text x="1111.50" y="1231.2" font-size="27.6" fill="#f2f2f2" textLength="120.35" lengthAdjust="spacingAndGlyphs" font-weight="bold" >y:CIE31</text>
<text x="1271.12" y="1231.2" font-size="26.8" fill="#ececec" textLength="105.07" lengthAdjust="spacingAndGlyphs" >0,3648</text>
<text x="1432.92" y="1231.2" font-size="26.8" fill="#ececec" textLength="105.07" lengthAdjust="spacingAndGlyphs" >0,4013</text>
<text x="1594.72" y="1231.2" font-size="26.8" fill="#ececec" textLength="105.07" lengthAdjust="spacingAndGlyphs" >0,4358</text>
<text x="1756.51" y="1231.2" font-size="26.8" fill="#ececec" textLength="105.40" lengthAdjust="spacingAndGlyphs" >0,4682</text>
<text x="1918.32" y="1231.2" font-size="26.8" fill="#ececec" textLength="105.07" lengthAdjust="spacingAndGlyphs" >0,5053</text>
<rect x="967.9" y="1243.5" width="1103.1" height="43" fill="url(#tl)" />
<text x="994.27" y="1274.9" font-size="27.6" fill="#f2f2f2" textLength="107.68" lengthAdjust="spacingAndGlyphs" font-weight="bold" >Target</text>
<text x="1111.79" y="1274.9" font-size="27.6" fill="#f2f2f2" textLength="22.44" lengthAdjust="spacingAndGlyphs" font-weight="bold" >Y</text>
<text x="1270.78" y="1274.9" font-size="26.8" fill="#ececec" textLength="144.65" lengthAdjust="spacingAndGlyphs" >249,9537</text>
<text x="1432.58" y="1274.9" font-size="26.8" fill="#ececec" textLength="144.32" lengthAdjust="spacingAndGlyphs" >245,5663</text>
<text x="1594.38" y="1274.9" font-size="26.8" fill="#ececec" textLength="144.65" lengthAdjust="spacingAndGlyphs" >242,1952</text>
<text x="1756.18" y="1274.9" font-size="26.8" fill="#ececec" textLength="144.32" lengthAdjust="spacingAndGlyphs" >239,5495</text>
<text x="1917.98" y="1274.9" font-size="26.8" fill="#ececec" textLength="144.32" lengthAdjust="spacingAndGlyphs" >236,9918</text>
<text x="1312.14" y="1013.5" font-size="24.6" fill="#f4f4f4" textLength="63.12" lengthAdjust="spacingAndGlyphs" >20%</text>
<text x="1474.92" y="1013.5" font-size="24.6" fill="#f4f4f4" textLength="62.13" lengthAdjust="spacingAndGlyphs" >40%</text>
<text x="1635.74" y="1013.5" font-size="24.6" fill="#f4f4f4" textLength="63.12" lengthAdjust="spacingAndGlyphs" >60%</text>
<text x="1797.87" y="1013.5" font-size="24.6" fill="#f4f4f4" textLength="62.79" lengthAdjust="spacingAndGlyphs" >80%</text>
<text x="1949.62" y="1013.5" font-size="24.6" fill="#f4f4f4" textLength="81.74" lengthAdjust="spacingAndGlyphs" >100%</text>
<defs><linearGradient id="bb" x1="0" x2="0" y1="0" y2="1"><stop offset="0" stop-color="#444"/><stop offset=".5" stop-color="#353535"/><stop offset="1" stop-color="#262626"/></linearGradient>
<linearGradient id="sb" x1="0" x2="0" y1="0" y2="1"><stop offset="0" stop-color="#a2a2a2"/><stop offset=".12" stop-color="#8e8e8e"/><stop offset=".6" stop-color="#7c7c7c"/><stop offset="1" stop-color="#686868"/></linearGradient><linearGradient id="sbs" x1="0" x2="0" y1="0" y2="1"><stop offset="0" stop-color="#1c1c1c"/><stop offset="1" stop-color="#383838"/></linearGradient>
<linearGradient id="sb2" x1="0" x2="0" y1="0" y2="1"><stop offset="0" stop-color="#a0a0a0"/><stop offset=".5" stop-color="#8c8c8c"/><stop offset="1" stop-color="#6e6e6e"/></linearGradient></defs>
<rect x="0" y="1329.5" width="2560" height="62.5" fill="url(#bb)" />
<rect x="2" y="1330.5" width="44" height="60" rx="4" fill="url(#sb)" stroke="#aaa" stroke-width="1"/>
<circle cx="23.5" cy="1338.5" r="6" fill="#777"/><path d="M19.7 1340.5H27.3L23.5 1335.6Z" fill="#2a2a2a"/>
<rect x="5.5" y="1355.5" width="36" height="30.5" rx="3" fill="#ffff00" stroke="#666" stroke-width="1"/>
<rect x="51.7" y="1330.5" width="150" height="61" rx="4.5" fill="url(#sb)" stroke="#9c9c9c" stroke-width="1"/>
<rect x="58.3" y="1336.4" width="139" height="34.5" rx="3.5" fill="#c0c3a5" stroke="#70705c" stroke-width="1"/>
<text x="116.45" y="1386.3" font-size="10.6" fill="#3a3a3a" textLength="20.91" lengthAdjust="spacingAndGlyphs" font-weight="bold" >20%</text>
<rect x="203.75" y="1330.5" width="150" height="61" rx="4.5" fill="url(#sb)" stroke="#9c9c9c" stroke-width="1"/>
<rect x="210.35" y="1336.4" width="139" height="34.5" rx="3.5" fill="#bfc28a" stroke="#70705c" stroke-width="1"/>
<text x="268.50" y="1386.3" font-size="10.6" fill="#3a3a3a" textLength="20.91" lengthAdjust="spacingAndGlyphs" font-weight="bold" >40%</text>
<rect x="355.8" y="1330.5" width="150" height="61" rx="4.5" fill="url(#sb)" stroke="#9c9c9c" stroke-width="1"/>
<rect x="362.4" y="1336.4" width="139" height="34.5" rx="3.5" fill="#c0c06b" stroke="#70705c" stroke-width="1"/>
<text x="420.55" y="1386.3" font-size="10.6" fill="#3a3a3a" textLength="20.91" lengthAdjust="spacingAndGlyphs" font-weight="bold" >60%</text>
<rect x="507.85" y="1330.5" width="150" height="61" rx="4.5" fill="url(#sb)" stroke="#9c9c9c" stroke-width="1"/>
<rect x="514.45" y="1336.4" width="139" height="34.5" rx="3.5" fill="#c1c24a" stroke="#70705c" stroke-width="1"/>
<text x="572.60" y="1386.3" font-size="10.6" fill="#3a3a3a" textLength="20.91" lengthAdjust="spacingAndGlyphs" font-weight="bold" >80%</text>
<rect x="659.9" y="1330.5" width="150" height="61" rx="4" fill="url(#sbs)"/>
<rect x="665" y="1334.3" width="140.2" height="37" rx="4" fill="#c4c400" stroke="#151515" stroke-width="1"/>
<text x="721.18" y="1386.3" font-size="10.6" fill="#fff" textLength="27.43" lengthAdjust="spacingAndGlyphs" font-weight="bold" >100%</text>
<rect x="2237" y="1330.5" width="48" height="60.5" rx="4.5" fill="url(#sb)"/>
<line x1="2237" y1="1348.5" x2="2285" y2="1348.5" stroke="#666" stroke-width="1" />
<circle cx="2261" cy="1339" r="6.5" fill="#777"/><path d="M2256.8 1341.3H2265.2L2261 1336.2Z" fill="#2a2a2a"/>
<defs><linearGradient id="stp" x1="0" x2="0" y1="0" y2="1"><stop offset="0" stop-color="#dcdcdc"/><stop offset=".5" stop-color="#d0d0d0"/><stop offset=".52" stop-color="#a6a6a6"/><stop offset="1" stop-color="#b4b4b4"/></linearGradient></defs><rect x="2246.5" y="1355.2" width="28.5" height="28.5" rx="3.5" fill="url(#stp)" stroke="#1e1e1e" stroke-width="2.2"/>
<rect x="2254.3" y="1363" width="13.7" height="13.7" fill="#050505" />
<rect x="2286.8" y="1330.5" width="44.9" height="29" fill="url(#sb2)"/>
<circle cx="2309.25" cy="1345" r="10" fill="#a2a2a2" opacity=".7"/>
<rect x="2332.7" y="1330.5" width="44.4" height="29" fill="url(#sb2)"/>
<circle cx="2354.9" cy="1345" r="10" fill="#a2a2a2" opacity=".7"/>
<rect x="2378.1" y="1330.5" width="44" height="29" fill="url(#sb2)"/>
<circle cx="2400.1" cy="1345" r="10" fill="#a2a2a2" opacity=".7"/>
<rect x="2423.1" y="1330.5" width="43.6" height="29" fill="url(#sb2)"/>
<circle cx="2444.9" cy="1345" r="10" fill="#a2a2a2" opacity=".7"/>
<rect x="2467.7" y="1330.5" width="44" height="29" fill="url(#sb2)"/>
<circle cx="2489.7" cy="1345" r="10" fill="#a2a2a2" opacity=".7"/>
<rect x="2305.65" y="1341.4" width="7.2" height="7.2" fill="#303030" />
<path d="M2351.9 1340.2L2359.4 1345L2351.9 1349.8Z" fill="#303030"/>
<path d="M2397.6 1340H2395.1V1350H2397.6M2402.6 1340H2405.1V1350H2402.6" fill="none" stroke="#303030" stroke-width="1.3"/><circle cx="2398.6" cy="1345" r=".8" fill="#303030"/><circle cx="2401.6" cy="1345" r=".8" fill="#303030"/>
<path d="M2444.9 1345c-1.5 -3 -5.5 -3 -5.5 0s4 3 5.5 0s4 -3 5.5 0s-4 3 -5.5 0z" fill="none" stroke="#303030" stroke-width="1.4"/>
<path d="M2485.1 1343.5a4.6 4.6 0 0 1 8.2 -1.6M2494.3 1346.5a4.6 4.6 0 0 1 -8.2 1.6" fill="none" stroke="#303030" stroke-width="1.7"/><path d="M2494.7 1339.5v3.6h-3.6zM2484.7 1350.5v-3.6h3.6z" fill="#303030"/>
<circle cx="2535.5" cy="1345.3" r="10" fill="#2e2e2e"/>
<path d="M2286.5 1392V1365Q2286.5 1361 2290.5 1361H2422V1392Z" fill="url(#sb2)"/>
<path d="M2423 1392V1361H2554Q2558 1361 2558 1365V1392Z" fill="url(#sb2)"/>
<line x1="2422.5" y1="1361" x2="2422.5" y2="1392" stroke="#5a5a5a" stroke-width="1" />
<circle cx="2316.6" cy="1376.3" r="9" fill="#a8a8a8" opacity=".7"/><path d="M2315.3 1372.5L2312 1376.3L2315.3 1380M2320.3 1372.5L2317 1376.3L2320.3 1380" fill="none" stroke="#444" stroke-width="1.3"/>
<circle cx="2530" cy="1376.3" r="9" fill="#a8a8a8" opacity=".7"/><path d="M2526.5 1372.5L2529.8 1376.3L2526.5 1380M2531.5 1372.5L2534.8 1376.3L2531.5 1380" fill="none" stroke="#444" stroke-width="1.3"/>
<text x="2341.51" y="1383.8" font-size="21.8" fill="#363636" textLength="52.10" lengthAdjust="spacingAndGlyphs" stroke="#363636" stroke-width="0.5" >Back</text>
<text x="2448.20" y="1383.8" font-size="21.8" fill="#363636" textLength="53.67" lengthAdjust="spacingAndGlyphs" stroke="#363636" stroke-width="0.5" >Next</text>
</svg>
</body></html>
